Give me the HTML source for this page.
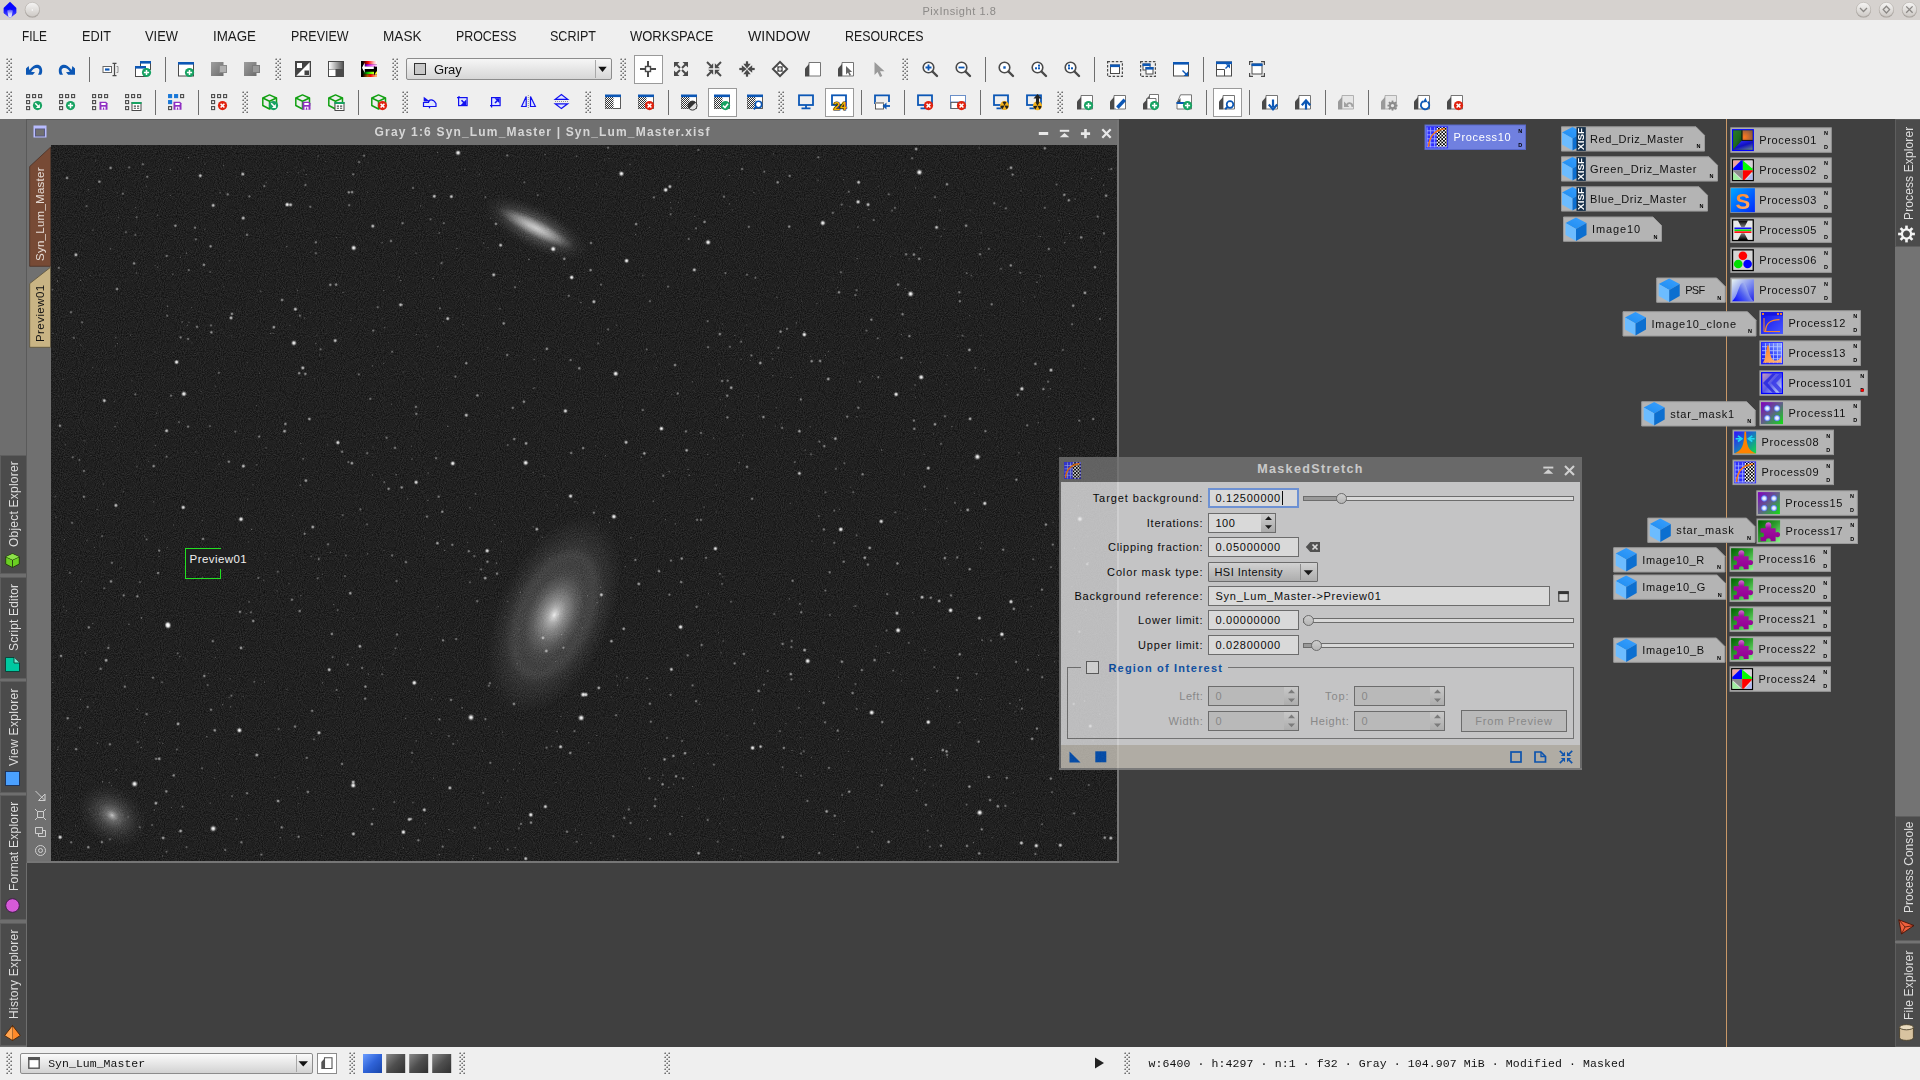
<!DOCTYPE html>
<html><head><meta charset="utf-8"><title>PixInsight 1.8</title>
<style>
html,body{margin:0;padding:0;background:#404040;}
body{width:1920px;height:1080px;position:relative;overflow:hidden;font-family:"Liberation Sans",sans-serif;}
div,span,svg{position:absolute;box-sizing:border-box;}
svg{overflow:visible;}
span{opacity:.999;}
</style></head><body>
<div style="left:0px;top:0px;width:1920px;height:20px;background:#d6d2cf;"></div>
<div style="left:0px;top:20px;width:1920px;height:99px;background:#efefef;"></div>
<div style="left:0px;top:119px;width:1920px;height:928px;background:#404040;"></div>
<div style="left:0px;top:1047px;width:1920px;height:33px;background:#efefef;"></div>
<span style="left:922.40px;top:4.85px;font:400 11px/normal 'Liberation Sans',sans-serif;color:#8c8a88;letter-spacing:0.569px;white-space:pre;">PixInsight 1.8</span>
<svg style="left:0;top:0" width="1920" height="20" viewBox="0 0 1920 20"><defs><linearGradient id="rbg" x1="0" y1="0" x2="0" y2="1"><stop offset="0" stop-color="#f6f5f4"/><stop offset="1" stop-color="#cdc9c5"/></linearGradient><linearGradient id="gem" x1="0" y1="0" x2="0" y2="1"><stop offset="0" stop-color="#4a4aff"/><stop offset="0.5" stop-color="#c8ccff"/><stop offset="1" stop-color="#eef0ff"/></linearGradient><linearGradient id="gem2" x1="0" y1="0" x2="0" y2="1"><stop offset="0" stop-color="#0000ff"/><stop offset="1" stop-color="#5a5aff"/></linearGradient></defs><path d="M10 1.700 L16.200 7.700 V13 L10 18 L3.800 13 V7.700 Z" fill="#0606ff"/><path d="M3.800 8 L10 10 L16.200 8 V13 L10 18 L3.800 13 Z" fill="url(#gem2)"/><path d="M10 9.500 L12.800 10.500 L11.600 16.700 L10 18 L8.400 16.700 L7.200 10.500 Z" fill="url(#gem)"/><circle cx="32.3" cy="10.100" r="7.500" fill="#96918c" opacity="0.8"/><circle cx="32.3" cy="9.500" r="7.200" fill="url(#rbg)" stroke="#b8b3ae" stroke-width="0.600"/><circle cx="1863.5" cy="10.100" r="7.500" fill="#96918c" opacity="0.8"/><circle cx="1863.5" cy="9.500" r="7.200" fill="url(#rbg)" stroke="#b8b3ae" stroke-width="0.600"/><circle cx="1886.4" cy="10.100" r="7.500" fill="#96918c" opacity="0.8"/><circle cx="1886.4" cy="9.500" r="7.200" fill="url(#rbg)" stroke="#b8b3ae" stroke-width="0.600"/><circle cx="1909.4" cy="10.100" r="7.500" fill="#96918c" opacity="0.8"/><circle cx="1909.4" cy="9.500" r="7.200" fill="url(#rbg)" stroke="#b8b3ae" stroke-width="0.600"/><circle cx="32.300" cy="10" r="0.700" fill="#fff"/><path d="M1860 8 L1863.500 11.500 L1867 8" fill="none" stroke="#8a8784" stroke-width="1.300"/><path d="M1886.400 6.200 L1889.600 9.600 L1886.400 13 L1883.200 9.600 Z" fill="none" stroke="#8a8784" stroke-width="1.300"/><path d="M1906.200 6.400 L1912.600 12.800 M1912.600 6.400 L1906.200 12.800" stroke="#8a8784" stroke-width="1.300"/></svg>
<span style="left:21.70px;top:28.13px;font:400 14px/normal 'Liberation Sans',sans-serif;color:#1a1a1a;white-space:pre;transform:scaleX(0.8456);transform-origin:0 0;">FILE</span>
<span style="left:81.70px;top:28.13px;font:400 14px/normal 'Liberation Sans',sans-serif;color:#1a1a1a;white-space:pre;transform:scaleX(0.9094);transform-origin:0 0;">EDIT</span>
<span style="left:145.20px;top:28.13px;font:400 14px/normal 'Liberation Sans',sans-serif;color:#1a1a1a;white-space:pre;transform:scaleX(0.9223);transform-origin:0 0;">VIEW</span>
<span style="left:212.70px;top:28.13px;font:400 14px/normal 'Liberation Sans',sans-serif;color:#1a1a1a;white-space:pre;transform:scaleX(0.9531);transform-origin:0 0;">IMAGE</span>
<span style="left:290.70px;top:28.13px;font:400 14px/normal 'Liberation Sans',sans-serif;color:#1a1a1a;white-space:pre;transform:scaleX(0.8906);transform-origin:0 0;">PREVIEW</span>
<span style="left:382.70px;top:28.13px;font:400 14px/normal 'Liberation Sans',sans-serif;color:#1a1a1a;white-space:pre;transform:scaleX(0.9704);transform-origin:0 0;">MASK</span>
<span style="left:455.70px;top:28.13px;font:400 14px/normal 'Liberation Sans',sans-serif;color:#1a1a1a;white-space:pre;transform:scaleX(0.8837);transform-origin:0 0;">PROCESS</span>
<span style="left:550.20px;top:28.13px;font:400 14px/normal 'Liberation Sans',sans-serif;color:#1a1a1a;white-space:pre;transform:scaleX(0.8960);transform-origin:0 0;">SCRIPT</span>
<span style="left:630.20px;top:28.13px;font:400 14px/normal 'Liberation Sans',sans-serif;color:#1a1a1a;white-space:pre;transform:scaleX(0.9280);transform-origin:0 0;">WORKSPACE</span>
<span style="left:748.20px;top:28.13px;font:400 14px/normal 'Liberation Sans',sans-serif;color:#1a1a1a;white-space:pre;transform:scaleX(1.0093);transform-origin:0 0;">WINDOW</span>
<span style="left:844.70px;top:28.13px;font:400 14px/normal 'Liberation Sans',sans-serif;color:#1a1a1a;white-space:pre;transform:scaleX(0.8852);transform-origin:0 0;">RESOURCES</span>
<svg style="left:0;top:0" width="1920" height="120" viewBox="0 0 1920 120"><defs><pattern id="chk" width="2" height="2" patternUnits="userSpaceOnUse"><rect width="2" height="2" fill="#fff"/><rect width="1" height="1" fill="#333"/><rect x="1" y="1" width="1" height="1" fill="#333"/></pattern>
<pattern id="grip" width="4" height="4" patternUnits="userSpaceOnUse"><rect width="4" height="4" fill="#efefef"/><rect width="2" height="2" fill="#8e8e8e"/><rect x="2" y="2" width="2" height="2" fill="#8e8e8e"/><rect x="2" y="0" width="1" height="1" fill="#fff"/><rect x="0" y="2" width="1" height="1" fill="#fff"/></pattern>
<linearGradient id="gg" x1="0" y1="0" x2="1" y2="1"><stop offset="0" stop-color="#9e9e9e"/><stop offset="1" stop-color="#6c6c6c"/></linearGradient>
<linearGradient id="g2" x1="0" y1="0" x2="1" y2="0"><stop offset="0" stop-color="#fff"/><stop offset="1" stop-color="#555"/></linearGradient>
<linearGradient id="cs1"><stop offset="0.1" stop-color="#000"/><stop offset="0.45" stop-color="#f00"/><stop offset="0.8" stop-color="#fbb"/><stop offset="1" stop-color="#fff"/></linearGradient>
<linearGradient id="cs2"><stop offset="0.1" stop-color="#000"/><stop offset="0.4" stop-color="#a0e"/><stop offset="0.7" stop-color="#f6f"/><stop offset="1" stop-color="#fdf"/></linearGradient>
<linearGradient id="cs3"><stop offset="0.1" stop-color="#000"/><stop offset="0.4" stop-color="#0b0"/><stop offset="0.65" stop-color="#7f0"/><stop offset="0.9" stop-color="#ff3"/></linearGradient>
<linearGradient id="cs4"><stop offset="0.1" stop-color="#000"/><stop offset="0.4" stop-color="#a50"/><stop offset="0.6" stop-color="#f00"/><stop offset="0.9" stop-color="#fa6"/></linearGradient>
<linearGradient id="rb" x1="0" y1="0" x2="1" y2="1"><stop offset="0" stop-color="#000" stop-opacity="0"/><stop offset="0.35" stop-color="#f03" stop-opacity="0.9"/><stop offset="0.5" stop-color="#f0f" stop-opacity="0.3"/><stop offset="0.7" stop-color="#3f3" stop-opacity="0.9"/><stop offset="0.85" stop-color="#ff0" stop-opacity="0.8"/><stop offset="1" stop-color="#fff"/></linearGradient>
</defs><rect x="634.5" y="55.5" width="28" height="28" fill="#fff" stroke="#9a9a9a" stroke-width="1"/><rect x="708.5" y="88.5" width="28" height="28" fill="#fff" stroke="#9a9a9a" stroke-width="1"/><rect x="825.5" y="88.5" width="28" height="28" fill="#fff" stroke="#9a9a9a" stroke-width="1"/><rect x="1213.5" y="88.5" width="28" height="28" fill="#fff" stroke="#9a9a9a" stroke-width="1"/><g transform="translate(26,61)"><path d="M0 7.400 L2.600 5 L3.400 9.100 C6 5.500 9 3.800 10.900 3.800 C14.500 3.800 16.200 6.500 16.200 9.700 C16.200 11.500 15.800 12.800 15.100 13.800 H12 C12.900 12.300 13.400 10.800 13.400 9.100 C13.400 7.500 12 6.900 10.100 6.900 C8.500 6.900 6.500 8.500 5.100 10.800 L9 11.300 L6.800 13.800 H0 Z" fill="#0c57b5"/></g><g transform="translate(59,61)"><g transform="translate(16,0) scale(-1,1)"><path d="M0 7.400 L2.600 5 L3.400 9.100 C6 5.500 9 3.800 10.900 3.800 C14.500 3.800 16.200 6.500 16.200 9.700 C16.200 11.500 15.800 12.800 15.100 13.800 H12 C12.900 12.300 13.400 10.800 13.400 9.100 C13.400 7.500 12 6.900 10.100 6.900 C8.500 6.900 6.500 8.500 5.100 10.800 L9 11.300 L6.800 13.800 H0 Z" fill="#0c57b5"/></g></g><g transform="translate(102,61)"><rect x="1" y="5.5" width="8.500" height="6" fill="#fff" stroke="#666" stroke-width="1"/><rect x="3" y="7.4" width="4.5" height="2.2" fill="#0c57b5"/><path d="M12.5 2.500 V14.5 M10.5 2.3 H14.5 M10.5 14.7 H14.5" stroke="#4a4a4a" stroke-width="1.2" fill="none"/><path d="M14.500 5.5 H16 V11.5 H14.5" stroke="#888" fill="none" stroke-width="0.9"/></g><g transform="translate(135,61)"><rect x="5.5" y="0.5" width="10" height="8" fill="#fff" stroke="#4a4a4a" stroke-width="1"/><rect x="5" y="0" width="11" height="2.6" fill="#0c57b5"/><rect x="0.5" y="5.5" width="10" height="10" fill="#fff" stroke="#4a4a4a" stroke-width="1"/><rect x="0" y="5" width="11" height="2.6" fill="#0c57b5"/><circle cx="11.5" cy="11.5" r="4.6" fill="#17a262"/><path d="M8.9 11.5 H14.1 M11.5 8.9 V14.1" stroke="#fff" stroke-width="1.5"/></g><g transform="translate(178,61)"><rect x="0.5" y="1.5" width="15" height="13.5" fill="#fff" stroke="#4a4a4a" stroke-width="1"/><rect x="0" y="1" width="16" height="2.6" fill="#0c57b5"/><circle cx="11.5" cy="11.5" r="4.6" fill="#17a262"/><path d="M8.9 11.5 H14.1 M11.5 8.9 V14.1" stroke="#fff" stroke-width="1.5"/></g><g transform="translate(211,61)"><rect x="0" y="1" width="12.5" height="14" fill="url(#gg)"/><rect x="8.5" y="4.5" width="7" height="7" fill="#b0b0b0" stroke="#8a8a8a" stroke-width="1"/></g><g transform="translate(244,61)"><rect x="0" y="1" width="12.5" height="14" fill="url(#gg)"/><rect x="8.5" y="4.5" width="7" height="7" fill="#9a9a9a" stroke="#7c7c7c" stroke-width="1"/></g><g transform="translate(295,61)"><rect x="0" y="0" width="16" height="16" fill="#444"/><path d="M1.3 14.7 L14.7 1.3 V14.7 Z" fill="#fff"/><rect x="2" y="2" width="5" height="5" fill="#fff"/><rect x="9.5" y="9.500" width="4.5" height="4.5" fill="#444"/></g><g transform="translate(328,61)"><rect x="0" y="0" width="16" height="16" fill="#4a4a4a"/><rect x="1" y="1" width="14" height="7" fill="url(#g2)"/><rect x="1" y="8.5" width="6.500" height="6.500" fill="#fff"/></g><g transform="translate(361,61)"><rect x="0" y="0" width="16" height="16" fill="#000"/><rect x="0" y="0" width="16" height="3.300" fill="url(#cs1)"/><rect x="0" y="3.300" width="16" height="2.400" fill="url(#cs2)"/><rect x="0" y="10.500" width="16" height="2.800" fill="url(#cs3)"/><rect x="0" y="13.300" width="16" height="2.700" fill="url(#cs4)"/><path d="M1 6.700 L3.700 1.700 V5.400 H12.800 V8 H3.700 V11.700 Z" fill="#fff"/><path d="M15.600 9.700 L13 4.700 V8 H4 V10.600 H13 V14.700 Z" fill="#000"/></g><g transform="translate(640,61)"><path d="M0 8 H16 M8 0 V16" stroke="#4a4a4a" stroke-width="2"/><rect x="5.500" y="5.500" width="5" height="5" fill="#fff" stroke="#4a4a4a" stroke-width="1.400"/></g><g transform="translate(673,61)"><g transform="rotate(0 8 8)"><path d="M3 3 L7 7" stroke="#4a4a4a" stroke-width="2"/><path d="M1 1 H6.5 L1 6.5 Z" fill="#4a4a4a"/></g><g transform="rotate(90 8 8)"><path d="M3 3 L7 7" stroke="#4a4a4a" stroke-width="2"/><path d="M1 1 H6.5 L1 6.5 Z" fill="#4a4a4a"/></g><g transform="rotate(180 8 8)"><path d="M3 3 L7 7" stroke="#4a4a4a" stroke-width="2"/><path d="M1 1 H6.5 L1 6.5 Z" fill="#4a4a4a"/></g><g transform="rotate(270 8 8)"><path d="M3 3 L7 7" stroke="#4a4a4a" stroke-width="2"/><path d="M1 1 H6.5 L1 6.5 Z" fill="#4a4a4a"/></g></g><g transform="translate(706,61)"><g transform="rotate(0 8 8)"><path d="M1 1 L5 5" stroke="#4a4a4a" stroke-width="2"/><path d="M7.2 7.2 H2.200 L7.2 2.2 Z" fill="#4a4a4a"/></g><g transform="rotate(90 8 8)"><path d="M1 1 L5 5" stroke="#4a4a4a" stroke-width="2"/><path d="M7.2 7.2 H2.200 L7.2 2.2 Z" fill="#4a4a4a"/></g><g transform="rotate(180 8 8)"><path d="M1 1 L5 5" stroke="#4a4a4a" stroke-width="2"/><path d="M7.2 7.2 H2.200 L7.2 2.2 Z" fill="#4a4a4a"/></g><g transform="rotate(270 8 8)"><path d="M1 1 L5 5" stroke="#4a4a4a" stroke-width="2"/><path d="M7.2 7.2 H2.200 L7.2 2.2 Z" fill="#4a4a4a"/></g></g><g transform="translate(739,61)"><g transform="rotate(0 8 8)"><path d="M8 0.300 V4" stroke="#4a4a4a" stroke-width="2.200"/><path d="M8 7.600 L4.300 2.800 H11.700 Z" fill="#4a4a4a"/></g><g transform="rotate(90 8 8)"><path d="M8 0.300 V4" stroke="#4a4a4a" stroke-width="2.200"/><path d="M8 7.600 L4.300 2.800 H11.700 Z" fill="#4a4a4a"/></g><g transform="rotate(180 8 8)"><path d="M8 0.300 V4" stroke="#4a4a4a" stroke-width="2.200"/><path d="M8 7.600 L4.300 2.800 H11.700 Z" fill="#4a4a4a"/></g><g transform="rotate(270 8 8)"><path d="M8 0.300 V4" stroke="#4a4a4a" stroke-width="2.200"/><path d="M8 7.600 L4.300 2.800 H11.700 Z" fill="#4a4a4a"/></g></g><g transform="translate(772,61)"><path d="M8 -0.500 L16.500 8 L8 16.500 L-0.500 8 Z" fill="#4a4a4a"/><g transform="rotate(0 8 8)"><path d="M8 2.200 L10.800 5.300 H5.200 Z" fill="#fff"/></g><g transform="rotate(90 8 8)"><path d="M8 2.200 L10.800 5.300 H5.200 Z" fill="#fff"/></g><g transform="rotate(180 8 8)"><path d="M8 2.200 L10.800 5.300 H5.200 Z" fill="#fff"/></g><g transform="rotate(270 8 8)"><path d="M8 2.200 L10.800 5.300 H5.200 Z" fill="#fff"/></g><path d="M8 6.300 V9.700 M6.300 8 H9.700" stroke="#fff" stroke-width="1.200"/></g><g transform="translate(805,61)"><path d="M4 1.5 H15.5 V15 H4 Z" fill="#fff" stroke="#666" stroke-width="0.9"/><path d="M0 15.4 V7.5 L4 3 V15.4 Z" fill="#4a4a4a"/></g><g transform="translate(838,61)"><path d="M4 1.5 H15.5 V15 H4 Z" fill="#fff" stroke="#666" stroke-width="0.9"/><path d="M0 15.4 V7.5 L4 3 V15.4 Z" fill="#4a4a4a"/><path d="M8 5 V13.5 L10 11.5 L11.500 14.8 L13 14 L11.5 11 H14.2 Z" fill="#666"/></g><g transform="translate(871,61)"><path d="M3.500 1 V14 L6.6 11 L9 16 L11.3 15 L9 10.300 H13.500 Z" fill="#9a9a9a"/></g><g transform="translate(922,61)"><circle cx="6.5" cy="6.5" r="5.3" fill="#fff" stroke="#4a4a4a" stroke-width="1.6"/><path d="M10.5 10.5 L15 15" stroke="#4a4a4a" stroke-width="2.4" stroke-linecap="round"/><path d="M3.500 6.5 H9.500 M6.5 3.500 V9.5" stroke="#0c57b5" stroke-width="1.8"/></g><g transform="translate(955,61)"><circle cx="6.5" cy="6.5" r="5.3" fill="#fff" stroke="#4a4a4a" stroke-width="1.6"/><path d="M10.5 10.5 L15 15" stroke="#4a4a4a" stroke-width="2.4" stroke-linecap="round"/><path d="M3.500 6.5 H9.500" stroke="#0c57b5" stroke-width="1.8"/></g><g transform="translate(998,61)"><circle cx="6.5" cy="6.5" r="5.3" fill="#fff" stroke="#4a4a4a" stroke-width="1.6"/><path d="M10.5 10.5 L15 15" stroke="#4a4a4a" stroke-width="2.4" stroke-linecap="round"/><rect x="5.3" y="5.3" width="2.4" height="2.4" fill="#0c57b5"/></g><g transform="translate(1031,61)"><circle cx="6.5" cy="6.5" r="5.3" fill="#fff" stroke="#4a4a4a" stroke-width="1.6"/><path d="M10.5 10.5 L15 15" stroke="#4a4a4a" stroke-width="2.4" stroke-linecap="round"/><rect x="4" y="6.3" width="2" height="2" fill="#0c57b5"/><rect x="7" y="6.3" width="2" height="2" fill="#0c57b5"/><rect x="7" y="3.600" width="2" height="2" fill="#0c57b5"/></g><g transform="translate(1064,61)"><circle cx="6.5" cy="6.5" r="5.3" fill="#fff" stroke="#4a4a4a" stroke-width="1.6"/><path d="M10.5 10.5 L15 15" stroke="#4a4a4a" stroke-width="2.4" stroke-linecap="round"/><rect x="4" y="6.3" width="2" height="2" fill="#0c57b5"/><rect x="7" y="6.3" width="2" height="2" fill="#0c57b5"/><rect x="4" y="3.600" width="2" height="2" fill="#0c57b5"/></g><g transform="translate(1107,61)"><rect x="0.6" y="0.6" width="14.8" height="14.8" fill="none" stroke="#4a4a4a" stroke-width="1.2" stroke-dasharray="2.500 1.6"/><rect x="3.5" y="4.0" width="9" height="8.5" fill="#fff" stroke="#4a4a4a" stroke-width="1"/><rect x="3" y="3.5" width="10" height="2.6" fill="#0c57b5"/></g><g transform="translate(1140,61)"><rect x="0.6" y="0.6" width="14.8" height="14.8" fill="none" stroke="#4a4a4a" stroke-width="1.2" stroke-dasharray="2.500 1.6"/><rect x="3.0" y="3.0" width="7" height="6" fill="#fff" stroke="#4a4a4a" stroke-width="1"/><rect x="2.5" y="2.5" width="8" height="2.6" fill="#0c57b5"/><rect x="6.0" y="6.5" width="7" height="6.5" fill="#fff" stroke="#4a4a4a" stroke-width="1"/><rect x="5.5" y="6" width="8" height="2.6" fill="#0c57b5"/></g><g transform="translate(1173,61)"><rect x="0.5" y="1.5" width="15" height="13.5" fill="#fff" stroke="#4a4a4a" stroke-width="1"/><rect x="0" y="1" width="16" height="2.6" fill="#0c57b5"/><path d="M9.500 9.500 L14 14" stroke="#0c57b5" stroke-width="1.4"/><path d="M15 10.500 V15 H10.500 Z" fill="#0c57b5"/></g><g transform="translate(1216,61)"><rect x="0.5" y="1.0" width="15" height="14" fill="#fff" stroke="#4a4a4a" stroke-width="1"/><rect x="0" y="0.5" width="16" height="2.6" fill="#0c57b5"/><path d="M0.500 8.500 H8.500 V15" fill="none" stroke="#4a4a4a" stroke-width="1"/><path d="M9.500 7.500 L13 4" stroke="#0c57b5" stroke-width="1.4"/><path d="M14 3.2 V7.6 L9.600 3.2 Z" fill="#0c57b5"/></g><g transform="translate(1249,61)"><rect x="3.0" y="3.0" width="10" height="10" fill="#fff" stroke="#4a4a4a" stroke-width="1"/><rect x="2.5" y="2.5" width="11" height="2.6" fill="#0c57b5"/><path d="M0.600 4 V0.600 H4 M12 0.600 H15.400 V4 M15.400 12 V15.400 H12 M4 15.400 H0.600 V12" fill="none" stroke="#4a4a4a" stroke-width="1.2"/></g><g transform="translate(26,94)"><rect x="0.6" y="0.6" width="3" height="3" fill="none" stroke="#4a4a4a" stroke-width="1.1"/><rect x="6.6" y="0.6" width="3" height="3" fill="none" stroke="#4a4a4a" stroke-width="1.1"/><rect x="12.6" y="0.6" width="3" height="3" fill="none" stroke="#4a4a4a" stroke-width="1.1"/><rect x="0.6" y="6.6" width="3" height="3" fill="none" stroke="#4a4a4a" stroke-width="1.1"/><rect x="0.6" y="12.6" width="3" height="3" fill="none" stroke="#4a4a4a" stroke-width="1.1"/><circle cx="11.5" cy="11.6" r="4.6" fill="#17a262"/><path d="M9.2 9.3 L12.7 12.799999999999999" stroke="#fff" stroke-width="1.5"/><path d="M13.9 10.0 V14.0 H9.9 Z" fill="#fff"/></g><g transform="translate(59,94)"><rect x="0.6" y="0.6" width="3" height="3" fill="none" stroke="#4a4a4a" stroke-width="1.1"/><rect x="6.6" y="0.6" width="3" height="3" fill="none" stroke="#4a4a4a" stroke-width="1.1"/><rect x="12.6" y="0.6" width="3" height="3" fill="none" stroke="#4a4a4a" stroke-width="1.1"/><rect x="0.6" y="6.6" width="3" height="3" fill="none" stroke="#4a4a4a" stroke-width="1.1"/><rect x="0.6" y="12.6" width="3" height="3" fill="none" stroke="#4a4a4a" stroke-width="1.1"/><circle cx="11.5" cy="11.6" r="4.6" fill="#17a262"/><path d="M8.9 11.6 H14.1 M11.5 9.0 V14.2" stroke="#fff" stroke-width="1.5"/></g><g transform="translate(92,94)"><rect x="0.6" y="0.6" width="3" height="3" fill="none" stroke="#4a4a4a" stroke-width="1.1"/><rect x="6.6" y="0.6" width="3" height="3" fill="none" stroke="#4a4a4a" stroke-width="1.1"/><rect x="12.6" y="0.6" width="3" height="3" fill="none" stroke="#4a4a4a" stroke-width="1.1"/><rect x="0.6" y="6.6" width="3" height="3" fill="none" stroke="#4a4a4a" stroke-width="1.1"/><rect x="0.6" y="12.6" width="3" height="3" fill="none" stroke="#4a4a4a" stroke-width="1.1"/><path d="M7.5 7.7 H14.0 L15.5 9.2 V15.7 H7.5 Z" fill="#8f2fc2"/><rect x="9.3" y="9.0" width="4.4" height="2" fill="#fff"/><rect x="9.5" y="12.7" width="4" height="3" fill="#fff"/><rect x="10.9" y="13.5" width="1.3" height="2.2" fill="#8f2fc2"/></g><g transform="translate(125,94)"><rect x="0.6" y="0.6" width="3" height="3" fill="none" stroke="#4a4a4a" stroke-width="1.1"/><rect x="6.6" y="0.6" width="3" height="3" fill="none" stroke="#4a4a4a" stroke-width="1.1"/><rect x="12.6" y="0.6" width="3" height="3" fill="none" stroke="#4a4a4a" stroke-width="1.1"/><rect x="0.6" y="6.6" width="3" height="3" fill="none" stroke="#4a4a4a" stroke-width="1.1"/><rect x="0.6" y="12.6" width="3" height="3" fill="none" stroke="#4a4a4a" stroke-width="1.1"/><rect x="7" y="8.5" width="9" height="8" fill="#fff" stroke="#4a4a4a" stroke-width="1"/><rect x="6.5" y="8.0" width="10" height="2" fill="#17a262"/><path d="M8.8 12.1 H11 M12 12.1 H14.2 M8.8 14.3 H11 M12 14.3 H14.2" stroke="#4a4a4a" stroke-width="1.1"/></g><g transform="translate(168,94)"><rect x="0.6" y="0.6" width="3" height="3" fill="#1a78d8" stroke="#1a78d8" stroke-width="1.1"/><rect x="6.6" y="0.6" width="3" height="3" fill="#1a78d8" stroke="#1a78d8" stroke-width="1.1"/><rect x="12.6" y="0.6" width="3" height="3" fill="none" stroke="#4a4a4a" stroke-width="1.1"/><rect x="0.6" y="6.6" width="3" height="3" fill="#1a78d8" stroke="#1a78d8" stroke-width="1.1"/><rect x="0.6" y="12.6" width="3" height="3" fill="none" stroke="#4a4a4a" stroke-width="1.1"/><path d="M5.5 7.7 H12.0 L13.5 9.2 V15.7 H5.5 Z" fill="#8f2fc2"/><rect x="7.3" y="9.0" width="4.4" height="2" fill="#fff"/><rect x="7.5" y="12.7" width="4" height="3" fill="#fff"/><rect x="8.9" y="13.5" width="1.3" height="2.2" fill="#8f2fc2"/></g><g transform="translate(211,94)"><rect x="0.6" y="0.6" width="3" height="3" fill="none" stroke="#4a4a4a" stroke-width="1.1"/><rect x="6.6" y="0.6" width="3" height="3" fill="none" stroke="#4a4a4a" stroke-width="1.1"/><rect x="12.6" y="0.6" width="3" height="3" fill="none" stroke="#4a4a4a" stroke-width="1.1"/><rect x="0.6" y="6.6" width="3" height="3" fill="none" stroke="#4a4a4a" stroke-width="1.1"/><rect x="0.6" y="12.6" width="3" height="3" fill="none" stroke="#4a4a4a" stroke-width="1.1"/><circle cx="11.5" cy="11.6" r="4.6" fill="#e0220f"/><path d="M9.6 9.7 L13.4 13.5 M13.4 9.7 L9.6 13.5" stroke="#fff" stroke-width="1.6"/></g><g transform="translate(262,94)"><g fill="none" stroke="#12a012" stroke-width="1.5" stroke-linejoin="round"><path d="M7.5 0.9 L14.5 4 V11.5 L7.5 15 L0.8 11.5 V4 Z"/><path d="M0.8 4 L7.5 7.2 L14.5 4 M7.500 7.200 V15"/></g><circle cx="11.5" cy="11.6" r="4.6" fill="#17a262"/><path d="M9.2 9.3 L12.7 12.799999999999999" stroke="#fff" stroke-width="1.5"/><path d="M13.9 10.0 V14.0 H9.9 Z" fill="#fff"/></g><g transform="translate(295,94)"><g fill="none" stroke="#12a012" stroke-width="1.5" stroke-linejoin="round"><path d="M7.5 0.9 L14.5 4 V11.5 L7.5 15 L0.8 11.5 V4 Z"/><path d="M0.8 4 L7.5 7.2 L14.5 4 M7.500 7.200 V15"/></g><path d="M7.5 7.7 H14.0 L15.5 9.2 V15.7 H7.5 Z" fill="#8f2fc2"/><rect x="9.3" y="9.0" width="4.4" height="2" fill="#fff"/><rect x="9.5" y="12.7" width="4" height="3" fill="#fff"/><rect x="10.9" y="13.5" width="1.3" height="2.2" fill="#8f2fc2"/></g><g transform="translate(328,94)"><g fill="none" stroke="#12a012" stroke-width="1.5" stroke-linejoin="round"><path d="M7.5 0.9 L14.5 4 V11.5 L7.5 15 L0.8 11.5 V4 Z"/><path d="M0.8 4 L7.5 7.2 L14.5 4 M7.500 7.200 V15"/></g><rect x="7" y="8.5" width="9" height="8" fill="#fff" stroke="#4a4a4a" stroke-width="1"/><rect x="6.5" y="8.0" width="10" height="2" fill="#17a262"/><path d="M8.8 12.1 H11 M12 12.1 H14.2 M8.8 14.3 H11 M12 14.3 H14.2" stroke="#4a4a4a" stroke-width="1.1"/></g><g transform="translate(371,94)"><g fill="none" stroke="#12a012" stroke-width="1.5" stroke-linejoin="round"><path d="M7.5 0.9 L14.5 4 V11.5 L7.5 15 L0.8 11.5 V4 Z"/><path d="M0.8 4 L7.5 7.2 L14.5 4 M7.500 7.200 V15"/></g><circle cx="11.5" cy="11.6" r="4.6" fill="#e0220f"/><path d="M9.6 9.7 L13.4 13.5 M13.4 9.7 L9.6 13.5" stroke="#fff" stroke-width="1.6"/></g><g transform="translate(421,94)"><path d="M2.500 12.500 V8.500 H7.500 C7.500 5.500 12 4.300 15 9.500 V12.500 Z" fill="#dfe5ff" stroke="#1010f0" stroke-width="1.200"/><path d="M2.700 2.700 V7.600 H9 Z" fill="#1010f0"/><path d="M8.500 12.500 V14.300" stroke="#1010f0" stroke-width="1.300"/></g><g transform="translate(454,94)"><rect x="4.600" y="3.600" width="8.500" height="8" fill="#dfe5ff" stroke="#1010f0" stroke-width="1.200"/><path d="M5 2 V4 M3 3.600 H5" stroke="#1010f0" stroke-width="1.200"/><path d="M12.300 5.500 V11 H6.800 Z" fill="#1010f0"/><path d="M7.500 6.200 L10.500 9.200" stroke="#1010f0" stroke-width="1.600"/></g><g transform="translate(487,94)"><rect x="4.600" y="3.600" width="8.500" height="8" fill="#dfe5ff" stroke="#1010f0" stroke-width="1.200"/><path d="M4.600 11.600 V13.500 M3 11.600 H5" stroke="#1010f0" stroke-width="1.200"/><path d="M7.500 4.200 H12.500 V9.200 Z" fill="#1010f0"/><path d="M8 9 L11 6" stroke="#1010f0" stroke-width="1.600"/></g><g transform="translate(520,94)"><path d="M1.600 12.500 L6.200 2.600 V12.500 Z M15.400 12.500 L10.500 2.600 V12.500 Z" fill="#dfe5ff" stroke="#1010f0" stroke-width="1.200"/><path d="M8.300 1 V14.500" stroke="#888" stroke-width="0.900" stroke-dasharray="1 1"/></g><g transform="translate(553,94)"><path d="M2.200 5.300 H14.700 L8.400 0.500 Z M2.200 9.800 H14.700 L8.400 14.600 Z" fill="#dfe5ff" stroke="#1010f0" stroke-width="1.200"/><path d="M2 7.500 H15" stroke="#888" stroke-width="0.900" stroke-dasharray="1 1"/></g><g transform="translate(605,94)"><rect x="0.5" y="1.5" width="15" height="13" fill="#fff" stroke="#4a4a4a" stroke-width="0.9"/><rect x="0.5" y="2" width="8" height="12.500" fill="url(#chk)"/><rect x="0" y="0.5" width="16" height="2.6" fill="#0c57b5"/></g><g transform="translate(638,94)"><rect x="0.5" y="1.5" width="15" height="13" fill="#fff" stroke="#4a4a4a" stroke-width="0.9"/><rect x="0.5" y="2" width="8" height="12.500" fill="url(#chk)"/><rect x="0" y="0.5" width="16" height="2.6" fill="#0c57b5"/><circle cx="11.5" cy="11.6" r="4.6" fill="#e0220f"/><path d="M9.6 9.7 L13.4 13.5 M13.4 9.7 L9.6 13.5" stroke="#fff" stroke-width="1.6"/></g><g transform="translate(681,94)"><rect x="0.5" y="1.5" width="15" height="13" fill="#fff" stroke="#4a4a4a" stroke-width="0.9"/><rect x="0.5" y="2" width="8" height="12.500" fill="url(#chk)"/><rect x="0" y="0.5" width="16" height="2.6" fill="#0c57b5"/><circle cx="11.5" cy="11.600" r="4.500" fill="#333"/><path d="M8.300 14.800 A4.500 4.500 0 0 0 14.700 8.400 Z" fill="#fff" opacity="0.85"/><circle cx="11.5" cy="11.600" r="4.500" fill="none" stroke="#333" stroke-width="1"/></g><g transform="translate(714,94)"><rect x="0.5" y="1.5" width="15" height="13" fill="#fff" stroke="#4a4a4a" stroke-width="0.9"/><rect x="0.5" y="2" width="8" height="12.500" fill="url(#chk)"/><rect x="0" y="0.5" width="16" height="2.6" fill="#0c57b5"/><circle cx="11.5" cy="11.600" r="4.600" fill="#17a262"/><path d="M9 11.600 L11 13.500 L14 9.700" fill="none" stroke="#fff" stroke-width="1.600"/></g><g transform="translate(747,94)"><rect x="0.5" y="1.5" width="15" height="13" fill="#fff" stroke="#4a4a4a" stroke-width="0.9"/><rect x="0.5" y="2" width="8" height="12.500" fill="url(#chk)"/><rect x="0" y="0.5" width="16" height="2.6" fill="#0c57b5"/><circle cx="11.500" cy="10.500" r="3.200" fill="#fff" stroke="#0c57b5" stroke-width="1.600"/><path d="M9.300 12.800 L6.800 15.300" stroke="#0c57b5" stroke-width="2"/></g><g transform="translate(798,94)"><rect x="1" y="1.3" width="14" height="9.7" fill="none" stroke="#0c57b5" stroke-width="1.8"/><path d="M8 11 V14 M3.500 14.3 H12.5" stroke="#0c57b5" stroke-width="1.8"/></g><g transform="translate(831,94)"><rect x="1" y="1.3" width="14" height="9.7" fill="none" stroke="#0c57b5" stroke-width="1.8"/><path d="M8 11 V14 M3.500 14.3 H12.5" stroke="#0c57b5" stroke-width="1.8"/><text x="9" y="15.800" font-family="Liberation Sans" font-weight="700" font-size="10.500" text-anchor="middle" fill="#f5b400" stroke="#1a1a1a" stroke-width="1.100" paint-order="stroke" textLength="13" lengthAdjust="spacingAndGlyphs">24</text></g><g transform="translate(874,94)"><path d="M1 10 V1.300 H15 V8" fill="none" stroke="#0c57b5" stroke-width="1.800"/><rect x="1.500" y="8.500" width="8" height="6.500" fill="#fff" stroke="#4a4a4a" stroke-width="0.900"/><rect x="1" y="8" width="9" height="1.800" fill="#9a9a9a"/><path d="M10 12 H16" stroke="#0c57b5" stroke-width="1.800"/><path d="M8.500 12 L12.500 8.500 V15.500 Z" fill="#0c57b5"/></g><g transform="translate(917,94)"><rect x="1" y="1.3" width="14" height="9.7" fill="none" stroke="#0c57b5" stroke-width="1.8"/><path d="M8 11 V14 M3.500 14.3 H12.5" stroke="#0c57b5" stroke-width="1.8"/><circle cx="11.5" cy="11.6" r="4.6" fill="#e0220f"/><path d="M9.6 9.7 L13.4 13.5 M13.4 9.7 L9.6 13.5" stroke="#fff" stroke-width="1.6"/></g><g transform="translate(950,94)"><rect x="0.500" y="1.500" width="15" height="13" fill="#fff" stroke="#6a8fc8" stroke-width="1"/><path d="M0.500 8 H15.500" stroke="#6a8fc8"/><rect x="1" y="8.500" width="7" height="6" fill="#fff" stroke="#4a4a4a" stroke-width="0.8"/><circle cx="11.5" cy="11.6" r="4.6" fill="#e0220f"/><path d="M9.6 9.7 L13.4 13.5 M13.4 9.7 L9.6 13.5" stroke="#fff" stroke-width="1.6"/></g><g transform="translate(993,94)"><rect x="1" y="1.3" width="14" height="9.7" fill="none" stroke="#0c57b5" stroke-width="1.8"/><path d="M8 11 V14 M3.500 14.3 H12.5" stroke="#0c57b5" stroke-width="1.8"/><circle cx="11.5" cy="11.6" r="4.5" fill="#f5b21a"/><g fill="#222"><path d="M11.5 11.6 L9.5 8.1 A4 4 0 0 1 13.5 8.1 Z"/><path d="M11.5 11.6 L15.5 11.799999999999999 A4 4 0 0 1 13.5 15.2 Z"/><path d="M11.5 11.6 L9.5 15.2 A4 4 0 0 1 7.5 11.799999999999999 Z"/></g></g><g transform="translate(1026,94)"><rect x="1" y="1.3" width="14" height="9.7" fill="none" stroke="#0c57b5" stroke-width="1.8"/><path d="M8 11 V14 M3.500 14.3 H12.5" stroke="#0c57b5" stroke-width="1.8"/><circle cx="11.5" cy="11.8" r="4.5" fill="#f5b21a"/><g fill="#222"><path d="M11.5 11.8 L9.5 8.3 A4 4 0 0 1 13.5 8.3 Z"/><path d="M11.5 11.8 L15.5 12.0 A4 4 0 0 1 13.5 15.4 Z"/><path d="M11.5 11.8 L9.5 15.4 A4 4 0 0 1 7.5 12.0 Z"/></g><path d="M11.500 0 L15.500 4.500 H13 V8 H10 V4.500 H7.500 Z" fill="#222"/></g><g transform="translate(1077,94)"><path d="M4 1.5 H15.5 V15 H4 Z" fill="#fff" stroke="#666" stroke-width="0.9"/><path d="M0 15.4 V7.5 L4 3 V15.4 Z" fill="#4a4a4a"/><circle cx="11.5" cy="11.6" r="4.6" fill="#17a262"/><path d="M8.9 11.6 H14.1 M11.5 9.0 V14.2" stroke="#fff" stroke-width="1.5"/></g><g transform="translate(1110,94)"><path d="M4 1.5 H15.5 V15 H4 Z" fill="#fff" stroke="#666" stroke-width="0.9"/><path d="M0 15.4 V7.5 L4 3 V15.4 Z" fill="#4a4a4a"/><path d="M5.500 15.500 L6.500 12 L13.500 4.500 L16 7 L9 14.500 Z" fill="#0c57b5"/><path d="M5.500 15.500 L6.300 12.600 L8.400 14.700 Z" fill="#fff"/></g><g transform="translate(1143,94)"><path d="M6.500 0.500 H15.500 V11 H6.500 Z" fill="#fff" stroke="#666" stroke-width="0.9"/><path d="M3 11 V5 L6.500 1.500 V11 Z" fill="#666"/><path d="M4 4.500 H13 V15 H4 Z" fill="#fff" stroke="#666" stroke-width="0.9"/><path d="M0 15.400 V9.500 L4 5.500 V15.400 Z" fill="#4a4a4a"/><circle cx="11.5" cy="11.6" r="4.6" fill="#17a262"/><path d="M8.9 11.6 H14.1 M11.5 9.0 V14.2" stroke="#fff" stroke-width="1.5"/></g><g transform="translate(1176,94)"><path d="M4.500 0.800 H15.500 V15 H1 V9 Z" fill="#fff" stroke="#666" stroke-width="0.9"/><path d="M0.500 9 L4.500 4 V9 Z" fill="#4a4a4a"/><path d="M0.500 9 H9" stroke="#0c57b5" stroke-width="2"/><circle cx="11.5" cy="11.6" r="4.6" fill="#17a262"/><path d="M8.9 11.6 H14.1 M11.5 9.0 V14.2" stroke="#fff" stroke-width="1.5"/></g><g transform="translate(1219,94)"><path d="M4 1.5 H15.5 V15 H4 Z" fill="#fff" stroke="#666" stroke-width="0.9"/><path d="M0 15.4 V7.5 L4 3 V15.4 Z" fill="#4a4a4a"/><circle cx="11" cy="10.500" r="3.300" fill="#fff" stroke="#0c57b5" stroke-width="1.700"/><path d="M8.700 12.800 L6.200 15.300" stroke="#0c57b5" stroke-width="2.100"/></g><g transform="translate(1262,94)"><path d="M4 1.5 H15.5 V15 H4 Z" fill="#fff" stroke="#666" stroke-width="0.9"/><path d="M0 15.4 V7.5 L4 3 V15.4 Z" fill="#4a4a4a"/><path d="M11 5.500 V13" stroke="#0c57b5" stroke-width="2.200"/><path d="M6.800 10.500 L11 15.300 L15.200 10.500" fill="none" stroke="#0c57b5" stroke-width="2.200"/></g><g transform="translate(1295,94)"><path d="M4 1.5 H15.5 V15 H4 Z" fill="#fff" stroke="#666" stroke-width="0.9"/><path d="M0 15.4 V7.5 L4 3 V15.4 Z" fill="#4a4a4a"/><path d="M11 15.500 V8" stroke="#0c57b5" stroke-width="2.200"/><path d="M6.800 11.300 L11 6.500 L15.200 11.300" fill="none" stroke="#0c57b5" stroke-width="2.200"/></g><g transform="translate(1338,94)"><path d="M4 1.5 H15.5 V15 H4 Z" fill="#e6e6e6" stroke="#aaa" stroke-width="0.9"/><path d="M0 15.4 V7.5 L4 3 V15.4 Z" fill="#9a9a9a"/><g transform="translate(6,4.500) scale(0.6)" opacity="0.9"><path d="M0 5 V14 H9 Z" fill="#9a9a9a"/><path d="M5 11.500 C5.5 6.500 13.8 5.5 14.2 13.900" fill="none" stroke="#9a9a9a" stroke-width="3.2"/></g></g><g transform="translate(1381,94)"><path d="M4 1.5 H15.5 V15 H4 Z" fill="#e6e6e6" stroke="#aaa" stroke-width="0.9"/><path d="M0 15.4 V7.5 L4 3 V15.4 Z" fill="#9a9a9a"/><g transform="translate(11.5,11.600)"><circle r="2.600" fill="none" stroke="#8a8a8a" stroke-width="1.800"/><rect x="-0.9" y="-5" width="1.8" height="2.200" fill="#8a8a8a" transform="rotate(0)"/><rect x="-0.9" y="-5" width="1.8" height="2.200" fill="#8a8a8a" transform="rotate(45)"/><rect x="-0.9" y="-5" width="1.8" height="2.200" fill="#8a8a8a" transform="rotate(90)"/><rect x="-0.9" y="-5" width="1.8" height="2.200" fill="#8a8a8a" transform="rotate(135)"/><rect x="-0.9" y="-5" width="1.8" height="2.200" fill="#8a8a8a" transform="rotate(180)"/><rect x="-0.9" y="-5" width="1.8" height="2.200" fill="#8a8a8a" transform="rotate(225)"/><rect x="-0.9" y="-5" width="1.8" height="2.200" fill="#8a8a8a" transform="rotate(270)"/><rect x="-0.9" y="-5" width="1.8" height="2.200" fill="#8a8a8a" transform="rotate(315)"/></g></g><g transform="translate(1414,94)"><path d="M4 1.5 H15.5 V15 H4 Z" fill="#fff" stroke="#666" stroke-width="0.9"/><path d="M0 15.4 V7.5 L4 3 V15.4 Z" fill="#4a4a4a"/><path d="M13.700 7.800 A4.200 4.200 0 1 1 9.500 7.200" fill="none" stroke="#0c57b5" stroke-width="1.800"/><path d="M9.500 4 L13.500 6.500 L10 9.500 Z" fill="#0c57b5" transform="rotate(35 11 7)"/></g><g transform="translate(1447,94)"><path d="M4 1.5 H15.5 V15 H4 Z" fill="#fff" stroke="#666" stroke-width="0.9"/><path d="M0 15.4 V7.5 L4 3 V15.4 Z" fill="#4a4a4a"/><circle cx="11.5" cy="11.6" r="4.6" fill="#e0220f"/><path d="M9.6 9.7 L13.4 13.5 M13.4 9.7 L9.6 13.5" stroke="#fff" stroke-width="1.6"/></g><rect x="5.8" y="57.9" width="1" height="1" fill="#fff"/><rect x="6.5" y="58.6" width="1.300" height="1.300" fill="#3c3c3c"/><rect x="9.8" y="57.9" width="1" height="1" fill="#fff"/><rect x="10.5" y="58.6" width="1.300" height="1.300" fill="#3c3c3c"/><rect x="7.8" y="59.9" width="1" height="1" fill="#fff"/><rect x="8.5" y="60.6" width="1.300" height="1.300" fill="#3c3c3c"/><rect x="5.8" y="61.9" width="1" height="1" fill="#fff"/><rect x="6.5" y="62.6" width="1.300" height="1.300" fill="#3c3c3c"/><rect x="9.8" y="61.9" width="1" height="1" fill="#fff"/><rect x="10.5" y="62.6" width="1.300" height="1.300" fill="#3c3c3c"/><rect x="7.8" y="63.9" width="1" height="1" fill="#fff"/><rect x="8.5" y="64.6" width="1.300" height="1.300" fill="#3c3c3c"/><rect x="5.8" y="65.89999999999999" width="1" height="1" fill="#fff"/><rect x="6.5" y="66.6" width="1.300" height="1.300" fill="#3c3c3c"/><rect x="9.8" y="65.89999999999999" width="1" height="1" fill="#fff"/><rect x="10.5" y="66.6" width="1.300" height="1.300" fill="#3c3c3c"/><rect x="7.8" y="67.89999999999999" width="1" height="1" fill="#fff"/><rect x="8.5" y="68.6" width="1.300" height="1.300" fill="#3c3c3c"/><rect x="5.8" y="69.89999999999999" width="1" height="1" fill="#fff"/><rect x="6.5" y="70.6" width="1.300" height="1.300" fill="#3c3c3c"/><rect x="9.8" y="69.89999999999999" width="1" height="1" fill="#fff"/><rect x="10.5" y="70.6" width="1.300" height="1.300" fill="#3c3c3c"/><rect x="7.8" y="71.89999999999999" width="1" height="1" fill="#fff"/><rect x="8.5" y="72.6" width="1.300" height="1.300" fill="#3c3c3c"/><rect x="5.8" y="73.89999999999999" width="1" height="1" fill="#fff"/><rect x="6.5" y="74.6" width="1.300" height="1.300" fill="#3c3c3c"/><rect x="9.8" y="73.89999999999999" width="1" height="1" fill="#fff"/><rect x="10.5" y="74.6" width="1.300" height="1.300" fill="#3c3c3c"/><rect x="7.8" y="75.89999999999999" width="1" height="1" fill="#fff"/><rect x="8.5" y="76.6" width="1.300" height="1.300" fill="#3c3c3c"/><rect x="5.8" y="77.89999999999999" width="1" height="1" fill="#fff"/><rect x="6.5" y="78.6" width="1.300" height="1.300" fill="#3c3c3c"/><rect x="9.8" y="77.89999999999999" width="1" height="1" fill="#fff"/><rect x="10.5" y="78.6" width="1.300" height="1.300" fill="#3c3c3c"/><rect x="274.8" y="57.9" width="1" height="1" fill="#fff"/><rect x="275.5" y="58.6" width="1.300" height="1.300" fill="#3c3c3c"/><rect x="278.8" y="57.9" width="1" height="1" fill="#fff"/><rect x="279.5" y="58.6" width="1.300" height="1.300" fill="#3c3c3c"/><rect x="276.8" y="59.9" width="1" height="1" fill="#fff"/><rect x="277.5" y="60.6" width="1.300" height="1.300" fill="#3c3c3c"/><rect x="274.8" y="61.9" width="1" height="1" fill="#fff"/><rect x="275.5" y="62.6" width="1.300" height="1.300" fill="#3c3c3c"/><rect x="278.8" y="61.9" width="1" height="1" fill="#fff"/><rect x="279.5" y="62.6" width="1.300" height="1.300" fill="#3c3c3c"/><rect x="276.8" y="63.9" width="1" height="1" fill="#fff"/><rect x="277.5" y="64.6" width="1.300" height="1.300" fill="#3c3c3c"/><rect x="274.8" y="65.89999999999999" width="1" height="1" fill="#fff"/><rect x="275.5" y="66.6" width="1.300" height="1.300" fill="#3c3c3c"/><rect x="278.8" y="65.89999999999999" width="1" height="1" fill="#fff"/><rect x="279.5" y="66.6" width="1.300" height="1.300" fill="#3c3c3c"/><rect x="276.8" y="67.89999999999999" width="1" height="1" fill="#fff"/><rect x="277.5" y="68.6" width="1.300" height="1.300" fill="#3c3c3c"/><rect x="274.8" y="69.89999999999999" width="1" height="1" fill="#fff"/><rect x="275.5" y="70.6" width="1.300" height="1.300" fill="#3c3c3c"/><rect x="278.8" y="69.89999999999999" width="1" height="1" fill="#fff"/><rect x="279.5" y="70.6" width="1.300" height="1.300" fill="#3c3c3c"/><rect x="276.8" y="71.89999999999999" width="1" height="1" fill="#fff"/><rect x="277.5" y="72.6" width="1.300" height="1.300" fill="#3c3c3c"/><rect x="274.8" y="73.89999999999999" width="1" height="1" fill="#fff"/><rect x="275.5" y="74.6" width="1.300" height="1.300" fill="#3c3c3c"/><rect x="278.8" y="73.89999999999999" width="1" height="1" fill="#fff"/><rect x="279.5" y="74.6" width="1.300" height="1.300" fill="#3c3c3c"/><rect x="276.8" y="75.89999999999999" width="1" height="1" fill="#fff"/><rect x="277.5" y="76.6" width="1.300" height="1.300" fill="#3c3c3c"/><rect x="274.8" y="77.89999999999999" width="1" height="1" fill="#fff"/><rect x="275.5" y="78.6" width="1.300" height="1.300" fill="#3c3c3c"/><rect x="278.8" y="77.89999999999999" width="1" height="1" fill="#fff"/><rect x="279.5" y="78.6" width="1.300" height="1.300" fill="#3c3c3c"/><rect x="391.8" y="57.9" width="1" height="1" fill="#fff"/><rect x="392.5" y="58.6" width="1.300" height="1.300" fill="#3c3c3c"/><rect x="395.8" y="57.9" width="1" height="1" fill="#fff"/><rect x="396.5" y="58.6" width="1.300" height="1.300" fill="#3c3c3c"/><rect x="393.8" y="59.9" width="1" height="1" fill="#fff"/><rect x="394.5" y="60.6" width="1.300" height="1.300" fill="#3c3c3c"/><rect x="391.8" y="61.9" width="1" height="1" fill="#fff"/><rect x="392.5" y="62.6" width="1.300" height="1.300" fill="#3c3c3c"/><rect x="395.8" y="61.9" width="1" height="1" fill="#fff"/><rect x="396.5" y="62.6" width="1.300" height="1.300" fill="#3c3c3c"/><rect x="393.8" y="63.9" width="1" height="1" fill="#fff"/><rect x="394.5" y="64.6" width="1.300" height="1.300" fill="#3c3c3c"/><rect x="391.8" y="65.89999999999999" width="1" height="1" fill="#fff"/><rect x="392.5" y="66.6" width="1.300" height="1.300" fill="#3c3c3c"/><rect x="395.8" y="65.89999999999999" width="1" height="1" fill="#fff"/><rect x="396.5" y="66.6" width="1.300" height="1.300" fill="#3c3c3c"/><rect x="393.8" y="67.89999999999999" width="1" height="1" fill="#fff"/><rect x="394.5" y="68.6" width="1.300" height="1.300" fill="#3c3c3c"/><rect x="391.8" y="69.89999999999999" width="1" height="1" fill="#fff"/><rect x="392.5" y="70.6" width="1.300" height="1.300" fill="#3c3c3c"/><rect x="395.8" y="69.89999999999999" width="1" height="1" fill="#fff"/><rect x="396.5" y="70.6" width="1.300" height="1.300" fill="#3c3c3c"/><rect x="393.8" y="71.89999999999999" width="1" height="1" fill="#fff"/><rect x="394.5" y="72.6" width="1.300" height="1.300" fill="#3c3c3c"/><rect x="391.8" y="73.89999999999999" width="1" height="1" fill="#fff"/><rect x="392.5" y="74.6" width="1.300" height="1.300" fill="#3c3c3c"/><rect x="395.8" y="73.89999999999999" width="1" height="1" fill="#fff"/><rect x="396.5" y="74.6" width="1.300" height="1.300" fill="#3c3c3c"/><rect x="393.8" y="75.89999999999999" width="1" height="1" fill="#fff"/><rect x="394.5" y="76.6" width="1.300" height="1.300" fill="#3c3c3c"/><rect x="391.8" y="77.89999999999999" width="1" height="1" fill="#fff"/><rect x="392.5" y="78.6" width="1.300" height="1.300" fill="#3c3c3c"/><rect x="395.8" y="77.89999999999999" width="1" height="1" fill="#fff"/><rect x="396.5" y="78.6" width="1.300" height="1.300" fill="#3c3c3c"/><rect x="619.8" y="57.9" width="1" height="1" fill="#fff"/><rect x="620.5" y="58.6" width="1.300" height="1.300" fill="#3c3c3c"/><rect x="623.8" y="57.9" width="1" height="1" fill="#fff"/><rect x="624.5" y="58.6" width="1.300" height="1.300" fill="#3c3c3c"/><rect x="621.8" y="59.9" width="1" height="1" fill="#fff"/><rect x="622.5" y="60.6" width="1.300" height="1.300" fill="#3c3c3c"/><rect x="619.8" y="61.9" width="1" height="1" fill="#fff"/><rect x="620.5" y="62.6" width="1.300" height="1.300" fill="#3c3c3c"/><rect x="623.8" y="61.9" width="1" height="1" fill="#fff"/><rect x="624.5" y="62.6" width="1.300" height="1.300" fill="#3c3c3c"/><rect x="621.8" y="63.9" width="1" height="1" fill="#fff"/><rect x="622.5" y="64.6" width="1.300" height="1.300" fill="#3c3c3c"/><rect x="619.8" y="65.89999999999999" width="1" height="1" fill="#fff"/><rect x="620.5" y="66.6" width="1.300" height="1.300" fill="#3c3c3c"/><rect x="623.8" y="65.89999999999999" width="1" height="1" fill="#fff"/><rect x="624.5" y="66.6" width="1.300" height="1.300" fill="#3c3c3c"/><rect x="621.8" y="67.89999999999999" width="1" height="1" fill="#fff"/><rect x="622.5" y="68.6" width="1.300" height="1.300" fill="#3c3c3c"/><rect x="619.8" y="69.89999999999999" width="1" height="1" fill="#fff"/><rect x="620.5" y="70.6" width="1.300" height="1.300" fill="#3c3c3c"/><rect x="623.8" y="69.89999999999999" width="1" height="1" fill="#fff"/><rect x="624.5" y="70.6" width="1.300" height="1.300" fill="#3c3c3c"/><rect x="621.8" y="71.89999999999999" width="1" height="1" fill="#fff"/><rect x="622.5" y="72.6" width="1.300" height="1.300" fill="#3c3c3c"/><rect x="619.8" y="73.89999999999999" width="1" height="1" fill="#fff"/><rect x="620.5" y="74.6" width="1.300" height="1.300" fill="#3c3c3c"/><rect x="623.8" y="73.89999999999999" width="1" height="1" fill="#fff"/><rect x="624.5" y="74.6" width="1.300" height="1.300" fill="#3c3c3c"/><rect x="621.8" y="75.89999999999999" width="1" height="1" fill="#fff"/><rect x="622.5" y="76.6" width="1.300" height="1.300" fill="#3c3c3c"/><rect x="619.8" y="77.89999999999999" width="1" height="1" fill="#fff"/><rect x="620.5" y="78.6" width="1.300" height="1.300" fill="#3c3c3c"/><rect x="623.8" y="77.89999999999999" width="1" height="1" fill="#fff"/><rect x="624.5" y="78.6" width="1.300" height="1.300" fill="#3c3c3c"/><rect x="901.8" y="57.9" width="1" height="1" fill="#fff"/><rect x="902.5" y="58.6" width="1.300" height="1.300" fill="#3c3c3c"/><rect x="905.8" y="57.9" width="1" height="1" fill="#fff"/><rect x="906.5" y="58.6" width="1.300" height="1.300" fill="#3c3c3c"/><rect x="903.8" y="59.9" width="1" height="1" fill="#fff"/><rect x="904.5" y="60.6" width="1.300" height="1.300" fill="#3c3c3c"/><rect x="901.8" y="61.9" width="1" height="1" fill="#fff"/><rect x="902.5" y="62.6" width="1.300" height="1.300" fill="#3c3c3c"/><rect x="905.8" y="61.9" width="1" height="1" fill="#fff"/><rect x="906.5" y="62.6" width="1.300" height="1.300" fill="#3c3c3c"/><rect x="903.8" y="63.9" width="1" height="1" fill="#fff"/><rect x="904.5" y="64.6" width="1.300" height="1.300" fill="#3c3c3c"/><rect x="901.8" y="65.89999999999999" width="1" height="1" fill="#fff"/><rect x="902.5" y="66.6" width="1.300" height="1.300" fill="#3c3c3c"/><rect x="905.8" y="65.89999999999999" width="1" height="1" fill="#fff"/><rect x="906.5" y="66.6" width="1.300" height="1.300" fill="#3c3c3c"/><rect x="903.8" y="67.89999999999999" width="1" height="1" fill="#fff"/><rect x="904.5" y="68.6" width="1.300" height="1.300" fill="#3c3c3c"/><rect x="901.8" y="69.89999999999999" width="1" height="1" fill="#fff"/><rect x="902.5" y="70.6" width="1.300" height="1.300" fill="#3c3c3c"/><rect x="905.8" y="69.89999999999999" width="1" height="1" fill="#fff"/><rect x="906.5" y="70.6" width="1.300" height="1.300" fill="#3c3c3c"/><rect x="903.8" y="71.89999999999999" width="1" height="1" fill="#fff"/><rect x="904.5" y="72.6" width="1.300" height="1.300" fill="#3c3c3c"/><rect x="901.8" y="73.89999999999999" width="1" height="1" fill="#fff"/><rect x="902.5" y="74.6" width="1.300" height="1.300" fill="#3c3c3c"/><rect x="905.8" y="73.89999999999999" width="1" height="1" fill="#fff"/><rect x="906.5" y="74.6" width="1.300" height="1.300" fill="#3c3c3c"/><rect x="903.8" y="75.89999999999999" width="1" height="1" fill="#fff"/><rect x="904.5" y="76.6" width="1.300" height="1.300" fill="#3c3c3c"/><rect x="901.8" y="77.89999999999999" width="1" height="1" fill="#fff"/><rect x="902.5" y="78.6" width="1.300" height="1.300" fill="#3c3c3c"/><rect x="905.8" y="77.89999999999999" width="1" height="1" fill="#fff"/><rect x="906.5" y="78.6" width="1.300" height="1.300" fill="#3c3c3c"/><rect x="5.8" y="90.89999999999999" width="1" height="1" fill="#fff"/><rect x="6.5" y="91.6" width="1.300" height="1.300" fill="#3c3c3c"/><rect x="9.8" y="90.89999999999999" width="1" height="1" fill="#fff"/><rect x="10.5" y="91.6" width="1.300" height="1.300" fill="#3c3c3c"/><rect x="7.8" y="92.89999999999999" width="1" height="1" fill="#fff"/><rect x="8.5" y="93.6" width="1.300" height="1.300" fill="#3c3c3c"/><rect x="5.8" y="94.89999999999999" width="1" height="1" fill="#fff"/><rect x="6.5" y="95.6" width="1.300" height="1.300" fill="#3c3c3c"/><rect x="9.8" y="94.89999999999999" width="1" height="1" fill="#fff"/><rect x="10.5" y="95.6" width="1.300" height="1.300" fill="#3c3c3c"/><rect x="7.8" y="96.89999999999999" width="1" height="1" fill="#fff"/><rect x="8.5" y="97.6" width="1.300" height="1.300" fill="#3c3c3c"/><rect x="5.8" y="98.89999999999999" width="1" height="1" fill="#fff"/><rect x="6.5" y="99.6" width="1.300" height="1.300" fill="#3c3c3c"/><rect x="9.8" y="98.89999999999999" width="1" height="1" fill="#fff"/><rect x="10.5" y="99.6" width="1.300" height="1.300" fill="#3c3c3c"/><rect x="7.8" y="100.89999999999999" width="1" height="1" fill="#fff"/><rect x="8.5" y="101.6" width="1.300" height="1.300" fill="#3c3c3c"/><rect x="5.8" y="102.89999999999999" width="1" height="1" fill="#fff"/><rect x="6.5" y="103.6" width="1.300" height="1.300" fill="#3c3c3c"/><rect x="9.8" y="102.89999999999999" width="1" height="1" fill="#fff"/><rect x="10.5" y="103.6" width="1.300" height="1.300" fill="#3c3c3c"/><rect x="7.8" y="104.89999999999999" width="1" height="1" fill="#fff"/><rect x="8.5" y="105.6" width="1.300" height="1.300" fill="#3c3c3c"/><rect x="5.8" y="106.89999999999999" width="1" height="1" fill="#fff"/><rect x="6.5" y="107.6" width="1.300" height="1.300" fill="#3c3c3c"/><rect x="9.8" y="106.89999999999999" width="1" height="1" fill="#fff"/><rect x="10.5" y="107.6" width="1.300" height="1.300" fill="#3c3c3c"/><rect x="7.8" y="108.89999999999999" width="1" height="1" fill="#fff"/><rect x="8.5" y="109.6" width="1.300" height="1.300" fill="#3c3c3c"/><rect x="5.8" y="110.89999999999999" width="1" height="1" fill="#fff"/><rect x="6.5" y="111.6" width="1.300" height="1.300" fill="#3c3c3c"/><rect x="9.8" y="110.89999999999999" width="1" height="1" fill="#fff"/><rect x="10.5" y="111.6" width="1.300" height="1.300" fill="#3c3c3c"/><rect x="241.8" y="90.89999999999999" width="1" height="1" fill="#fff"/><rect x="242.5" y="91.6" width="1.300" height="1.300" fill="#3c3c3c"/><rect x="245.8" y="90.89999999999999" width="1" height="1" fill="#fff"/><rect x="246.5" y="91.6" width="1.300" height="1.300" fill="#3c3c3c"/><rect x="243.8" y="92.89999999999999" width="1" height="1" fill="#fff"/><rect x="244.5" y="93.6" width="1.300" height="1.300" fill="#3c3c3c"/><rect x="241.8" y="94.89999999999999" width="1" height="1" fill="#fff"/><rect x="242.5" y="95.6" width="1.300" height="1.300" fill="#3c3c3c"/><rect x="245.8" y="94.89999999999999" width="1" height="1" fill="#fff"/><rect x="246.5" y="95.6" width="1.300" height="1.300" fill="#3c3c3c"/><rect x="243.8" y="96.89999999999999" width="1" height="1" fill="#fff"/><rect x="244.5" y="97.6" width="1.300" height="1.300" fill="#3c3c3c"/><rect x="241.8" y="98.89999999999999" width="1" height="1" fill="#fff"/><rect x="242.5" y="99.6" width="1.300" height="1.300" fill="#3c3c3c"/><rect x="245.8" y="98.89999999999999" width="1" height="1" fill="#fff"/><rect x="246.5" y="99.6" width="1.300" height="1.300" fill="#3c3c3c"/><rect x="243.8" y="100.89999999999999" width="1" height="1" fill="#fff"/><rect x="244.5" y="101.6" width="1.300" height="1.300" fill="#3c3c3c"/><rect x="241.8" y="102.89999999999999" width="1" height="1" fill="#fff"/><rect x="242.5" y="103.6" width="1.300" height="1.300" fill="#3c3c3c"/><rect x="245.8" y="102.89999999999999" width="1" height="1" fill="#fff"/><rect x="246.5" y="103.6" width="1.300" height="1.300" fill="#3c3c3c"/><rect x="243.8" y="104.89999999999999" width="1" height="1" fill="#fff"/><rect x="244.5" y="105.6" width="1.300" height="1.300" fill="#3c3c3c"/><rect x="241.8" y="106.89999999999999" width="1" height="1" fill="#fff"/><rect x="242.5" y="107.6" width="1.300" height="1.300" fill="#3c3c3c"/><rect x="245.8" y="106.89999999999999" width="1" height="1" fill="#fff"/><rect x="246.5" y="107.6" width="1.300" height="1.300" fill="#3c3c3c"/><rect x="243.8" y="108.89999999999999" width="1" height="1" fill="#fff"/><rect x="244.5" y="109.6" width="1.300" height="1.300" fill="#3c3c3c"/><rect x="241.8" y="110.89999999999999" width="1" height="1" fill="#fff"/><rect x="242.5" y="111.6" width="1.300" height="1.300" fill="#3c3c3c"/><rect x="245.8" y="110.89999999999999" width="1" height="1" fill="#fff"/><rect x="246.5" y="111.6" width="1.300" height="1.300" fill="#3c3c3c"/><rect x="401.8" y="90.89999999999999" width="1" height="1" fill="#fff"/><rect x="402.5" y="91.6" width="1.300" height="1.300" fill="#3c3c3c"/><rect x="405.8" y="90.89999999999999" width="1" height="1" fill="#fff"/><rect x="406.5" y="91.6" width="1.300" height="1.300" fill="#3c3c3c"/><rect x="403.8" y="92.89999999999999" width="1" height="1" fill="#fff"/><rect x="404.5" y="93.6" width="1.300" height="1.300" fill="#3c3c3c"/><rect x="401.8" y="94.89999999999999" width="1" height="1" fill="#fff"/><rect x="402.5" y="95.6" width="1.300" height="1.300" fill="#3c3c3c"/><rect x="405.8" y="94.89999999999999" width="1" height="1" fill="#fff"/><rect x="406.5" y="95.6" width="1.300" height="1.300" fill="#3c3c3c"/><rect x="403.8" y="96.89999999999999" width="1" height="1" fill="#fff"/><rect x="404.5" y="97.6" width="1.300" height="1.300" fill="#3c3c3c"/><rect x="401.8" y="98.89999999999999" width="1" height="1" fill="#fff"/><rect x="402.5" y="99.6" width="1.300" height="1.300" fill="#3c3c3c"/><rect x="405.8" y="98.89999999999999" width="1" height="1" fill="#fff"/><rect x="406.5" y="99.6" width="1.300" height="1.300" fill="#3c3c3c"/><rect x="403.8" y="100.89999999999999" width="1" height="1" fill="#fff"/><rect x="404.5" y="101.6" width="1.300" height="1.300" fill="#3c3c3c"/><rect x="401.8" y="102.89999999999999" width="1" height="1" fill="#fff"/><rect x="402.5" y="103.6" width="1.300" height="1.300" fill="#3c3c3c"/><rect x="405.8" y="102.89999999999999" width="1" height="1" fill="#fff"/><rect x="406.5" y="103.6" width="1.300" height="1.300" fill="#3c3c3c"/><rect x="403.8" y="104.89999999999999" width="1" height="1" fill="#fff"/><rect x="404.5" y="105.6" width="1.300" height="1.300" fill="#3c3c3c"/><rect x="401.8" y="106.89999999999999" width="1" height="1" fill="#fff"/><rect x="402.5" y="107.6" width="1.300" height="1.300" fill="#3c3c3c"/><rect x="405.8" y="106.89999999999999" width="1" height="1" fill="#fff"/><rect x="406.5" y="107.6" width="1.300" height="1.300" fill="#3c3c3c"/><rect x="403.8" y="108.89999999999999" width="1" height="1" fill="#fff"/><rect x="404.5" y="109.6" width="1.300" height="1.300" fill="#3c3c3c"/><rect x="401.8" y="110.89999999999999" width="1" height="1" fill="#fff"/><rect x="402.5" y="111.6" width="1.300" height="1.300" fill="#3c3c3c"/><rect x="405.8" y="110.89999999999999" width="1" height="1" fill="#fff"/><rect x="406.5" y="111.6" width="1.300" height="1.300" fill="#3c3c3c"/><rect x="584.8" y="90.89999999999999" width="1" height="1" fill="#fff"/><rect x="585.5" y="91.6" width="1.300" height="1.300" fill="#3c3c3c"/><rect x="588.8" y="90.89999999999999" width="1" height="1" fill="#fff"/><rect x="589.5" y="91.6" width="1.300" height="1.300" fill="#3c3c3c"/><rect x="586.8" y="92.89999999999999" width="1" height="1" fill="#fff"/><rect x="587.5" y="93.6" width="1.300" height="1.300" fill="#3c3c3c"/><rect x="584.8" y="94.89999999999999" width="1" height="1" fill="#fff"/><rect x="585.5" y="95.6" width="1.300" height="1.300" fill="#3c3c3c"/><rect x="588.8" y="94.89999999999999" width="1" height="1" fill="#fff"/><rect x="589.5" y="95.6" width="1.300" height="1.300" fill="#3c3c3c"/><rect x="586.8" y="96.89999999999999" width="1" height="1" fill="#fff"/><rect x="587.5" y="97.6" width="1.300" height="1.300" fill="#3c3c3c"/><rect x="584.8" y="98.89999999999999" width="1" height="1" fill="#fff"/><rect x="585.5" y="99.6" width="1.300" height="1.300" fill="#3c3c3c"/><rect x="588.8" y="98.89999999999999" width="1" height="1" fill="#fff"/><rect x="589.5" y="99.6" width="1.300" height="1.300" fill="#3c3c3c"/><rect x="586.8" y="100.89999999999999" width="1" height="1" fill="#fff"/><rect x="587.5" y="101.6" width="1.300" height="1.300" fill="#3c3c3c"/><rect x="584.8" y="102.89999999999999" width="1" height="1" fill="#fff"/><rect x="585.5" y="103.6" width="1.300" height="1.300" fill="#3c3c3c"/><rect x="588.8" y="102.89999999999999" width="1" height="1" fill="#fff"/><rect x="589.5" y="103.6" width="1.300" height="1.300" fill="#3c3c3c"/><rect x="586.8" y="104.89999999999999" width="1" height="1" fill="#fff"/><rect x="587.5" y="105.6" width="1.300" height="1.300" fill="#3c3c3c"/><rect x="584.8" y="106.89999999999999" width="1" height="1" fill="#fff"/><rect x="585.5" y="107.6" width="1.300" height="1.300" fill="#3c3c3c"/><rect x="588.8" y="106.89999999999999" width="1" height="1" fill="#fff"/><rect x="589.5" y="107.6" width="1.300" height="1.300" fill="#3c3c3c"/><rect x="586.8" y="108.89999999999999" width="1" height="1" fill="#fff"/><rect x="587.5" y="109.6" width="1.300" height="1.300" fill="#3c3c3c"/><rect x="584.8" y="110.89999999999999" width="1" height="1" fill="#fff"/><rect x="585.5" y="111.6" width="1.300" height="1.300" fill="#3c3c3c"/><rect x="588.8" y="110.89999999999999" width="1" height="1" fill="#fff"/><rect x="589.5" y="111.6" width="1.300" height="1.300" fill="#3c3c3c"/><rect x="777.8" y="90.89999999999999" width="1" height="1" fill="#fff"/><rect x="778.5" y="91.6" width="1.300" height="1.300" fill="#3c3c3c"/><rect x="781.8" y="90.89999999999999" width="1" height="1" fill="#fff"/><rect x="782.5" y="91.6" width="1.300" height="1.300" fill="#3c3c3c"/><rect x="779.8" y="92.89999999999999" width="1" height="1" fill="#fff"/><rect x="780.5" y="93.6" width="1.300" height="1.300" fill="#3c3c3c"/><rect x="777.8" y="94.89999999999999" width="1" height="1" fill="#fff"/><rect x="778.5" y="95.6" width="1.300" height="1.300" fill="#3c3c3c"/><rect x="781.8" y="94.89999999999999" width="1" height="1" fill="#fff"/><rect x="782.5" y="95.6" width="1.300" height="1.300" fill="#3c3c3c"/><rect x="779.8" y="96.89999999999999" width="1" height="1" fill="#fff"/><rect x="780.5" y="97.6" width="1.300" height="1.300" fill="#3c3c3c"/><rect x="777.8" y="98.89999999999999" width="1" height="1" fill="#fff"/><rect x="778.5" y="99.6" width="1.300" height="1.300" fill="#3c3c3c"/><rect x="781.8" y="98.89999999999999" width="1" height="1" fill="#fff"/><rect x="782.5" y="99.6" width="1.300" height="1.300" fill="#3c3c3c"/><rect x="779.8" y="100.89999999999999" width="1" height="1" fill="#fff"/><rect x="780.5" y="101.6" width="1.300" height="1.300" fill="#3c3c3c"/><rect x="777.8" y="102.89999999999999" width="1" height="1" fill="#fff"/><rect x="778.5" y="103.6" width="1.300" height="1.300" fill="#3c3c3c"/><rect x="781.8" y="102.89999999999999" width="1" height="1" fill="#fff"/><rect x="782.5" y="103.6" width="1.300" height="1.300" fill="#3c3c3c"/><rect x="779.8" y="104.89999999999999" width="1" height="1" fill="#fff"/><rect x="780.5" y="105.6" width="1.300" height="1.300" fill="#3c3c3c"/><rect x="777.8" y="106.89999999999999" width="1" height="1" fill="#fff"/><rect x="778.5" y="107.6" width="1.300" height="1.300" fill="#3c3c3c"/><rect x="781.8" y="106.89999999999999" width="1" height="1" fill="#fff"/><rect x="782.5" y="107.6" width="1.300" height="1.300" fill="#3c3c3c"/><rect x="779.8" y="108.89999999999999" width="1" height="1" fill="#fff"/><rect x="780.5" y="109.6" width="1.300" height="1.300" fill="#3c3c3c"/><rect x="777.8" y="110.89999999999999" width="1" height="1" fill="#fff"/><rect x="778.5" y="111.6" width="1.300" height="1.300" fill="#3c3c3c"/><rect x="781.8" y="110.89999999999999" width="1" height="1" fill="#fff"/><rect x="782.5" y="111.6" width="1.300" height="1.300" fill="#3c3c3c"/><rect x="1056.8" y="90.89999999999999" width="1" height="1" fill="#fff"/><rect x="1057.5" y="91.6" width="1.300" height="1.300" fill="#3c3c3c"/><rect x="1060.8" y="90.89999999999999" width="1" height="1" fill="#fff"/><rect x="1061.5" y="91.6" width="1.300" height="1.300" fill="#3c3c3c"/><rect x="1058.8" y="92.89999999999999" width="1" height="1" fill="#fff"/><rect x="1059.5" y="93.6" width="1.300" height="1.300" fill="#3c3c3c"/><rect x="1056.8" y="94.89999999999999" width="1" height="1" fill="#fff"/><rect x="1057.5" y="95.6" width="1.300" height="1.300" fill="#3c3c3c"/><rect x="1060.8" y="94.89999999999999" width="1" height="1" fill="#fff"/><rect x="1061.5" y="95.6" width="1.300" height="1.300" fill="#3c3c3c"/><rect x="1058.8" y="96.89999999999999" width="1" height="1" fill="#fff"/><rect x="1059.5" y="97.6" width="1.300" height="1.300" fill="#3c3c3c"/><rect x="1056.8" y="98.89999999999999" width="1" height="1" fill="#fff"/><rect x="1057.5" y="99.6" width="1.300" height="1.300" fill="#3c3c3c"/><rect x="1060.8" y="98.89999999999999" width="1" height="1" fill="#fff"/><rect x="1061.5" y="99.6" width="1.300" height="1.300" fill="#3c3c3c"/><rect x="1058.8" y="100.89999999999999" width="1" height="1" fill="#fff"/><rect x="1059.5" y="101.6" width="1.300" height="1.300" fill="#3c3c3c"/><rect x="1056.8" y="102.89999999999999" width="1" height="1" fill="#fff"/><rect x="1057.5" y="103.6" width="1.300" height="1.300" fill="#3c3c3c"/><rect x="1060.8" y="102.89999999999999" width="1" height="1" fill="#fff"/><rect x="1061.5" y="103.6" width="1.300" height="1.300" fill="#3c3c3c"/><rect x="1058.8" y="104.89999999999999" width="1" height="1" fill="#fff"/><rect x="1059.5" y="105.6" width="1.300" height="1.300" fill="#3c3c3c"/><rect x="1056.8" y="106.89999999999999" width="1" height="1" fill="#fff"/><rect x="1057.5" y="107.6" width="1.300" height="1.300" fill="#3c3c3c"/><rect x="1060.8" y="106.89999999999999" width="1" height="1" fill="#fff"/><rect x="1061.5" y="107.6" width="1.300" height="1.300" fill="#3c3c3c"/><rect x="1058.8" y="108.89999999999999" width="1" height="1" fill="#fff"/><rect x="1059.5" y="109.6" width="1.300" height="1.300" fill="#3c3c3c"/><rect x="1056.8" y="110.89999999999999" width="1" height="1" fill="#fff"/><rect x="1057.5" y="111.6" width="1.300" height="1.300" fill="#3c3c3c"/><rect x="1060.8" y="110.89999999999999" width="1" height="1" fill="#fff"/><rect x="1061.5" y="111.6" width="1.300" height="1.300" fill="#3c3c3c"/><rect x="89" y="57" width="1" height="25" fill="#6e6e6e"/><rect x="165" y="57" width="1" height="25" fill="#6e6e6e"/><rect x="985" y="57" width="1" height="25" fill="#6e6e6e"/><rect x="1094" y="57" width="1" height="25" fill="#6e6e6e"/><rect x="1203" y="57" width="1" height="25" fill="#6e6e6e"/><rect x="155" y="90" width="1" height="25" fill="#6e6e6e"/><rect x="198" y="90" width="1" height="25" fill="#6e6e6e"/><rect x="358" y="90" width="1" height="25" fill="#6e6e6e"/><rect x="668" y="90" width="1" height="25" fill="#6e6e6e"/><rect x="861" y="90" width="1" height="25" fill="#6e6e6e"/><rect x="904" y="90" width="1" height="25" fill="#6e6e6e"/><rect x="980" y="90" width="1" height="25" fill="#6e6e6e"/><rect x="1206" y="90" width="1" height="25" fill="#6e6e6e"/><rect x="1249" y="90" width="1" height="25" fill="#6e6e6e"/><rect x="1325" y="90" width="1" height="25" fill="#6e6e6e"/><rect x="1368" y="90" width="1" height="25" fill="#6e6e6e"/></svg>
<div style="left:406px;top:58px;width:206px;height:22px;background:linear-gradient(#f6f6f6,#d6d6d6);border:1px solid #8c8c8c;border-radius:2px;"></div>
<div style="left:414px;top:63px;width:12px;height:12px;background:#c8c8c8;border:1px solid #333;"></div>
<span style="left:434.00px;top:61.53px;font:400 13px/normal 'Liberation Sans',sans-serif;color:#111;letter-spacing:-0.168px;white-space:pre;">Gray</span>
<div style="left:595px;top:60px;width:1px;height:18px;background:#a8a8a8;"></div>
<svg style="left:598px;top:66px;" width="10" height="7" viewBox="0 0 10 7"><path d="M0.300 0.800 H8.700 L4.500 6 Z" fill="#111"/></svg>
<div style="left:0px;top:119px;width:27px;height:928px;background:#6e6e6e;"></div>
<div style="left:0px;top:455px;width:26px;height:119px;background:#4b4b4b;border:1px solid #5e5e5e;border-right:none;"></div>
<span style="left:6.74px;top:546.70px;font:400 12px/normal 'Liberation Sans',sans-serif;color:#dedede;letter-spacing:0.220px;white-space:pre;transform:rotate(-90deg);transform-origin:0 0;">Object Explorer</span>
<svg style="left:5px;top:553px;" width="15" height="15" viewBox="0 0 15 15"><path d="M7.5 0.5 L14.3 3.8 V11 L7.5 14.5 L0.7 11 V3.8 Z" fill="#6ad022" stroke="#243a10" stroke-width="0.9"/><path d="M0.7 3.8 L7.5 7 L14.3 3.8 M7.5 7 V14.5" fill="none" stroke="#243a10" stroke-width="0.9"/><path d="M7.5 0.9 L13.8 3.8 L7.5 6.7 L1.2 3.8Z" fill="#8de04a"/></svg>
<div style="left:0px;top:577px;width:26px;height:102px;background:#4b4b4b;border:1px solid #5e5e5e;border-right:none;"></div>
<span style="left:6.74px;top:651.00px;font:400 12px/normal 'Liberation Sans',sans-serif;color:#dedede;letter-spacing:0.142px;white-space:pre;transform:rotate(-90deg);transform-origin:0 0;">Script Editor</span>
<svg style="left:5px;top:657px;" width="15" height="15" viewBox="0 0 15 15"><path d="M0.5 0.5 H9 L14.5 6 V14.5 H0.5 Z" fill="#00c8a0" stroke="#0a3d33" stroke-width="0.9"/><path d="M9 0.5 V6 H14.5" fill="#7fe8d2" stroke="#0a3d33" stroke-width="0.9"/></svg>
<div style="left:0px;top:681px;width:26px;height:112px;background:#4b4b4b;border:1px solid #5e5e5e;border-right:none;"></div>
<span style="left:6.74px;top:765.50px;font:400 12px/normal 'Liberation Sans',sans-serif;color:#dedede;letter-spacing:0.299px;white-space:pre;transform:rotate(-90deg);transform-origin:0 0;">View Explorer</span>
<svg style="left:5px;top:771px;" width="15" height="15" viewBox="0 0 15 15"><rect x="0.5" y="0.5" width="14" height="14" fill="#4aa0ff" stroke="#1b2f55" stroke-width="0.9"/></svg>
<div style="left:0px;top:795px;width:26px;height:125px;background:#4b4b4b;border:1px solid #5e5e5e;border-right:none;"></div>
<span style="left:6.74px;top:891.00px;font:400 12px/normal 'Liberation Sans',sans-serif;color:#dedede;letter-spacing:0.239px;white-space:pre;transform:rotate(-90deg);transform-origin:0 0;">Format Explorer</span>
<svg style="left:5px;top:898px;" width="15" height="15" viewBox="0 0 15 15"><circle cx="7.5" cy="7.5" r="6.8" fill="#d55ad8" stroke="#40164a" stroke-width="0.9"/></svg>
<div style="left:0px;top:923px;width:26px;height:123px;background:#4b4b4b;border:1px solid #5e5e5e;border-right:none;"></div>
<span style="left:6.74px;top:1018.70px;font:400 12px/normal 'Liberation Sans',sans-serif;color:#dedede;letter-spacing:0.272px;white-space:pre;transform:rotate(-90deg);transform-origin:0 0;">History Explorer</span>
<svg style="left:4px;top:1025px;" width="17" height="16" viewBox="0 0 17 16"><path d="M8.5 0.5 L16.3 10.5 L8.5 15.5 L0.7 10.5 Z" fill="#ff8a2a" stroke="#4a2408" stroke-width="0.9"/><path d="M8.5 0.5 V15.5" stroke="#4a2408" stroke-width="0.9"/><path d="M8.5 1.5 L1.5 10.4 L8.5 14.7Z" fill="#ffa552"/></svg>
<div style="left:1895px;top:119px;width:25px;height:928px;background:#737373;"></div>
<div style="left:1895px;top:119px;width:25px;height:128px;background:#4b4b4b;border:1px solid #5e5e5e;border-right:none;"></div>
<span style="left:1901.74px;top:219.70px;font:400 12px/normal 'Liberation Sans',sans-serif;color:#dedede;letter-spacing:0.127px;white-space:pre;transform:rotate(-90deg);transform-origin:0 0;">Process Explorer</span>
<svg style="left:1898px;top:225px;" width="17" height="18" viewBox="0 0 17 18"><g transform="translate(8.5,9)"><circle r="4.6" fill="none" stroke="#f4f4f4" stroke-width="2.2"/><rect x="-1.3" y="-8.4" width="2.6" height="3.4" fill="#f4f4f4" transform="rotate(0)"/><rect x="-1.3" y="-8.4" width="2.6" height="3.4" fill="#f4f4f4" transform="rotate(45)"/><rect x="-1.3" y="-8.4" width="2.6" height="3.4" fill="#f4f4f4" transform="rotate(90)"/><rect x="-1.3" y="-8.4" width="2.6" height="3.4" fill="#f4f4f4" transform="rotate(135)"/><rect x="-1.3" y="-8.4" width="2.6" height="3.4" fill="#f4f4f4" transform="rotate(180)"/><rect x="-1.3" y="-8.4" width="2.6" height="3.4" fill="#f4f4f4" transform="rotate(225)"/><rect x="-1.3" y="-8.4" width="2.6" height="3.4" fill="#f4f4f4" transform="rotate(270)"/><rect x="-1.3" y="-8.4" width="2.6" height="3.4" fill="#f4f4f4" transform="rotate(315)"/></g></svg>
<div style="left:1895px;top:816px;width:25px;height:125px;background:#4b4b4b;border:1px solid #5e5e5e;border-right:none;"></div>
<span style="left:1901.74px;top:913.00px;font:400 12px/normal 'Liberation Sans',sans-serif;color:#dedede;letter-spacing:0.059px;white-space:pre;transform:rotate(-90deg);transform-origin:0 0;">Process Console</span>
<svg style="left:1898px;top:919px;" width="17" height="16" viewBox="0 0 17 16"><path d="M0.8 0.8 L16 6.5 L3.5 15 Z" fill="#f0603c" stroke="#4a1408" stroke-width="0.9"/><path d="M0.8 0.8 L7 8 L16 6.5 M7 8 L3.5 15" fill="none" stroke="#4a1408" stroke-width="0.8"/></svg>
<div style="left:1895px;top:943px;width:25px;height:104px;background:#4b4b4b;border:1px solid #5e5e5e;border-right:none;"></div>
<span style="left:1901.74px;top:1019.60px;font:400 12px/normal 'Liberation Sans',sans-serif;color:#dedede;letter-spacing:0.173px;white-space:pre;transform:rotate(-90deg);transform-origin:0 0;">File Explorer</span>
<svg style="left:1899px;top:1024px;" width="15" height="17" viewBox="0 0 15 17"><path d="M0.6 3.2 V13.8 A6.9 2.6 0 0 0 14.4 13.8 V3.2" fill="#d8c3a0" stroke="#4a3f2a" stroke-width="0.9"/><ellipse cx="7.5" cy="3.2" rx="6.9" ry="2.6" fill="#eadcc0" stroke="#4a3f2a" stroke-width="0.9"/></svg>
<div style="left:1726px;top:119px;width:1px;height:928px;background:#c89868;"></div>
<div style="left:27px;top:119px;width:1092px;height:744px;background:#707070;border-right:2px solid #767676;border-bottom:2px solid #767676;"></div>
<div style="left:26px;top:119px;width:1px;height:744px;background:#5a5a5a;"></div>
<div style="left:27px;top:119px;width:1092px;height:1px;background:#5c5c5c;"></div>
<span style="left:374.60px;top:124.94px;font:700 12px/normal 'Liberation Sans',sans-serif;color:#d6d6d6;letter-spacing:1.167px;white-space:pre;">Gray 1:6 Syn_Lum_Master | Syn_Lum_Master.xisf</span>
<svg style="left:33px;top:125px;" width="14" height="13" viewBox="0 0 14 13"><rect x="0.5" y="0.5" width="13" height="12" fill="#b8bcff"/><rect x="2.5" y="4" width="9" height="7" fill="#707070" stroke="#5a5a80" stroke-width="1"/></svg>
<svg style="left:1036px;top:127px;" width="78" height="14" viewBox="0 0 78 14"><rect x="2.8" y="5" width="9.4" height="3" fill="#e8e8e8"/><rect x="23.8" y="2.8" width="9.4" height="2" fill="#e8e8e8"/><path d="M28.5 6 L33.3 10.2 H23.7 Z" fill="#e8e8e8"/><path d="M49.5 2 V11.2 M44.9 6.6 H54.1" stroke="#e8e8e8" stroke-width="2.6"/><path d="M66.3 2.2 L74.7 10.8 M74.7 2.2 L66.3 10.8" stroke="#e8e8e8" stroke-width="2.2"/></svg>
<svg style="left:27px;top:145px;" width="24" height="210" viewBox="0 0 24 210"><path d="M23.5 2.2 L2.7 21.5 V121.3 H23.5 Z" fill="#774a35" stroke="#4a3024" stroke-width="0.8"/><path d="M23.5 122.3 L2.7 138.6 V202.3 H23.5 Z" fill="#c9b484" stroke="#5a5038" stroke-width="0.8"/></svg>
<span style="left:33.79px;top:261.30px;font:400 11.5px/normal 'Liberation Sans',sans-serif;color:#e6dcd6;letter-spacing:0.262px;white-space:pre;transform:rotate(-90deg);transform-origin:0 0;">Syn_Lum_Master</span>
<span style="left:33.79px;top:341.80px;font:400 11.5px/normal 'Liberation Sans',sans-serif;color:#111;letter-spacing:0.434px;white-space:pre;transform:rotate(-90deg);transform-origin:0 0;">Preview01</span>
<svg style="left:35px;top:790px;" width="11" height="66" viewBox="0 0 11 66"><g fill="none" stroke="#cfcfcf" stroke-width="1"><path d="M0.5 1 L10 10.5 M3.5 10.5 H10 V4 Z"/><path d="M2.5 21.5 H8.500 V27.5 H2.5 Z M0 19 L2.5 21.5 M11 19 L8.5 21.5 M0 30 L2.5 27.5 M11 30 L8.5 27.5"/><path d="M0.5 37.5 H7.5 V43.500 H0.5 Z M3.500 43.5 V46.5 H10.5 V40.5 H7.5"/><circle cx="5.5" cy="60.500" r="5"/><circle cx="5.5" cy="60.5" r="2"/></g></svg>
<svg style="left:51px;top:145px;overflow:hidden" width="1066" height="716" viewBox="0 0 1066 716"><defs>
<radialGradient id="sg"><stop offset="0" stop-color="#fff" stop-opacity="1"/><stop offset="0.35" stop-color="#fff" stop-opacity="0.75"/><stop offset="0.7" stop-color="#fff" stop-opacity="0.2"/><stop offset="1" stop-color="#fff" stop-opacity="0"/></radialGradient>
<radialGradient id="g81"><stop offset="0" stop-color="#fff" stop-opacity="0.42"/><stop offset="0.05" stop-color="#fff" stop-opacity="0.38"/><stop offset="0.11" stop-color="#fff" stop-opacity="0.32"/><stop offset="0.2" stop-color="#fff" stop-opacity="0.27"/><stop offset="0.32" stop-color="#fff" stop-opacity="0.21"/><stop offset="0.45" stop-color="#fff" stop-opacity="0.16"/><stop offset="0.58" stop-color="#fff" stop-opacity="0.12"/><stop offset="0.7" stop-color="#fff" stop-opacity="0.085"/><stop offset="0.82" stop-color="#fff" stop-opacity="0.05"/><stop offset="0.92" stop-color="#fff" stop-opacity="0.02"/><stop offset="1" stop-color="#fff" stop-opacity="0"/></radialGradient>
<radialGradient id="g81b"><stop offset="0" stop-color="#fff" stop-opacity="0.85"/><stop offset="0.08" stop-color="#fff" stop-opacity="0.62"/><stop offset="0.2" stop-color="#fff" stop-opacity="0.42"/><stop offset="0.4" stop-color="#fff" stop-opacity="0.24"/><stop offset="0.7" stop-color="#fff" stop-opacity="0.08"/><stop offset="1" stop-color="#fff" stop-opacity="0"/></radialGradient>
<radialGradient id="g82"><stop offset="0" stop-color="#fff" stop-opacity="0.38"/><stop offset="0.3" stop-color="#fff" stop-opacity="0.27"/><stop offset="0.55" stop-color="#fff" stop-opacity="0.14"/><stop offset="0.8" stop-color="#fff" stop-opacity="0.04"/><stop offset="1" stop-color="#fff" stop-opacity="0"/></radialGradient>
<radialGradient id="g82b"><stop offset="0" stop-color="#fff" stop-opacity="0.62"/><stop offset="0.25" stop-color="#fff" stop-opacity="0.5"/><stop offset="0.55" stop-color="#fff" stop-opacity="0.28"/><stop offset="0.8" stop-color="#fff" stop-opacity="0.1"/><stop offset="1" stop-color="#fff" stop-opacity="0"/></radialGradient>
<radialGradient id="g3"><stop offset="0" stop-color="#fff" stop-opacity="0.75"/><stop offset="0.06" stop-color="#fff" stop-opacity="0.55"/><stop offset="0.18" stop-color="#fff" stop-opacity="0.32"/><stop offset="0.4" stop-color="#fff" stop-opacity="0.16"/><stop offset="0.7" stop-color="#fff" stop-opacity="0.05"/><stop offset="1" stop-color="#fff" stop-opacity="0"/></radialGradient>
<filter id="nz" x="0" y="0" width="100%" height="100%" color-interpolation-filters="sRGB"><feTurbulence type="fractalNoise" baseFrequency="0.95" numOctaves="2" seed="3" result="t"/><feColorMatrix type="matrix" values="0.2 0 0 0 0.028  0.2 0 0 0 0.028  0.2 0 0 0 0.028  0 0 0 0 1"/></filter>
<filter id="b3" x="-30%" y="-30%" width="160%" height="160%"><feGaussianBlur stdDeviation="3"/></filter>
<filter id="b1" x="-5%" y="-5%" width="110%" height="110%"><feGaussianBlur stdDeviation="0.45"/></filter>
</defs>
<rect width="1066" height="716" fill="#232323"/>
<rect width="1066" height="716" filter="url(#nz)"/>
<g transform="translate(503.29999999999995,470) rotate(24)"><ellipse rx="57" ry="106" fill="url(#g81)"/><ellipse rx="34" ry="64" fill="none" stroke="#fff" stroke-opacity="0.05" stroke-width="9" filter="url(#b3)"/><ellipse rx="27" ry="42" fill="url(#g81b)"/></g>
<g transform="translate(484.79999999999995,83) rotate(27)"><ellipse rx="58" ry="21" fill="url(#g82)"/><ellipse rx="42" ry="9" fill="url(#g82b)"/></g>
<g transform="translate(61.099999999999994,670.4) rotate(35)"><ellipse rx="37" ry="28" fill="url(#g3)"/></g>
<g filter="url(#b1)"><circle cx="16.0" cy="32.9" r="2.17" fill="url(#sg)" opacity="0.54"/><circle cx="59.6" cy="22.9" r="2.17" fill="url(#sg)" opacity="0.54"/><circle cx="48.4" cy="36.7" r="2.17" fill="url(#sg)" opacity="0.54"/><circle cx="149.3" cy="30.7" r="2.53" fill="url(#sg)" opacity="0.77"/><circle cx="191.8" cy="29.1" r="2.53" fill="url(#sg)" opacity="0.77"/><circle cx="162.2" cy="60.4" r="2.53" fill="url(#sg)" opacity="0.77"/><circle cx="236.2" cy="59.6" r="2.89" fill="url(#sg)" opacity="1.00"/><circle cx="239.6" cy="59.8" r="2.53" fill="url(#sg)" opacity="0.77"/><circle cx="192.2" cy="73.1" r="2.53" fill="url(#sg)" opacity="0.77"/><circle cx="297.8" cy="47.3" r="2.17" fill="url(#sg)" opacity="0.54"/><circle cx="301.1" cy="47.1" r="2.17" fill="url(#sg)" opacity="0.54"/><circle cx="321.8" cy="81.1" r="2.53" fill="url(#sg)" opacity="0.77"/><circle cx="302.7" cy="102.9" r="3.25" fill="url(#sg)" opacity="1.00"/><circle cx="302.7" cy="102.9" r="0.39" fill="#fff" opacity="0.7"/><circle cx="24.9" cy="109.8" r="2.53" fill="url(#sg)" opacity="0.77"/><circle cx="83.1" cy="118.4" r="2.17" fill="url(#sg)" opacity="0.54"/><circle cx="159.6" cy="101.3" r="2.17" fill="url(#sg)" opacity="0.54"/><circle cx="152.9" cy="119.8" r="2.17" fill="url(#sg)" opacity="0.54"/><circle cx="124.4" cy="80.7" r="2.17" fill="url(#sg)" opacity="0.54"/><circle cx="66.0" cy="144.0" r="2.17" fill="url(#sg)" opacity="0.54"/><circle cx="279.3" cy="139.8" r="2.17" fill="url(#sg)" opacity="0.54"/><circle cx="285.1" cy="139.6" r="2.17" fill="url(#sg)" opacity="0.54"/><circle cx="231.1" cy="154.9" r="2.17" fill="url(#sg)" opacity="0.54"/><circle cx="244.4" cy="164.2" r="2.53" fill="url(#sg)" opacity="0.77"/><circle cx="349.6" cy="159.8" r="2.53" fill="url(#sg)" opacity="0.77"/><circle cx="180.0" cy="172.9" r="2.53" fill="url(#sg)" opacity="0.77"/><circle cx="180.9" cy="168.9" r="2.17" fill="url(#sg)" opacity="0.54"/><circle cx="222.9" cy="182.2" r="2.31" fill="url(#sg)" opacity="0.63"/><circle cx="242.9" cy="198.0" r="3.25" fill="url(#sg)" opacity="1.00"/><circle cx="242.9" cy="198.0" r="0.39" fill="#fff" opacity="0.7"/><circle cx="284.2" cy="195.6" r="2.53" fill="url(#sg)" opacity="0.77"/><circle cx="125.6" cy="217.1" r="2.89" fill="url(#sg)" opacity="1.00"/><circle cx="251.8" cy="222.9" r="2.53" fill="url(#sg)" opacity="0.77"/><circle cx="248.2" cy="228.2" r="2.17" fill="url(#sg)" opacity="0.54"/><circle cx="254.4" cy="228.9" r="2.17" fill="url(#sg)" opacity="0.54"/><circle cx="160.4" cy="187.3" r="2.17" fill="url(#sg)" opacity="0.54"/><circle cx="146.0" cy="181.8" r="2.03" fill="url(#sg)" opacity="0.45"/><circle cx="129.6" cy="192.4" r="2.03" fill="url(#sg)" opacity="0.45"/><circle cx="96.2" cy="31.8" r="1.95" fill="url(#sg)" opacity="0.40"/><circle cx="91.8" cy="19.3" r="1.95" fill="url(#sg)" opacity="0.40"/><circle cx="78.2" cy="22.4" r="1.88" fill="url(#sg)" opacity="0.36"/><circle cx="176.7" cy="49.3" r="2.03" fill="url(#sg)" opacity="0.45"/><circle cx="198.4" cy="51.3" r="1.95" fill="url(#sg)" opacity="0.40"/><circle cx="213.3" cy="41.1" r="1.95" fill="url(#sg)" opacity="0.40"/><circle cx="254.4" cy="40.0" r="1.95" fill="url(#sg)" opacity="0.40"/><circle cx="259.3" cy="61.8" r="1.95" fill="url(#sg)" opacity="0.40"/><circle cx="302.2" cy="29.3" r="1.95" fill="url(#sg)" opacity="0.40"/><circle cx="308.0" cy="17.1" r="1.95" fill="url(#sg)" opacity="0.40"/><circle cx="313.1" cy="10.7" r="1.95" fill="url(#sg)" opacity="0.40"/><circle cx="298.2" cy="60.2" r="1.95" fill="url(#sg)" opacity="0.40"/><circle cx="351.6" cy="78.2" r="2.03" fill="url(#sg)" opacity="0.45"/><circle cx="340.0" cy="96.0" r="2.03" fill="url(#sg)" opacity="0.45"/><circle cx="264.9" cy="97.3" r="2.03" fill="url(#sg)" opacity="0.45"/><circle cx="264.9" cy="108.2" r="1.88" fill="url(#sg)" opacity="0.36"/><circle cx="196.0" cy="89.8" r="2.03" fill="url(#sg)" opacity="0.45"/><circle cx="144.0" cy="82.7" r="2.03" fill="url(#sg)" opacity="0.45"/><circle cx="144.9" cy="94.4" r="1.88" fill="url(#sg)" opacity="0.36"/><circle cx="115.6" cy="111.1" r="1.88" fill="url(#sg)" opacity="0.36"/><circle cx="137.8" cy="125.1" r="1.88" fill="url(#sg)" opacity="0.36"/><circle cx="7.8" cy="122.9" r="1.95" fill="url(#sg)" opacity="0.40"/><circle cx="20.0" cy="167.3" r="1.95" fill="url(#sg)" opacity="0.40"/><circle cx="31.1" cy="177.3" r="1.88" fill="url(#sg)" opacity="0.36"/><circle cx="22.9" cy="192.9" r="1.88" fill="url(#sg)" opacity="0.36"/><circle cx="116.2" cy="170.7" r="1.88" fill="url(#sg)" opacity="0.36"/><circle cx="137.1" cy="194.0" r="1.95" fill="url(#sg)" opacity="0.40"/><circle cx="160.0" cy="180.4" r="1.88" fill="url(#sg)" opacity="0.36"/><circle cx="248.9" cy="170.7" r="1.95" fill="url(#sg)" opacity="0.40"/><circle cx="322.2" cy="185.6" r="1.95" fill="url(#sg)" opacity="0.40"/><circle cx="326.7" cy="162.2" r="1.88" fill="url(#sg)" opacity="0.36"/><circle cx="341.1" cy="206.7" r="1.88" fill="url(#sg)" opacity="0.36"/><circle cx="269.6" cy="204.4" r="1.88" fill="url(#sg)" opacity="0.36"/><circle cx="167.8" cy="227.8" r="1.88" fill="url(#sg)" opacity="0.36"/><circle cx="307.8" cy="229.3" r="1.88" fill="url(#sg)" opacity="0.36"/><circle cx="71.8" cy="48.7" r="1.88" fill="url(#sg)" opacity="0.36"/><circle cx="35.6" cy="61.1" r="1.81" fill="url(#sg)" opacity="0.31"/><circle cx="85.6" cy="72.2" r="1.81" fill="url(#sg)" opacity="0.31"/><circle cx="74.9" cy="87.3" r="1.81" fill="url(#sg)" opacity="0.31"/><circle cx="84.4" cy="90.0" r="1.81" fill="url(#sg)" opacity="0.31"/><circle cx="407.1" cy="7.8" r="3.25" fill="url(#sg)" opacity="1.00"/><circle cx="407.1" cy="7.8" r="0.39" fill="#fff" opacity="0.7"/><circle cx="570.4" cy="28.7" r="3.25" fill="url(#sg)" opacity="1.00"/><circle cx="570.4" cy="28.7" r="0.39" fill="#fff" opacity="0.7"/><circle cx="614.7" cy="44.9" r="2.89" fill="url(#sg)" opacity="1.00"/><circle cx="618.9" cy="41.6" r="2.53" fill="url(#sg)" opacity="0.77"/><circle cx="383.3" cy="51.3" r="2.53" fill="url(#sg)" opacity="0.77"/><circle cx="400.4" cy="51.6" r="2.53" fill="url(#sg)" opacity="0.77"/><circle cx="502.2" cy="104.0" r="3.25" fill="url(#sg)" opacity="1.00"/><circle cx="502.2" cy="104.0" r="0.39" fill="#fff" opacity="0.7"/><circle cx="449.6" cy="100.2" r="2.53" fill="url(#sg)" opacity="0.77"/><circle cx="657.1" cy="97.3" r="3.25" fill="url(#sg)" opacity="1.00"/><circle cx="657.1" cy="97.3" r="0.39" fill="#fff" opacity="0.7"/><circle cx="575.6" cy="115.8" r="2.89" fill="url(#sg)" opacity="1.00"/><circle cx="520.7" cy="132.4" r="2.89" fill="url(#sg)" opacity="1.00"/><circle cx="442.7" cy="129.8" r="2.53" fill="url(#sg)" opacity="0.77"/><circle cx="643.3" cy="124.9" r="2.53" fill="url(#sg)" opacity="0.77"/><circle cx="542.9" cy="156.7" r="2.53" fill="url(#sg)" opacity="0.77"/><circle cx="396.7" cy="173.6" r="2.53" fill="url(#sg)" opacity="0.77"/><circle cx="564.7" cy="228.7" r="3.25" fill="url(#sg)" opacity="1.00"/><circle cx="564.7" cy="228.7" r="0.39" fill="#fff" opacity="0.7"/><circle cx="585.1" cy="79.1" r="2.17" fill="url(#sg)" opacity="0.54"/><circle cx="653.6" cy="76.9" r="2.17" fill="url(#sg)" opacity="0.54"/><circle cx="539.6" cy="125.1" r="2.17" fill="url(#sg)" opacity="0.54"/><circle cx="444.9" cy="78.9" r="2.17" fill="url(#sg)" opacity="0.54"/><circle cx="452.7" cy="178.4" r="2.17" fill="url(#sg)" opacity="0.54"/><circle cx="495.8" cy="203.8" r="2.17" fill="url(#sg)" opacity="0.54"/><circle cx="415.3" cy="218.2" r="2.17" fill="url(#sg)" opacity="0.54"/><circle cx="709.3" cy="218.0" r="2.31" fill="url(#sg)" opacity="0.63"/><circle cx="624.0" cy="220.0" r="2.17" fill="url(#sg)" opacity="0.54"/><circle cx="528.2" cy="223.3" r="2.17" fill="url(#sg)" opacity="0.54"/><circle cx="668.9" cy="189.1" r="2.17" fill="url(#sg)" opacity="0.54"/><circle cx="513.3" cy="113.8" r="2.17" fill="url(#sg)" opacity="0.54"/><circle cx="540.0" cy="98.0" r="2.03" fill="url(#sg)" opacity="0.45"/><circle cx="456.2" cy="210.0" r="2.03" fill="url(#sg)" opacity="0.45"/><circle cx="456.2" cy="10.4" r="1.95" fill="url(#sg)" opacity="0.40"/><circle cx="557.1" cy="2.7" r="1.95" fill="url(#sg)" opacity="0.40"/><circle cx="647.3" cy="4.9" r="1.88" fill="url(#sg)" opacity="0.36"/><circle cx="691.1" cy="24.0" r="1.95" fill="url(#sg)" opacity="0.40"/><circle cx="713.3" cy="26.7" r="1.88" fill="url(#sg)" opacity="0.36"/><circle cx="602.9" cy="52.4" r="1.95" fill="url(#sg)" opacity="0.40"/><circle cx="672.9" cy="51.6" r="1.95" fill="url(#sg)" opacity="0.40"/><circle cx="619.6" cy="69.3" r="1.88" fill="url(#sg)" opacity="0.36"/><circle cx="637.8" cy="94.0" r="1.88" fill="url(#sg)" opacity="0.36"/><circle cx="644.9" cy="83.3" r="1.88" fill="url(#sg)" opacity="0.36"/><circle cx="697.8" cy="81.8" r="1.95" fill="url(#sg)" opacity="0.40"/><circle cx="674.4" cy="128.2" r="1.88" fill="url(#sg)" opacity="0.36"/><circle cx="696.0" cy="129.6" r="1.88" fill="url(#sg)" opacity="0.36"/><circle cx="704.4" cy="132.7" r="1.88" fill="url(#sg)" opacity="0.36"/><circle cx="617.1" cy="141.6" r="1.88" fill="url(#sg)" opacity="0.36"/><circle cx="598.9" cy="156.2" r="1.88" fill="url(#sg)" opacity="0.36"/><circle cx="550.0" cy="139.6" r="1.88" fill="url(#sg)" opacity="0.36"/><circle cx="517.8" cy="150.7" r="1.95" fill="url(#sg)" opacity="0.40"/><circle cx="464.0" cy="142.2" r="1.88" fill="url(#sg)" opacity="0.36"/><circle cx="390.4" cy="118.2" r="1.88" fill="url(#sg)" opacity="0.36"/><circle cx="392.7" cy="78.2" r="1.88" fill="url(#sg)" opacity="0.36"/><circle cx="379.6" cy="74.4" r="1.81" fill="url(#sg)" opacity="0.31"/><circle cx="388.9" cy="163.3" r="1.88" fill="url(#sg)" opacity="0.36"/><circle cx="557.1" cy="184.4" r="1.88" fill="url(#sg)" opacity="0.36"/><circle cx="656.7" cy="176.2" r="1.88" fill="url(#sg)" opacity="0.36"/><circle cx="690.0" cy="196.7" r="1.88" fill="url(#sg)" opacity="0.36"/><circle cx="657.1" cy="202.2" r="1.95" fill="url(#sg)" opacity="0.40"/><circle cx="678.9" cy="201.8" r="1.88" fill="url(#sg)" opacity="0.36"/><circle cx="700.4" cy="210.4" r="1.95" fill="url(#sg)" opacity="0.40"/><circle cx="519.6" cy="215.1" r="1.95" fill="url(#sg)" opacity="0.40"/><circle cx="404.4" cy="231.6" r="1.95" fill="url(#sg)" opacity="0.40"/><circle cx="671.1" cy="236.0" r="2.03" fill="url(#sg)" opacity="0.45"/><circle cx="676.7" cy="235.6" r="1.95" fill="url(#sg)" opacity="0.40"/><circle cx="595.6" cy="204.4" r="1.81" fill="url(#sg)" opacity="0.31"/><circle cx="547.3" cy="198.4" r="1.81" fill="url(#sg)" opacity="0.31"/><circle cx="434.4" cy="52.2" r="1.81" fill="url(#sg)" opacity="0.31"/><circle cx="486.7" cy="50.0" r="1.81" fill="url(#sg)" opacity="0.31"/><circle cx="473.3" cy="37.3" r="1.81" fill="url(#sg)" opacity="0.31"/><circle cx="362.0" cy="42.9" r="1.88" fill="url(#sg)" opacity="0.36"/><circle cx="868.4" cy="27.3" r="3.61" fill="url(#sg)" opacity="1.00"/><circle cx="868.4" cy="27.3" r="0.56" fill="#fff" opacity="0.7"/><circle cx="865.1" cy="4.0" r="2.31" fill="url(#sg)" opacity="0.63"/><circle cx="807.6" cy="37.3" r="2.53" fill="url(#sg)" opacity="0.77"/><circle cx="807.1" cy="56.9" r="2.75" fill="url(#sg)" opacity="0.91"/><circle cx="817.1" cy="59.6" r="2.53" fill="url(#sg)" opacity="0.77"/><circle cx="771.8" cy="78.0" r="3.25" fill="url(#sg)" opacity="1.00"/><circle cx="771.8" cy="78.0" r="0.39" fill="#fff" opacity="0.7"/><circle cx="885.6" cy="82.4" r="2.53" fill="url(#sg)" opacity="0.77"/><circle cx="859.6" cy="148.9" r="3.61" fill="url(#sg)" opacity="1.00"/><circle cx="859.6" cy="148.9" r="0.56" fill="#fff" opacity="0.7"/><circle cx="753.3" cy="189.6" r="2.89" fill="url(#sg)" opacity="1.00"/><circle cx="870.2" cy="232.2" r="3.25" fill="url(#sg)" opacity="1.00"/><circle cx="870.2" cy="232.2" r="0.39" fill="#fff" opacity="0.7"/><circle cx="918.4" cy="204.9" r="2.31" fill="url(#sg)" opacity="0.63"/><circle cx="1000.0" cy="225.1" r="2.53" fill="url(#sg)" opacity="0.77"/><circle cx="984.4" cy="218.9" r="2.17" fill="url(#sg)" opacity="0.54"/><circle cx="1034.0" cy="147.8" r="2.31" fill="url(#sg)" opacity="0.63"/><circle cx="1022.2" cy="160.7" r="2.17" fill="url(#sg)" opacity="0.54"/><circle cx="960.0" cy="22.7" r="2.31" fill="url(#sg)" opacity="0.63"/><circle cx="961.6" cy="29.6" r="2.03" fill="url(#sg)" opacity="0.45"/><circle cx="993.8" cy="3.3" r="2.17" fill="url(#sg)" opacity="0.54"/><circle cx="1013.3" cy="49.8" r="2.17" fill="url(#sg)" opacity="0.54"/><circle cx="1017.8" cy="55.3" r="2.17" fill="url(#sg)" opacity="0.54"/><circle cx="1055.1" cy="50.7" r="2.17" fill="url(#sg)" opacity="0.54"/><circle cx="1030.2" cy="92.4" r="2.17" fill="url(#sg)" opacity="0.54"/><circle cx="1044.0" cy="122.2" r="2.17" fill="url(#sg)" opacity="0.54"/><circle cx="959.8" cy="120.4" r="2.17" fill="url(#sg)" opacity="0.54"/><circle cx="915.1" cy="80.7" r="2.17" fill="url(#sg)" opacity="0.54"/><circle cx="896.0" cy="39.3" r="2.17" fill="url(#sg)" opacity="0.54"/><circle cx="738.2" cy="81.6" r="2.17" fill="url(#sg)" opacity="0.54"/><circle cx="726.7" cy="37.3" r="2.17" fill="url(#sg)" opacity="0.54"/><circle cx="738.7" cy="30.9" r="2.03" fill="url(#sg)" opacity="0.45"/><circle cx="862.9" cy="109.6" r="2.17" fill="url(#sg)" opacity="0.54"/><circle cx="868.2" cy="113.8" r="2.17" fill="url(#sg)" opacity="0.54"/><circle cx="855.1" cy="109.3" r="2.03" fill="url(#sg)" opacity="0.45"/><circle cx="847.1" cy="139.6" r="2.17" fill="url(#sg)" opacity="0.54"/><circle cx="788.0" cy="147.3" r="2.17" fill="url(#sg)" opacity="0.54"/><circle cx="851.6" cy="169.3" r="2.10" fill="url(#sg)" opacity="0.49"/><circle cx="820.4" cy="174.7" r="2.10" fill="url(#sg)" opacity="0.49"/><circle cx="908.4" cy="147.3" r="2.03" fill="url(#sg)" opacity="0.45"/><circle cx="908.9" cy="156.2" r="2.03" fill="url(#sg)" opacity="0.45"/><circle cx="760.7" cy="216.2" r="2.17" fill="url(#sg)" opacity="0.54"/><circle cx="769.1" cy="216.0" r="2.17" fill="url(#sg)" opacity="0.54"/><circle cx="777.3" cy="234.0" r="2.31" fill="url(#sg)" opacity="0.63"/><circle cx="729.6" cy="186.7" r="2.17" fill="url(#sg)" opacity="0.54"/><circle cx="858.4" cy="191.1" r="2.10" fill="url(#sg)" opacity="0.49"/><circle cx="850.4" cy="212.9" r="2.10" fill="url(#sg)" opacity="0.49"/><circle cx="928.9" cy="109.3" r="2.03" fill="url(#sg)" opacity="0.45"/><circle cx="940.7" cy="159.3" r="2.03" fill="url(#sg)" opacity="0.45"/><circle cx="997.8" cy="104.0" r="2.03" fill="url(#sg)" opacity="0.45"/><circle cx="767.3" cy="12.2" r="1.95" fill="url(#sg)" opacity="0.40"/><circle cx="861.1" cy="13.3" r="1.88" fill="url(#sg)" opacity="0.36"/><circle cx="797.8" cy="46.7" r="1.88" fill="url(#sg)" opacity="0.36"/><circle cx="837.8" cy="49.3" r="1.88" fill="url(#sg)" opacity="0.36"/><circle cx="844.0" cy="62.9" r="1.88" fill="url(#sg)" opacity="0.36"/><circle cx="841.1" cy="65.6" r="1.81" fill="url(#sg)" opacity="0.31"/><circle cx="790.7" cy="59.6" r="1.88" fill="url(#sg)" opacity="0.36"/><circle cx="781.8" cy="67.8" r="1.95" fill="url(#sg)" opacity="0.40"/><circle cx="822.7" cy="75.1" r="1.88" fill="url(#sg)" opacity="0.36"/><circle cx="884.0" cy="52.2" r="1.88" fill="url(#sg)" opacity="0.36"/><circle cx="943.3" cy="58.2" r="1.95" fill="url(#sg)" opacity="0.40"/><circle cx="954.9" cy="63.3" r="1.88" fill="url(#sg)" opacity="0.36"/><circle cx="993.8" cy="62.9" r="1.88" fill="url(#sg)" opacity="0.36"/><circle cx="1046.7" cy="71.6" r="1.95" fill="url(#sg)" opacity="0.40"/><circle cx="1052.9" cy="88.4" r="1.95" fill="url(#sg)" opacity="0.40"/><circle cx="937.8" cy="103.8" r="1.88" fill="url(#sg)" opacity="0.36"/><circle cx="950.0" cy="123.8" r="1.81" fill="url(#sg)" opacity="0.31"/><circle cx="969.3" cy="127.8" r="1.88" fill="url(#sg)" opacity="0.36"/><circle cx="915.6" cy="128.2" r="1.81" fill="url(#sg)" opacity="0.31"/><circle cx="790.0" cy="127.3" r="1.88" fill="url(#sg)" opacity="0.36"/><circle cx="805.6" cy="145.1" r="1.88" fill="url(#sg)" opacity="0.36"/><circle cx="804.4" cy="150.0" r="1.88" fill="url(#sg)" opacity="0.36"/><circle cx="736.0" cy="183.8" r="1.95" fill="url(#sg)" opacity="0.40"/><circle cx="727.3" cy="202.7" r="1.88" fill="url(#sg)" opacity="0.36"/><circle cx="815.6" cy="185.6" r="1.81" fill="url(#sg)" opacity="0.31"/><circle cx="826.7" cy="193.3" r="1.81" fill="url(#sg)" opacity="0.31"/><circle cx="911.6" cy="190.7" r="1.81" fill="url(#sg)" opacity="0.31"/><circle cx="1011.8" cy="205.1" r="1.81" fill="url(#sg)" opacity="0.31"/><circle cx="1048.9" cy="174.0" r="1.88" fill="url(#sg)" opacity="0.36"/><circle cx="1021.1" cy="179.3" r="1.88" fill="url(#sg)" opacity="0.36"/><circle cx="827.3" cy="232.2" r="1.95" fill="url(#sg)" opacity="0.40"/><circle cx="808.9" cy="236.7" r="1.88" fill="url(#sg)" opacity="0.36"/><circle cx="924.4" cy="222.9" r="1.88" fill="url(#sg)" opacity="0.36"/><circle cx="997.1" cy="236.7" r="1.88" fill="url(#sg)" opacity="0.36"/><circle cx="1060.4" cy="24.0" r="1.88" fill="url(#sg)" opacity="0.36"/><circle cx="1005.6" cy="39.6" r="1.81" fill="url(#sg)" opacity="0.31"/><circle cx="132.9" cy="248.9" r="3.25" fill="url(#sg)" opacity="1.00"/><circle cx="132.9" cy="248.9" r="0.39" fill="#fff" opacity="0.7"/><circle cx="53.3" cy="255.6" r="2.53" fill="url(#sg)" opacity="0.77"/><circle cx="8.9" cy="280.7" r="2.17" fill="url(#sg)" opacity="0.54"/><circle cx="115.6" cy="285.8" r="2.53" fill="url(#sg)" opacity="0.77"/><circle cx="137.1" cy="281.6" r="2.03" fill="url(#sg)" opacity="0.45"/><circle cx="258.4" cy="274.0" r="2.31" fill="url(#sg)" opacity="0.63"/><circle cx="234.4" cy="278.9" r="2.17" fill="url(#sg)" opacity="0.54"/><circle cx="233.6" cy="286.2" r="2.31" fill="url(#sg)" opacity="0.63"/><circle cx="286.9" cy="297.6" r="2.75" fill="url(#sg)" opacity="0.91"/><circle cx="291.1" cy="306.7" r="2.03" fill="url(#sg)" opacity="0.45"/><circle cx="208.2" cy="291.6" r="2.03" fill="url(#sg)" opacity="0.45"/><circle cx="300.9" cy="318.2" r="2.31" fill="url(#sg)" opacity="0.63"/><circle cx="192.4" cy="321.1" r="2.53" fill="url(#sg)" opacity="0.77"/><circle cx="177.8" cy="316.7" r="2.10" fill="url(#sg)" opacity="0.49"/><circle cx="102.7" cy="321.1" r="2.17" fill="url(#sg)" opacity="0.54"/><circle cx="254.9" cy="335.6" r="2.31" fill="url(#sg)" opacity="0.63"/><circle cx="337.6" cy="343.8" r="2.17" fill="url(#sg)" opacity="0.54"/><circle cx="350.7" cy="342.4" r="2.17" fill="url(#sg)" opacity="0.54"/><circle cx="64.9" cy="360.4" r="2.53" fill="url(#sg)" opacity="0.77"/><circle cx="132.2" cy="362.4" r="2.75" fill="url(#sg)" opacity="0.91"/><circle cx="190.0" cy="374.2" r="3.03" fill="url(#sg)" opacity="1.00"/><circle cx="261.8" cy="382.0" r="2.39" fill="url(#sg)" opacity="0.68"/><circle cx="253.6" cy="388.7" r="2.03" fill="url(#sg)" opacity="0.45"/><circle cx="152.0" cy="394.0" r="2.10" fill="url(#sg)" opacity="0.49"/><circle cx="108.2" cy="405.6" r="2.03" fill="url(#sg)" opacity="0.45"/><circle cx="107.1" cy="428.0" r="2.10" fill="url(#sg)" opacity="0.49"/><circle cx="60.0" cy="436.4" r="2.17" fill="url(#sg)" opacity="0.54"/><circle cx="60.9" cy="417.8" r="1.95" fill="url(#sg)" opacity="0.40"/><circle cx="72.7" cy="450.4" r="2.03" fill="url(#sg)" opacity="0.45"/><circle cx="86.4" cy="451.3" r="2.10" fill="url(#sg)" opacity="0.49"/><circle cx="299.3" cy="448.2" r="2.31" fill="url(#sg)" opacity="0.63"/><circle cx="240.9" cy="454.7" r="2.03" fill="url(#sg)" opacity="0.45"/><circle cx="188.9" cy="466.9" r="2.10" fill="url(#sg)" opacity="0.49"/><circle cx="202.2" cy="476.0" r="2.17" fill="url(#sg)" opacity="0.54"/><circle cx="248.7" cy="466.0" r="2.10" fill="url(#sg)" opacity="0.49"/><circle cx="32.9" cy="351.8" r="2.03" fill="url(#sg)" opacity="0.45"/><circle cx="32.9" cy="326.0" r="1.95" fill="url(#sg)" opacity="0.40"/><circle cx="277.1" cy="399.3" r="1.95" fill="url(#sg)" opacity="0.40"/><circle cx="267.8" cy="414.0" r="1.95" fill="url(#sg)" opacity="0.40"/><circle cx="354.9" cy="417.1" r="2.03" fill="url(#sg)" opacity="0.45"/><circle cx="341.1" cy="410.4" r="1.95" fill="url(#sg)" opacity="0.40"/><circle cx="319.3" cy="253.8" r="1.95" fill="url(#sg)" opacity="0.40"/><circle cx="344.0" cy="302.9" r="2.03" fill="url(#sg)" opacity="0.45"/><circle cx="335.6" cy="292.7" r="1.95" fill="url(#sg)" opacity="0.40"/><circle cx="316.2" cy="308.2" r="1.95" fill="url(#sg)" opacity="0.40"/><circle cx="116.7" cy="479.6" r="3.61" fill="url(#sg)" opacity="1.00"/><circle cx="116.7" cy="479.6" r="0.56" fill="#fff" opacity="0.7"/><circle cx="120.0" cy="250.7" r="1.95" fill="url(#sg)" opacity="0.40"/><circle cx="84.4" cy="249.3" r="1.88" fill="url(#sg)" opacity="0.36"/><circle cx="21.8" cy="312.2" r="1.88" fill="url(#sg)" opacity="0.36"/><circle cx="28.4" cy="314.9" r="1.81" fill="url(#sg)" opacity="0.31"/><circle cx="115.6" cy="311.6" r="1.88" fill="url(#sg)" opacity="0.36"/><circle cx="127.8" cy="277.1" r="1.81" fill="url(#sg)" opacity="0.31"/><circle cx="158.9" cy="281.1" r="1.81" fill="url(#sg)" opacity="0.31"/><circle cx="184.4" cy="286.7" r="1.81" fill="url(#sg)" opacity="0.31"/><circle cx="252.2" cy="313.8" r="1.81" fill="url(#sg)" opacity="0.31"/><circle cx="297.3" cy="317.1" r="1.88" fill="url(#sg)" opacity="0.36"/><circle cx="333.3" cy="337.1" r="1.81" fill="url(#sg)" opacity="0.31"/><circle cx="309.3" cy="364.4" r="1.88" fill="url(#sg)" opacity="0.36"/><circle cx="291.6" cy="370.0" r="1.81" fill="url(#sg)" opacity="0.31"/><circle cx="316.0" cy="379.3" r="1.81" fill="url(#sg)" opacity="0.31"/><circle cx="21.1" cy="377.8" r="1.88" fill="url(#sg)" opacity="0.36"/><circle cx="51.1" cy="391.1" r="1.81" fill="url(#sg)" opacity="0.31"/><circle cx="95.6" cy="394.4" r="1.81" fill="url(#sg)" opacity="0.31"/><circle cx="18.9" cy="427.8" r="1.81" fill="url(#sg)" opacity="0.31"/><circle cx="53.3" cy="443.3" r="1.81" fill="url(#sg)" opacity="0.31"/><circle cx="88.9" cy="437.1" r="1.81" fill="url(#sg)" opacity="0.31"/><circle cx="207.3" cy="432.9" r="1.88" fill="url(#sg)" opacity="0.36"/><circle cx="226.7" cy="426.7" r="1.81" fill="url(#sg)" opacity="0.31"/><circle cx="294.9" cy="410.4" r="1.81" fill="url(#sg)" opacity="0.31"/><circle cx="294.0" cy="431.1" r="1.81" fill="url(#sg)" opacity="0.31"/><circle cx="345.6" cy="436.0" r="1.88" fill="url(#sg)" opacity="0.36"/><circle cx="286.7" cy="465.1" r="1.81" fill="url(#sg)" opacity="0.31"/><circle cx="200.0" cy="467.3" r="1.88" fill="url(#sg)" opacity="0.36"/><circle cx="266.7" cy="433.3" r="1.81" fill="url(#sg)" opacity="0.31"/><circle cx="514.4" cy="266.0" r="2.75" fill="url(#sg)" opacity="0.91"/><circle cx="415.3" cy="270.2" r="2.53" fill="url(#sg)" opacity="0.77"/><circle cx="426.4" cy="250.4" r="2.17" fill="url(#sg)" opacity="0.54"/><circle cx="472.9" cy="256.7" r="2.17" fill="url(#sg)" opacity="0.54"/><circle cx="461.8" cy="262.9" r="2.03" fill="url(#sg)" opacity="0.45"/><circle cx="610.4" cy="283.6" r="2.89" fill="url(#sg)" opacity="1.00"/><circle cx="575.1" cy="297.3" r="2.53" fill="url(#sg)" opacity="0.77"/><circle cx="635.6" cy="305.3" r="2.31" fill="url(#sg)" opacity="0.63"/><circle cx="593.3" cy="308.4" r="2.31" fill="url(#sg)" opacity="0.63"/><circle cx="401.8" cy="318.4" r="3.03" fill="url(#sg)" opacity="1.00"/><circle cx="474.7" cy="317.8" r="3.25" fill="url(#sg)" opacity="1.00"/><circle cx="474.7" cy="317.8" r="0.39" fill="#fff" opacity="0.7"/><circle cx="365.1" cy="337.3" r="2.75" fill="url(#sg)" opacity="0.91"/><circle cx="475.1" cy="298.4" r="2.31" fill="url(#sg)" opacity="0.63"/><circle cx="463.3" cy="294.0" r="2.10" fill="url(#sg)" opacity="0.49"/><circle cx="532.2" cy="303.1" r="2.10" fill="url(#sg)" opacity="0.49"/><circle cx="520.2" cy="308.0" r="2.03" fill="url(#sg)" opacity="0.45"/><circle cx="519.6" cy="351.1" r="2.75" fill="url(#sg)" opacity="0.91"/><circle cx="562.9" cy="371.6" r="3.11" fill="url(#sg)" opacity="1.00"/><circle cx="391.3" cy="366.7" r="2.17" fill="url(#sg)" opacity="0.54"/><circle cx="485.8" cy="384.2" r="2.39" fill="url(#sg)" opacity="0.68"/><circle cx="386.4" cy="398.2" r="2.31" fill="url(#sg)" opacity="0.63"/><circle cx="436.2" cy="405.8" r="2.75" fill="url(#sg)" opacity="0.91"/><circle cx="401.3" cy="399.8" r="2.03" fill="url(#sg)" opacity="0.45"/><circle cx="417.8" cy="406.2" r="2.03" fill="url(#sg)" opacity="0.45"/><circle cx="436.4" cy="416.7" r="2.10" fill="url(#sg)" opacity="0.49"/><circle cx="434.2" cy="433.1" r="2.31" fill="url(#sg)" opacity="0.63"/><circle cx="446.0" cy="428.7" r="2.10" fill="url(#sg)" opacity="0.49"/><circle cx="664.4" cy="403.6" r="2.75" fill="url(#sg)" opacity="0.91"/><circle cx="630.7" cy="413.6" r="2.17" fill="url(#sg)" opacity="0.54"/><circle cx="608.0" cy="426.2" r="2.17" fill="url(#sg)" opacity="0.54"/><circle cx="587.8" cy="438.9" r="2.31" fill="url(#sg)" opacity="0.63"/><circle cx="630.2" cy="437.1" r="2.10" fill="url(#sg)" opacity="0.49"/><circle cx="550.4" cy="449.8" r="2.53" fill="url(#sg)" opacity="0.77"/><circle cx="680.2" cy="242.7" r="2.31" fill="url(#sg)" opacity="0.63"/><circle cx="676.2" cy="250.7" r="2.10" fill="url(#sg)" opacity="0.49"/><circle cx="712.4" cy="272.0" r="2.17" fill="url(#sg)" opacity="0.54"/><circle cx="626.7" cy="248.4" r="2.03" fill="url(#sg)" opacity="0.45"/><circle cx="676.4" cy="272.4" r="2.03" fill="url(#sg)" opacity="0.45"/><circle cx="696.0" cy="321.8" r="2.10" fill="url(#sg)" opacity="0.49"/><circle cx="701.1" cy="353.8" r="2.03" fill="url(#sg)" opacity="0.45"/><circle cx="646.2" cy="374.9" r="1.95" fill="url(#sg)" opacity="0.40"/><circle cx="650.0" cy="374.9" r="1.95" fill="url(#sg)" opacity="0.40"/><circle cx="645.6" cy="461.8" r="2.03" fill="url(#sg)" opacity="0.45"/><circle cx="618.4" cy="449.6" r="1.95" fill="url(#sg)" opacity="0.40"/><circle cx="542.9" cy="367.6" r="2.03" fill="url(#sg)" opacity="0.45"/><circle cx="387.6" cy="351.6" r="2.03" fill="url(#sg)" opacity="0.45"/><circle cx="376.0" cy="371.6" r="2.03" fill="url(#sg)" opacity="0.45"/><circle cx="364.9" cy="261.8" r="2.03" fill="url(#sg)" opacity="0.45"/><circle cx="365.3" cy="268.9" r="2.03" fill="url(#sg)" opacity="0.45"/><circle cx="634.9" cy="286.4" r="2.03" fill="url(#sg)" opacity="0.45"/><circle cx="650.0" cy="288.0" r="1.95" fill="url(#sg)" opacity="0.40"/><circle cx="584.4" cy="414.9" r="2.03" fill="url(#sg)" opacity="0.45"/><circle cx="620.0" cy="415.6" r="1.95" fill="url(#sg)" opacity="0.40"/><circle cx="655.1" cy="412.9" r="1.95" fill="url(#sg)" opacity="0.40"/><circle cx="426.2" cy="456.2" r="1.95" fill="url(#sg)" opacity="0.40"/><circle cx="385.1" cy="313.1" r="1.95" fill="url(#sg)" opacity="0.40"/><circle cx="591.8" cy="265.1" r="1.95" fill="url(#sg)" opacity="0.40"/><circle cx="423.3" cy="411.1" r="1.88" fill="url(#sg)" opacity="0.36"/><circle cx="430.0" cy="424.4" r="1.88" fill="url(#sg)" opacity="0.36"/><circle cx="418.9" cy="437.3" r="1.81" fill="url(#sg)" opacity="0.31"/><circle cx="456.7" cy="300.0" r="1.81" fill="url(#sg)" opacity="0.31"/><circle cx="612.2" cy="330.7" r="1.95" fill="url(#sg)" opacity="0.40"/><circle cx="668.9" cy="428.9" r="1.81" fill="url(#sg)" opacity="0.31"/><circle cx="671.1" cy="438.9" r="1.81" fill="url(#sg)" opacity="0.31"/><circle cx="680.0" cy="456.7" r="1.81" fill="url(#sg)" opacity="0.31"/><circle cx="845.1" cy="249.3" r="2.89" fill="url(#sg)" opacity="1.00"/><circle cx="970.9" cy="243.8" r="2.75" fill="url(#sg)" opacity="0.91"/><circle cx="992.4" cy="244.2" r="2.10" fill="url(#sg)" opacity="0.49"/><circle cx="966.7" cy="249.8" r="2.10" fill="url(#sg)" opacity="0.49"/><circle cx="919.1" cy="273.8" r="2.39" fill="url(#sg)" opacity="0.68"/><circle cx="884.0" cy="279.3" r="2.24" fill="url(#sg)" opacity="0.59"/><circle cx="748.4" cy="286.2" r="2.31" fill="url(#sg)" opacity="0.63"/><circle cx="784.4" cy="293.6" r="2.31" fill="url(#sg)" opacity="0.63"/><circle cx="773.3" cy="301.1" r="2.10" fill="url(#sg)" opacity="0.49"/><circle cx="926.4" cy="311.8" r="3.61" fill="url(#sg)" opacity="1.00"/><circle cx="926.4" cy="311.8" r="0.56" fill="#fff" opacity="0.7"/><circle cx="877.3" cy="323.1" r="2.53" fill="url(#sg)" opacity="0.77"/><circle cx="748.4" cy="328.4" r="2.53" fill="url(#sg)" opacity="0.77"/><circle cx="811.6" cy="329.3" r="2.10" fill="url(#sg)" opacity="0.49"/><circle cx="965.3" cy="334.7" r="2.10" fill="url(#sg)" opacity="0.49"/><circle cx="873.6" cy="341.6" r="2.03" fill="url(#sg)" opacity="0.45"/><circle cx="933.8" cy="358.4" r="2.75" fill="url(#sg)" opacity="0.91"/><circle cx="916.7" cy="364.9" r="2.31" fill="url(#sg)" opacity="0.63"/><circle cx="830.2" cy="376.4" r="2.75" fill="url(#sg)" opacity="0.91"/><circle cx="789.8" cy="384.4" r="3.03" fill="url(#sg)" opacity="1.00"/><circle cx="772.9" cy="384.4" r="2.03" fill="url(#sg)" opacity="0.45"/><circle cx="994.9" cy="379.6" r="2.17" fill="url(#sg)" opacity="0.54"/><circle cx="818.7" cy="402.9" r="2.31" fill="url(#sg)" opacity="0.63"/><circle cx="813.8" cy="412.7" r="2.31" fill="url(#sg)" opacity="0.63"/><circle cx="846.4" cy="418.4" r="2.17" fill="url(#sg)" opacity="0.54"/><circle cx="893.8" cy="413.1" r="2.17" fill="url(#sg)" opacity="0.54"/><circle cx="906.2" cy="412.4" r="2.03" fill="url(#sg)" opacity="0.45"/><circle cx="918.7" cy="424.2" r="2.17" fill="url(#sg)" opacity="0.54"/><circle cx="792.7" cy="416.7" r="2.03" fill="url(#sg)" opacity="0.45"/><circle cx="816.9" cy="419.6" r="2.03" fill="url(#sg)" opacity="0.45"/><circle cx="778.7" cy="427.3" r="2.03" fill="url(#sg)" opacity="0.45"/><circle cx="741.6" cy="435.8" r="2.03" fill="url(#sg)" opacity="0.45"/><circle cx="871.1" cy="452.2" r="2.53" fill="url(#sg)" opacity="0.77"/><circle cx="888.2" cy="456.0" r="2.39" fill="url(#sg)" opacity="0.68"/><circle cx="879.8" cy="452.7" r="2.10" fill="url(#sg)" opacity="0.49"/><circle cx="960.0" cy="456.7" r="2.75" fill="url(#sg)" opacity="0.91"/><circle cx="962.9" cy="463.8" r="2.17" fill="url(#sg)" opacity="0.54"/><circle cx="899.6" cy="465.3" r="3.03" fill="url(#sg)" opacity="1.00"/><circle cx="846.0" cy="468.2" r="2.53" fill="url(#sg)" opacity="0.77"/><circle cx="928.4" cy="473.1" r="2.53" fill="url(#sg)" opacity="0.77"/><circle cx="749.8" cy="254.4" r="2.03" fill="url(#sg)" opacity="0.45"/><circle cx="807.3" cy="262.7" r="2.03" fill="url(#sg)" opacity="0.45"/><circle cx="796.2" cy="271.6" r="2.03" fill="url(#sg)" opacity="0.45"/><circle cx="862.9" cy="275.6" r="2.03" fill="url(#sg)" opacity="0.45"/><circle cx="863.3" cy="283.8" r="2.10" fill="url(#sg)" opacity="0.49"/><circle cx="934.4" cy="286.2" r="2.03" fill="url(#sg)" opacity="0.45"/><circle cx="894.0" cy="271.3" r="1.95" fill="url(#sg)" opacity="0.40"/><circle cx="1042.2" cy="274.0" r="2.03" fill="url(#sg)" opacity="0.45"/><circle cx="1028.2" cy="275.6" r="1.95" fill="url(#sg)" opacity="0.40"/><circle cx="976.2" cy="280.4" r="1.95" fill="url(#sg)" opacity="0.40"/><circle cx="952.2" cy="404.7" r="2.03" fill="url(#sg)" opacity="0.45"/><circle cx="990.9" cy="444.7" r="2.03" fill="url(#sg)" opacity="0.45"/><circle cx="900.0" cy="450.4" r="2.03" fill="url(#sg)" opacity="0.45"/><circle cx="836.2" cy="449.1" r="1.95" fill="url(#sg)" opacity="0.40"/><circle cx="750.2" cy="467.3" r="2.03" fill="url(#sg)" opacity="0.45"/><circle cx="1001.8" cy="399.6" r="1.95" fill="url(#sg)" opacity="0.40"/><circle cx="783.3" cy="397.8" r="1.95" fill="url(#sg)" opacity="0.40"/><circle cx="731.1" cy="282.9" r="1.95" fill="url(#sg)" opacity="0.40"/><circle cx="1028.9" cy="374.0" r="3.25" fill="url(#sg)" opacity="1.00"/><circle cx="1028.9" cy="374.0" r="0.39" fill="#fff" opacity="0.7"/><circle cx="1036.2" cy="419.1" r="2.17" fill="url(#sg)" opacity="0.54"/><circle cx="768.4" cy="296.7" r="1.88" fill="url(#sg)" opacity="0.36"/><circle cx="760.0" cy="309.3" r="1.81" fill="url(#sg)" opacity="0.31"/><circle cx="793.3" cy="318.2" r="1.81" fill="url(#sg)" opacity="0.31"/><circle cx="784.9" cy="323.8" r="1.81" fill="url(#sg)" opacity="0.31"/><circle cx="743.8" cy="317.1" r="1.81" fill="url(#sg)" opacity="0.31"/><circle cx="890.0" cy="298.9" r="1.81" fill="url(#sg)" opacity="0.31"/><circle cx="844.4" cy="367.3" r="1.81" fill="url(#sg)" opacity="0.31"/><circle cx="904.0" cy="357.8" r="1.81" fill="url(#sg)" opacity="0.31"/><circle cx="774.4" cy="347.3" r="1.81" fill="url(#sg)" opacity="0.31"/><circle cx="802.2" cy="347.3" r="1.81" fill="url(#sg)" opacity="0.31"/><circle cx="767.8" cy="371.1" r="1.81" fill="url(#sg)" opacity="0.31"/><circle cx="783.3" cy="365.6" r="1.81" fill="url(#sg)" opacity="0.31"/><circle cx="805.6" cy="390.4" r="1.81" fill="url(#sg)" opacity="0.31"/><circle cx="774.4" cy="445.6" r="1.88" fill="url(#sg)" opacity="0.36"/><circle cx="804.4" cy="461.1" r="1.81" fill="url(#sg)" opacity="0.31"/><circle cx="778.9" cy="470.0" r="1.81" fill="url(#sg)" opacity="0.31"/><circle cx="748.9" cy="458.9" r="1.81" fill="url(#sg)" opacity="0.31"/><circle cx="723.3" cy="468.9" r="1.81" fill="url(#sg)" opacity="0.31"/><circle cx="982.2" cy="414.4" r="1.81" fill="url(#sg)" opacity="0.31"/><circle cx="1000.0" cy="422.2" r="1.81" fill="url(#sg)" opacity="0.31"/><circle cx="117.1" cy="480.7" r="3.61" fill="url(#sg)" opacity="1.00"/><circle cx="117.1" cy="480.7" r="0.56" fill="#fff" opacity="0.7"/><circle cx="37.8" cy="482.4" r="2.10" fill="url(#sg)" opacity="0.49"/><circle cx="55.1" cy="515.3" r="2.39" fill="url(#sg)" opacity="0.68"/><circle cx="10.0" cy="510.9" r="2.17" fill="url(#sg)" opacity="0.54"/><circle cx="57.3" cy="502.9" r="2.03" fill="url(#sg)" opacity="0.45"/><circle cx="190.0" cy="502.9" r="2.31" fill="url(#sg)" opacity="0.63"/><circle cx="161.8" cy="496.2" r="2.03" fill="url(#sg)" opacity="0.45"/><circle cx="280.9" cy="488.9" r="2.17" fill="url(#sg)" opacity="0.54"/><circle cx="308.9" cy="501.3" r="2.39" fill="url(#sg)" opacity="0.68"/><circle cx="346.0" cy="489.6" r="2.03" fill="url(#sg)" opacity="0.45"/><circle cx="278.2" cy="524.7" r="2.53" fill="url(#sg)" opacity="0.77"/><circle cx="314.4" cy="541.6" r="2.17" fill="url(#sg)" opacity="0.54"/><circle cx="314.2" cy="553.6" r="2.03" fill="url(#sg)" opacity="0.45"/><circle cx="296.7" cy="519.6" r="1.95" fill="url(#sg)" opacity="0.40"/><circle cx="311.1" cy="522.9" r="1.95" fill="url(#sg)" opacity="0.40"/><circle cx="153.3" cy="530.9" r="2.17" fill="url(#sg)" opacity="0.54"/><circle cx="73.8" cy="541.6" r="2.03" fill="url(#sg)" opacity="0.45"/><circle cx="49.6" cy="523.8" r="2.03" fill="url(#sg)" opacity="0.45"/><circle cx="102.0" cy="532.7" r="1.95" fill="url(#sg)" opacity="0.40"/><circle cx="16.7" cy="573.3" r="2.10" fill="url(#sg)" opacity="0.49"/><circle cx="95.6" cy="569.1" r="2.03" fill="url(#sg)" opacity="0.45"/><circle cx="36.7" cy="562.0" r="1.95" fill="url(#sg)" opacity="0.40"/><circle cx="127.1" cy="578.9" r="2.39" fill="url(#sg)" opacity="0.68"/><circle cx="163.8" cy="585.3" r="2.24" fill="url(#sg)" opacity="0.59"/><circle cx="188.4" cy="585.3" r="3.25" fill="url(#sg)" opacity="1.00"/><circle cx="188.4" cy="585.3" r="0.39" fill="#fff" opacity="0.7"/><circle cx="268.0" cy="587.8" r="2.53" fill="url(#sg)" opacity="0.77"/><circle cx="244.0" cy="581.6" r="2.10" fill="url(#sg)" opacity="0.49"/><circle cx="261.1" cy="565.8" r="2.03" fill="url(#sg)" opacity="0.45"/><circle cx="160.0" cy="564.7" r="2.03" fill="url(#sg)" opacity="0.45"/><circle cx="205.8" cy="610.0" r="2.39" fill="url(#sg)" opacity="0.68"/><circle cx="108.2" cy="613.8" r="2.31" fill="url(#sg)" opacity="0.63"/><circle cx="105.1" cy="613.8" r="2.03" fill="url(#sg)" opacity="0.45"/><circle cx="25.1" cy="604.2" r="2.10" fill="url(#sg)" opacity="0.49"/><circle cx="58.9" cy="599.3" r="2.03" fill="url(#sg)" opacity="0.45"/><circle cx="122.7" cy="630.4" r="2.17" fill="url(#sg)" opacity="0.54"/><circle cx="83.6" cy="638.9" r="3.75" fill="url(#sg)" opacity="1.00"/><circle cx="83.6" cy="638.9" r="0.63" fill="#fff" opacity="0.7"/><circle cx="115.3" cy="646.4" r="2.17" fill="url(#sg)" opacity="0.54"/><circle cx="104.9" cy="658.2" r="2.39" fill="url(#sg)" opacity="0.68"/><circle cx="302.2" cy="640.4" r="3.25" fill="url(#sg)" opacity="1.00"/><circle cx="302.2" cy="640.4" r="0.39" fill="#fff" opacity="0.7"/><circle cx="302.2" cy="637.1" r="2.53" fill="url(#sg)" opacity="0.77"/><circle cx="256.9" cy="646.9" r="2.10" fill="url(#sg)" opacity="0.49"/><circle cx="227.1" cy="656.0" r="2.31" fill="url(#sg)" opacity="0.63"/><circle cx="196.0" cy="648.2" r="2.03" fill="url(#sg)" opacity="0.45"/><circle cx="291.1" cy="618.9" r="2.03" fill="url(#sg)" opacity="0.45"/><circle cx="255.8" cy="612.9" r="1.95" fill="url(#sg)" opacity="0.40"/><circle cx="162.2" cy="683.6" r="3.75" fill="url(#sg)" opacity="1.00"/><circle cx="162.2" cy="683.6" r="0.63" fill="#fff" opacity="0.7"/><circle cx="129.6" cy="686.0" r="2.39" fill="url(#sg)" opacity="0.68"/><circle cx="112.2" cy="692.9" r="2.31" fill="url(#sg)" opacity="0.63"/><circle cx="9.1" cy="692.2" r="2.75" fill="url(#sg)" opacity="0.91"/><circle cx="37.3" cy="702.2" r="2.17" fill="url(#sg)" opacity="0.54"/><circle cx="50.9" cy="697.1" r="2.10" fill="url(#sg)" opacity="0.49"/><circle cx="20.2" cy="697.3" r="1.95" fill="url(#sg)" opacity="0.40"/><circle cx="302.4" cy="688.9" r="2.53" fill="url(#sg)" opacity="0.77"/><circle cx="352.4" cy="687.1" r="2.89" fill="url(#sg)" opacity="1.00"/><circle cx="320.9" cy="679.1" r="2.17" fill="url(#sg)" opacity="0.54"/><circle cx="230.7" cy="682.4" r="2.10" fill="url(#sg)" opacity="0.49"/><circle cx="247.6" cy="691.8" r="2.03" fill="url(#sg)" opacity="0.45"/><circle cx="190.4" cy="697.3" r="2.03" fill="url(#sg)" opacity="0.45"/><circle cx="210.4" cy="709.6" r="1.95" fill="url(#sg)" opacity="0.40"/><circle cx="174.2" cy="704.9" r="1.95" fill="url(#sg)" opacity="0.40"/><circle cx="358.2" cy="674.4" r="2.53" fill="url(#sg)" opacity="0.77"/><circle cx="126.7" cy="508.4" r="1.81" fill="url(#sg)" opacity="0.31"/><circle cx="111.1" cy="537.3" r="1.81" fill="url(#sg)" opacity="0.31"/><circle cx="156.7" cy="540.0" r="1.81" fill="url(#sg)" opacity="0.31"/><circle cx="180.4" cy="550.7" r="1.88" fill="url(#sg)" opacity="0.36"/><circle cx="203.3" cy="536.7" r="1.81" fill="url(#sg)" opacity="0.31"/><circle cx="285.6" cy="544.9" r="1.88" fill="url(#sg)" opacity="0.36"/><circle cx="331.1" cy="529.3" r="1.81" fill="url(#sg)" opacity="0.31"/><circle cx="281.6" cy="512.2" r="1.81" fill="url(#sg)" opacity="0.31"/><circle cx="344.4" cy="503.3" r="1.81" fill="url(#sg)" opacity="0.31"/><circle cx="28.9" cy="582.7" r="1.81" fill="url(#sg)" opacity="0.31"/><circle cx="86.7" cy="597.1" r="1.81" fill="url(#sg)" opacity="0.31"/><circle cx="126.0" cy="604.4" r="1.81" fill="url(#sg)" opacity="0.31"/><circle cx="151.1" cy="623.3" r="1.81" fill="url(#sg)" opacity="0.31"/><circle cx="262.9" cy="594.4" r="1.81" fill="url(#sg)" opacity="0.31"/><circle cx="227.8" cy="584.0" r="1.81" fill="url(#sg)" opacity="0.31"/><circle cx="131.6" cy="661.6" r="1.88" fill="url(#sg)" opacity="0.36"/><circle cx="101.1" cy="680.0" r="1.81" fill="url(#sg)" opacity="0.31"/><circle cx="88.9" cy="682.2" r="1.81" fill="url(#sg)" opacity="0.31"/><circle cx="58.9" cy="694.4" r="1.81" fill="url(#sg)" opacity="0.31"/><circle cx="185.6" cy="674.0" r="1.81" fill="url(#sg)" opacity="0.31"/><circle cx="181.1" cy="651.1" r="1.81" fill="url(#sg)" opacity="0.31"/><circle cx="343.3" cy="657.1" r="1.81" fill="url(#sg)" opacity="0.31"/><circle cx="322.2" cy="664.0" r="1.81" fill="url(#sg)" opacity="0.31"/><circle cx="135.6" cy="702.2" r="1.81" fill="url(#sg)" opacity="0.31"/><circle cx="115.6" cy="706.7" r="1.81" fill="url(#sg)" opacity="0.31"/><circle cx="629.6" cy="482.0" r="2.89" fill="url(#sg)" opacity="1.00"/><circle cx="572.7" cy="483.8" r="2.31" fill="url(#sg)" opacity="0.63"/><circle cx="560.4" cy="496.2" r="2.31" fill="url(#sg)" opacity="0.63"/><circle cx="492.0" cy="492.9" r="2.31" fill="url(#sg)" opacity="0.63"/><circle cx="495.3" cy="506.0" r="2.31" fill="url(#sg)" opacity="0.63"/><circle cx="512.4" cy="502.7" r="2.03" fill="url(#sg)" opacity="0.45"/><circle cx="392.0" cy="495.3" r="2.10" fill="url(#sg)" opacity="0.49"/><circle cx="405.1" cy="494.0" r="1.95" fill="url(#sg)" opacity="0.40"/><circle cx="620.4" cy="524.4" r="2.53" fill="url(#sg)" opacity="0.77"/><circle cx="650.7" cy="500.0" r="2.03" fill="url(#sg)" opacity="0.45"/><circle cx="692.9" cy="508.9" r="2.03" fill="url(#sg)" opacity="0.45"/><circle cx="683.6" cy="518.4" r="2.03" fill="url(#sg)" opacity="0.45"/><circle cx="363.3" cy="537.8" r="3.03" fill="url(#sg)" opacity="1.00"/><circle cx="547.8" cy="542.9" r="2.39" fill="url(#sg)" opacity="0.68"/><circle cx="532.2" cy="549.6" r="3.18" fill="url(#sg)" opacity="1.00"/><circle cx="532.2" cy="549.6" r="0.35" fill="#fff" opacity="0.7"/><circle cx="534.9" cy="549.6" r="2.75" fill="url(#sg)" opacity="0.91"/><circle cx="462.9" cy="558.9" r="2.17" fill="url(#sg)" opacity="0.54"/><circle cx="400.0" cy="554.9" r="2.03" fill="url(#sg)" opacity="0.45"/><circle cx="420.0" cy="572.4" r="3.75" fill="url(#sg)" opacity="1.00"/><circle cx="420.0" cy="572.4" r="0.63" fill="#fff" opacity="0.7"/><circle cx="530.2" cy="572.9" r="3.75" fill="url(#sg)" opacity="1.00"/><circle cx="530.2" cy="572.9" r="0.63" fill="#fff" opacity="0.7"/><circle cx="707.6" cy="546.0" r="2.17" fill="url(#sg)" opacity="0.54"/><circle cx="645.1" cy="556.2" r="2.03" fill="url(#sg)" opacity="0.45"/><circle cx="598.9" cy="558.7" r="2.03" fill="url(#sg)" opacity="0.45"/><circle cx="619.6" cy="549.8" r="1.95" fill="url(#sg)" opacity="0.40"/><circle cx="641.6" cy="540.4" r="1.95" fill="url(#sg)" opacity="0.40"/><circle cx="565.1" cy="570.2" r="1.95" fill="url(#sg)" opacity="0.40"/><circle cx="599.8" cy="576.7" r="1.95" fill="url(#sg)" opacity="0.40"/><circle cx="509.6" cy="601.8" r="2.60" fill="url(#sg)" opacity="0.82"/><circle cx="519.3" cy="608.0" r="2.17" fill="url(#sg)" opacity="0.54"/><circle cx="701.6" cy="602.9" r="2.89" fill="url(#sg)" opacity="1.00"/><circle cx="709.6" cy="601.6" r="2.39" fill="url(#sg)" opacity="0.68"/><circle cx="634.0" cy="608.2" r="2.24" fill="url(#sg)" opacity="0.59"/><circle cx="622.4" cy="610.9" r="2.17" fill="url(#sg)" opacity="0.54"/><circle cx="613.6" cy="614.4" r="2.24" fill="url(#sg)" opacity="0.59"/><circle cx="625.1" cy="631.3" r="2.17" fill="url(#sg)" opacity="0.54"/><circle cx="611.6" cy="639.3" r="2.17" fill="url(#sg)" opacity="0.54"/><circle cx="632.0" cy="633.3" r="1.95" fill="url(#sg)" opacity="0.40"/><circle cx="598.4" cy="633.3" r="1.95" fill="url(#sg)" opacity="0.40"/><circle cx="398.9" cy="642.9" r="2.53" fill="url(#sg)" opacity="0.77"/><circle cx="373.3" cy="664.9" r="2.53" fill="url(#sg)" opacity="0.77"/><circle cx="494.4" cy="661.6" r="2.60" fill="url(#sg)" opacity="0.82"/><circle cx="479.8" cy="669.8" r="2.89" fill="url(#sg)" opacity="1.00"/><circle cx="480.0" cy="677.6" r="2.17" fill="url(#sg)" opacity="0.54"/><circle cx="470.0" cy="678.9" r="1.95" fill="url(#sg)" opacity="0.40"/><circle cx="423.8" cy="682.7" r="2.10" fill="url(#sg)" opacity="0.49"/><circle cx="603.8" cy="661.1" r="2.10" fill="url(#sg)" opacity="0.49"/><circle cx="604.4" cy="654.2" r="1.95" fill="url(#sg)" opacity="0.40"/><circle cx="577.8" cy="664.4" r="1.95" fill="url(#sg)" opacity="0.40"/><circle cx="573.3" cy="672.9" r="1.95" fill="url(#sg)" opacity="0.40"/><circle cx="579.6" cy="678.0" r="1.95" fill="url(#sg)" opacity="0.40"/><circle cx="516.0" cy="686.7" r="2.03" fill="url(#sg)" opacity="0.45"/><circle cx="619.1" cy="688.9" r="1.95" fill="url(#sg)" opacity="0.40"/><circle cx="562.4" cy="691.3" r="1.95" fill="url(#sg)" opacity="0.40"/><circle cx="647.6" cy="708.2" r="2.31" fill="url(#sg)" opacity="0.63"/><circle cx="474.7" cy="713.6" r="2.53" fill="url(#sg)" opacity="0.77"/><circle cx="367.3" cy="695.3" r="2.03" fill="url(#sg)" opacity="0.45"/><circle cx="391.6" cy="701.6" r="1.95" fill="url(#sg)" opacity="0.40"/><circle cx="360.0" cy="674.0" r="2.17" fill="url(#sg)" opacity="0.54"/><circle cx="439.3" cy="617.8" r="1.95" fill="url(#sg)" opacity="0.40"/><circle cx="388.4" cy="574.4" r="1.95" fill="url(#sg)" opacity="0.40"/><circle cx="434.4" cy="574.0" r="1.95" fill="url(#sg)" opacity="0.40"/><circle cx="438.9" cy="538.2" r="1.95" fill="url(#sg)" opacity="0.40"/><circle cx="437.8" cy="540.7" r="1.88" fill="url(#sg)" opacity="0.36"/><circle cx="656.7" cy="674.9" r="1.95" fill="url(#sg)" opacity="0.40"/><circle cx="662.9" cy="619.6" r="1.88" fill="url(#sg)" opacity="0.36"/><circle cx="495.6" cy="602.7" r="1.88" fill="url(#sg)" opacity="0.36"/><circle cx="523.6" cy="586.2" r="1.88" fill="url(#sg)" opacity="0.36"/><circle cx="636.7" cy="510.4" r="1.95" fill="url(#sg)" opacity="0.40"/><circle cx="576.2" cy="532.7" r="1.81" fill="url(#sg)" opacity="0.31"/><circle cx="596.0" cy="533.3" r="1.81" fill="url(#sg)" opacity="0.31"/><circle cx="712.9" cy="539.6" r="1.81" fill="url(#sg)" opacity="0.31"/><circle cx="703.3" cy="578.4" r="1.81" fill="url(#sg)" opacity="0.31"/><circle cx="616.0" cy="592.9" r="1.81" fill="url(#sg)" opacity="0.31"/><circle cx="631.1" cy="596.0" r="1.81" fill="url(#sg)" opacity="0.31"/><circle cx="397.8" cy="591.1" r="1.81" fill="url(#sg)" opacity="0.31"/><circle cx="402.2" cy="598.9" r="1.81" fill="url(#sg)" opacity="0.31"/><circle cx="361.1" cy="607.8" r="1.88" fill="url(#sg)" opacity="0.36"/><circle cx="432.2" cy="647.8" r="1.81" fill="url(#sg)" opacity="0.31"/><circle cx="467.8" cy="683.3" r="1.81" fill="url(#sg)" opacity="0.31"/><circle cx="525.6" cy="696.7" r="1.81" fill="url(#sg)" opacity="0.31"/><circle cx="598.9" cy="693.8" r="1.81" fill="url(#sg)" opacity="0.31"/><circle cx="666.7" cy="696.7" r="1.81" fill="url(#sg)" opacity="0.31"/><circle cx="438.9" cy="703.3" r="1.81" fill="url(#sg)" opacity="0.31"/><circle cx="456.7" cy="704.4" r="1.81" fill="url(#sg)" opacity="0.31"/><circle cx="716.7" cy="526.0" r="1.81" fill="url(#sg)" opacity="0.31"/><circle cx="847.1" cy="485.3" r="3.25" fill="url(#sg)" opacity="1.00"/><circle cx="847.1" cy="485.3" r="0.39" fill="#fff" opacity="0.7"/><circle cx="950.9" cy="489.3" r="2.89" fill="url(#sg)" opacity="1.00"/><circle cx="753.6" cy="505.1" r="2.39" fill="url(#sg)" opacity="0.68"/><circle cx="756.7" cy="516.0" r="3.25" fill="url(#sg)" opacity="1.00"/><circle cx="756.7" cy="516.0" r="0.39" fill="#fff" opacity="0.7"/><circle cx="790.9" cy="516.7" r="2.17" fill="url(#sg)" opacity="0.54"/><circle cx="823.6" cy="515.1" r="2.17" fill="url(#sg)" opacity="0.54"/><circle cx="908.7" cy="509.3" r="2.17" fill="url(#sg)" opacity="0.54"/><circle cx="739.8" cy="529.1" r="2.24" fill="url(#sg)" opacity="0.59"/><circle cx="740.4" cy="534.4" r="1.95" fill="url(#sg)" opacity="0.40"/><circle cx="810.9" cy="525.1" r="2.03" fill="url(#sg)" opacity="0.45"/><circle cx="906.9" cy="532.9" r="2.03" fill="url(#sg)" opacity="0.45"/><circle cx="905.8" cy="545.1" r="2.03" fill="url(#sg)" opacity="0.45"/><circle cx="886.2" cy="546.0" r="1.95" fill="url(#sg)" opacity="0.40"/><circle cx="801.6" cy="548.0" r="2.10" fill="url(#sg)" opacity="0.49"/><circle cx="772.7" cy="557.8" r="2.10" fill="url(#sg)" opacity="0.49"/><circle cx="820.7" cy="567.6" r="3.25" fill="url(#sg)" opacity="1.00"/><circle cx="820.7" cy="567.6" r="0.39" fill="#fff" opacity="0.7"/><circle cx="831.3" cy="577.1" r="2.10" fill="url(#sg)" opacity="0.49"/><circle cx="877.3" cy="577.1" r="2.89" fill="url(#sg)" opacity="1.00"/><circle cx="786.7" cy="585.6" r="2.03" fill="url(#sg)" opacity="0.45"/><circle cx="774.0" cy="577.3" r="1.95" fill="url(#sg)" opacity="0.40"/><circle cx="927.6" cy="596.7" r="2.10" fill="url(#sg)" opacity="0.49"/><circle cx="981.1" cy="593.8" r="2.17" fill="url(#sg)" opacity="0.54"/><circle cx="986.0" cy="583.6" r="2.10" fill="url(#sg)" opacity="0.49"/><circle cx="970.9" cy="563.6" r="1.95" fill="url(#sg)" opacity="0.40"/><circle cx="976.9" cy="524.7" r="1.95" fill="url(#sg)" opacity="0.40"/><circle cx="991.3" cy="532.2" r="1.95" fill="url(#sg)" opacity="0.40"/><circle cx="965.1" cy="516.9" r="1.95" fill="url(#sg)" opacity="0.40"/><circle cx="891.8" cy="605.1" r="2.24" fill="url(#sg)" opacity="0.59"/><circle cx="895.6" cy="606.4" r="2.24" fill="url(#sg)" opacity="0.59"/><circle cx="896.0" cy="610.0" r="1.95" fill="url(#sg)" opacity="0.40"/><circle cx="861.1" cy="614.0" r="2.24" fill="url(#sg)" opacity="0.59"/><circle cx="732.9" cy="602.9" r="2.10" fill="url(#sg)" opacity="0.49"/><circle cx="731.6" cy="498.9" r="2.10" fill="url(#sg)" opacity="0.49"/><circle cx="740.7" cy="496.0" r="1.95" fill="url(#sg)" opacity="0.40"/><circle cx="740.4" cy="502.0" r="1.95" fill="url(#sg)" opacity="0.40"/><circle cx="937.8" cy="632.0" r="2.17" fill="url(#sg)" opacity="0.54"/><circle cx="955.8" cy="632.9" r="2.03" fill="url(#sg)" opacity="0.45"/><circle cx="999.8" cy="633.6" r="2.10" fill="url(#sg)" opacity="0.49"/><circle cx="918.4" cy="641.6" r="2.24" fill="url(#sg)" opacity="0.59"/><circle cx="830.7" cy="640.2" r="2.10" fill="url(#sg)" opacity="0.49"/><circle cx="798.2" cy="646.7" r="2.17" fill="url(#sg)" opacity="0.54"/><circle cx="939.1" cy="655.1" r="2.10" fill="url(#sg)" opacity="0.49"/><circle cx="946.9" cy="661.3" r="2.24" fill="url(#sg)" opacity="0.59"/><circle cx="954.4" cy="660.9" r="1.95" fill="url(#sg)" opacity="0.40"/><circle cx="874.9" cy="659.8" r="2.10" fill="url(#sg)" opacity="0.49"/><circle cx="928.7" cy="667.6" r="3.61" fill="url(#sg)" opacity="1.00"/><circle cx="928.7" cy="667.6" r="0.56" fill="#fff" opacity="0.7"/><circle cx="775.6" cy="666.4" r="2.31" fill="url(#sg)" opacity="0.63"/><circle cx="783.8" cy="670.7" r="2.03" fill="url(#sg)" opacity="0.45"/><circle cx="930.7" cy="684.4" r="2.10" fill="url(#sg)" opacity="0.49"/><circle cx="731.8" cy="692.0" r="2.17" fill="url(#sg)" opacity="0.54"/><circle cx="837.6" cy="696.9" r="2.24" fill="url(#sg)" opacity="0.59"/><circle cx="890.0" cy="700.7" r="2.10" fill="url(#sg)" opacity="0.49"/><circle cx="916.0" cy="700.9" r="2.10" fill="url(#sg)" opacity="0.49"/><circle cx="928.2" cy="708.4" r="2.17" fill="url(#sg)" opacity="0.54"/><circle cx="970.4" cy="698.0" r="2.60" fill="url(#sg)" opacity="0.82"/><circle cx="985.3" cy="700.7" r="2.75" fill="url(#sg)" opacity="0.91"/><circle cx="1009.3" cy="700.2" r="2.60" fill="url(#sg)" opacity="0.82"/><circle cx="1053.8" cy="692.7" r="2.24" fill="url(#sg)" opacity="0.59"/><circle cx="1059.8" cy="693.1" r="2.53" fill="url(#sg)" opacity="0.77"/><circle cx="768.2" cy="708.0" r="2.03" fill="url(#sg)" opacity="0.45"/><circle cx="1023.1" cy="668.4" r="1.95" fill="url(#sg)" opacity="0.40"/><circle cx="756.4" cy="656.0" r="1.95" fill="url(#sg)" opacity="0.40"/><circle cx="778.0" cy="622.9" r="1.95" fill="url(#sg)" opacity="0.40"/><circle cx="984.4" cy="708.9" r="1.95" fill="url(#sg)" opacity="0.40"/><circle cx="1039.3" cy="581.1" r="2.53" fill="url(#sg)" opacity="0.77"/><circle cx="1022.7" cy="558.9" r="2.03" fill="url(#sg)" opacity="0.45"/><circle cx="1028.4" cy="486.7" r="2.03" fill="url(#sg)" opacity="0.45"/><circle cx="835.6" cy="485.6" r="1.81" fill="url(#sg)" opacity="0.31"/><circle cx="931.1" cy="495.1" r="1.81" fill="url(#sg)" opacity="0.31"/><circle cx="940.0" cy="495.6" r="1.81" fill="url(#sg)" opacity="0.31"/><circle cx="857.8" cy="497.8" r="1.81" fill="url(#sg)" opacity="0.31"/><circle cx="842.2" cy="525.6" r="1.81" fill="url(#sg)" opacity="0.31"/><circle cx="883.3" cy="522.2" r="1.81" fill="url(#sg)" opacity="0.31"/><circle cx="925.6" cy="528.9" r="1.81" fill="url(#sg)" opacity="0.31"/><circle cx="804.4" cy="538.9" r="1.81" fill="url(#sg)" opacity="0.31"/><circle cx="747.8" cy="562.7" r="1.81" fill="url(#sg)" opacity="0.31"/><circle cx="805.6" cy="563.8" r="1.81" fill="url(#sg)" opacity="0.31"/><circle cx="728.9" cy="586.2" r="1.81" fill="url(#sg)" opacity="0.31"/><circle cx="752.9" cy="606.2" r="1.81" fill="url(#sg)" opacity="0.31"/><circle cx="750.0" cy="608.4" r="1.81" fill="url(#sg)" opacity="0.31"/><circle cx="731.6" cy="622.2" r="1.81" fill="url(#sg)" opacity="0.31"/><circle cx="750.0" cy="630.7" r="1.81" fill="url(#sg)" opacity="0.31"/><circle cx="873.8" cy="624.9" r="1.81" fill="url(#sg)" opacity="0.31"/><circle cx="865.6" cy="645.6" r="1.81" fill="url(#sg)" opacity="0.31"/><circle cx="791.1" cy="650.0" r="1.81" fill="url(#sg)" opacity="0.31"/><circle cx="915.6" cy="659.6" r="1.81" fill="url(#sg)" opacity="0.31"/><circle cx="876.7" cy="685.6" r="1.81" fill="url(#sg)" opacity="0.31"/><circle cx="821.1" cy="686.7" r="1.81" fill="url(#sg)" opacity="0.31"/><circle cx="806.7" cy="702.2" r="1.81" fill="url(#sg)" opacity="0.31"/><circle cx="878.9" cy="701.8" r="1.81" fill="url(#sg)" opacity="0.31"/><circle cx="991.1" cy="679.3" r="1.81" fill="url(#sg)" opacity="0.31"/><circle cx="1001.1" cy="647.1" r="1.81" fill="url(#sg)" opacity="0.31"/><circle cx="1037.8" cy="640.0" r="1.81" fill="url(#sg)" opacity="0.31"/><circle cx="345.2" cy="108.0" r="1.04" fill="url(#sg)" opacity="0.25"/><circle cx="571.3" cy="261.8" r="1.25" fill="url(#sg)" opacity="0.11"/><circle cx="40.0" cy="310.5" r="1.05" fill="url(#sg)" opacity="0.11"/><circle cx="452.5" cy="592.0" r="1.11" fill="url(#sg)" opacity="0.13"/><circle cx="668.8" cy="678.6" r="1.20" fill="url(#sg)" opacity="0.23"/><circle cx="1040.7" cy="33.4" r="1.14" fill="url(#sg)" opacity="0.29"/><circle cx="153.8" cy="84.3" r="1.41" fill="url(#sg)" opacity="0.17"/><circle cx="192.7" cy="416.4" r="1.19" fill="url(#sg)" opacity="0.24"/><circle cx="583.9" cy="45.0" r="1.10" fill="url(#sg)" opacity="0.11"/><circle cx="725.3" cy="306.2" r="1.29" fill="url(#sg)" opacity="0.17"/><circle cx="483.1" cy="214.6" r="1.35" fill="url(#sg)" opacity="0.28"/><circle cx="260.2" cy="411.3" r="1.44" fill="url(#sg)" opacity="0.22"/><circle cx="777.6" cy="206.2" r="1.06" fill="url(#sg)" opacity="0.32"/><circle cx="445.7" cy="542.1" r="1.24" fill="url(#sg)" opacity="0.13"/><circle cx="41.8" cy="478.4" r="1.29" fill="url(#sg)" opacity="0.27"/><circle cx="933.3" cy="224.6" r="1.30" fill="url(#sg)" opacity="0.26"/><circle cx="618.2" cy="326.6" r="1.47" fill="url(#sg)" opacity="0.29"/><circle cx="505.4" cy="475.5" r="1.35" fill="url(#sg)" opacity="0.11"/><circle cx="689.8" cy="711.1" r="1.14" fill="url(#sg)" opacity="0.28"/><circle cx="411.3" cy="478.8" r="1.23" fill="url(#sg)" opacity="0.10"/><circle cx="179.1" cy="83.8" r="1.38" fill="url(#sg)" opacity="0.11"/><circle cx="137.9" cy="177.3" r="1.44" fill="url(#sg)" opacity="0.19"/><circle cx="85.9" cy="321.6" r="1.44" fill="url(#sg)" opacity="0.22"/><circle cx="873.4" cy="618.6" r="1.21" fill="url(#sg)" opacity="0.16"/><circle cx="382.5" cy="633.1" r="1.08" fill="url(#sg)" opacity="0.32"/><circle cx="187.8" cy="166.1" r="1.24" fill="url(#sg)" opacity="0.15"/><circle cx="628.0" cy="188.1" r="1.21" fill="url(#sg)" opacity="0.10"/><circle cx="393.6" cy="405.5" r="1.35" fill="url(#sg)" opacity="0.31"/><circle cx="549.5" cy="442.2" r="1.03" fill="url(#sg)" opacity="0.25"/><circle cx="958.9" cy="558.5" r="1.40" fill="url(#sg)" opacity="0.30"/><circle cx="418.3" cy="285.7" r="1.32" fill="url(#sg)" opacity="0.12"/><circle cx="66.4" cy="48.2" r="1.08" fill="url(#sg)" opacity="0.14"/><circle cx="362.5" cy="37.6" r="1.08" fill="url(#sg)" opacity="0.10"/><circle cx="108.2" cy="260.3" r="1.44" fill="url(#sg)" opacity="0.10"/><circle cx="654.6" cy="106.4" r="1.17" fill="url(#sg)" opacity="0.15"/><circle cx="388.2" cy="88.0" r="1.50" fill="url(#sg)" opacity="0.29"/><circle cx="496.7" cy="346.4" r="1.05" fill="url(#sg)" opacity="0.12"/><circle cx="365.2" cy="189.6" r="1.08" fill="url(#sg)" opacity="0.29"/><circle cx="24.6" cy="680.9" r="1.07" fill="url(#sg)" opacity="0.22"/><circle cx="579.0" cy="19.4" r="1.49" fill="url(#sg)" opacity="0.22"/><circle cx="920.3" cy="498.5" r="1.18" fill="url(#sg)" opacity="0.16"/><circle cx="178.1" cy="552.7" r="1.39" fill="url(#sg)" opacity="0.22"/><circle cx="351.4" cy="159.7" r="1.49" fill="url(#sg)" opacity="0.28"/><circle cx="908.9" cy="577.2" r="1.37" fill="url(#sg)" opacity="0.28"/><circle cx="241.7" cy="370.6" r="1.01" fill="url(#sg)" opacity="0.18"/><circle cx="29.8" cy="200.1" r="1.35" fill="url(#sg)" opacity="0.16"/><circle cx="1019.6" cy="320.2" r="1.49" fill="url(#sg)" opacity="0.31"/><circle cx="1018.0" cy="261.1" r="1.11" fill="url(#sg)" opacity="0.15"/><circle cx="209.7" cy="146.3" r="1.45" fill="url(#sg)" opacity="0.24"/><circle cx="895.9" cy="343.3" r="1.40" fill="url(#sg)" opacity="0.25"/><circle cx="90.4" cy="473.0" r="1.39" fill="url(#sg)" opacity="0.30"/><circle cx="799.6" cy="342.3" r="1.39" fill="url(#sg)" opacity="0.14"/><circle cx="354.5" cy="573.4" r="1.20" fill="url(#sg)" opacity="0.32"/><circle cx="427.9" cy="677.9" r="1.09" fill="url(#sg)" opacity="0.26"/><circle cx="135.4" cy="108.2" r="1.40" fill="url(#sg)" opacity="0.30"/><circle cx="155.8" cy="591.8" r="1.33" fill="url(#sg)" opacity="0.32"/><circle cx="373.5" cy="392.8" r="1.01" fill="url(#sg)" opacity="0.13"/><circle cx="1035.0" cy="465.2" r="1.47" fill="url(#sg)" opacity="0.22"/><circle cx="462.4" cy="624.2" r="1.11" fill="url(#sg)" opacity="0.29"/><circle cx="268.5" cy="209.8" r="1.29" fill="url(#sg)" opacity="0.15"/><circle cx="276.5" cy="300.0" r="1.46" fill="url(#sg)" opacity="0.13"/><circle cx="377.1" cy="328.0" r="1.45" fill="url(#sg)" opacity="0.23"/><circle cx="448.4" cy="657.1" r="1.27" fill="url(#sg)" opacity="0.21"/><circle cx="558.1" cy="13.4" r="1.09" fill="url(#sg)" opacity="0.20"/><circle cx="4.2" cy="572.2" r="1.24" fill="url(#sg)" opacity="0.14"/><circle cx="773.1" cy="398.4" r="1.26" fill="url(#sg)" opacity="0.17"/><circle cx="592.1" cy="561.5" r="1.28" fill="url(#sg)" opacity="0.12"/><circle cx="264.9" cy="198.3" r="1.25" fill="url(#sg)" opacity="0.27"/><circle cx="598.8" cy="544.2" r="1.22" fill="url(#sg)" opacity="0.31"/><circle cx="653.0" cy="362.0" r="1.35" fill="url(#sg)" opacity="0.21"/><circle cx="482.2" cy="381.8" r="1.47" fill="url(#sg)" opacity="0.21"/><circle cx="745.4" cy="627.6" r="1.13" fill="url(#sg)" opacity="0.31"/><circle cx="596.4" cy="675.4" r="1.07" fill="url(#sg)" opacity="0.29"/><circle cx="129.6" cy="316.6" r="1.12" fill="url(#sg)" opacity="0.11"/><circle cx="77.9" cy="479.3" r="1.45" fill="url(#sg)" opacity="0.28"/><circle cx="164.6" cy="512.7" r="1.07" fill="url(#sg)" opacity="0.25"/><circle cx="941.1" cy="692.8" r="1.48" fill="url(#sg)" opacity="0.15"/><circle cx="424.5" cy="348.9" r="1.42" fill="url(#sg)" opacity="0.32"/><circle cx="172.1" cy="309.0" r="1.17" fill="url(#sg)" opacity="0.21"/><circle cx="208.7" cy="228.1" r="1.01" fill="url(#sg)" opacity="0.26"/><circle cx="590.6" cy="315.4" r="1.17" fill="url(#sg)" opacity="0.10"/><circle cx="665.1" cy="366.8" r="1.49" fill="url(#sg)" opacity="0.11"/><circle cx="840.4" cy="695.7" r="1.13" fill="url(#sg)" opacity="0.12"/><circle cx="42.2" cy="557.8" r="1.06" fill="url(#sg)" opacity="0.16"/><circle cx="450.1" cy="652.6" r="1.13" fill="url(#sg)" opacity="0.28"/><circle cx="159.2" cy="658.1" r="1.35" fill="url(#sg)" opacity="0.23"/><circle cx="95.4" cy="41.2" r="1.21" fill="url(#sg)" opacity="0.25"/><circle cx="77.2" cy="671.9" r="1.40" fill="url(#sg)" opacity="0.24"/><circle cx="89.3" cy="613.1" r="1.43" fill="url(#sg)" opacity="0.11"/><circle cx="483.7" cy="242.8" r="1.46" fill="url(#sg)" opacity="0.22"/><circle cx="285.5" cy="92.5" r="1.12" fill="url(#sg)" opacity="0.22"/><circle cx="116.7" cy="115.6" r="1.10" fill="url(#sg)" opacity="0.11"/><circle cx="332.6" cy="218.4" r="1.14" fill="url(#sg)" opacity="0.27"/><circle cx="533.1" cy="127.4" r="1.01" fill="url(#sg)" opacity="0.18"/><circle cx="267.0" cy="11.0" r="1.28" fill="url(#sg)" opacity="0.26"/><circle cx="202.0" cy="339.9" r="1.05" fill="url(#sg)" opacity="0.31"/><circle cx="873.0" cy="309.4" r="1.42" fill="url(#sg)" opacity="0.21"/><circle cx="419.0" cy="362.8" r="1.49" fill="url(#sg)" opacity="0.25"/><circle cx="365.3" cy="595.9" r="1.32" fill="url(#sg)" opacity="0.26"/><circle cx="431.4" cy="248.8" r="1.06" fill="url(#sg)" opacity="0.11"/><circle cx="75.4" cy="530.5" r="1.08" fill="url(#sg)" opacity="0.16"/><circle cx="90.1" cy="602.3" r="1.34" fill="url(#sg)" opacity="0.30"/><circle cx="300.5" cy="173.4" r="1.23" fill="url(#sg)" opacity="0.16"/><circle cx="167.9" cy="319.2" r="1.48" fill="url(#sg)" opacity="0.16"/><circle cx="1036.8" cy="391.7" r="1.48" fill="url(#sg)" opacity="0.15"/><circle cx="330.0" cy="255.3" r="1.19" fill="url(#sg)" opacity="0.10"/><circle cx="506.0" cy="360.0" r="1.25" fill="url(#sg)" opacity="0.14"/><circle cx="5.3" cy="189.1" r="1.20" fill="url(#sg)" opacity="0.12"/><circle cx="44.4" cy="16.1" r="1.12" fill="url(#sg)" opacity="0.17"/><circle cx="624.2" cy="378.9" r="1.33" fill="url(#sg)" opacity="0.27"/><circle cx="763.2" cy="629.4" r="1.16" fill="url(#sg)" opacity="0.19"/><circle cx="1049.7" cy="107.0" r="1.32" fill="url(#sg)" opacity="0.26"/><circle cx="46.7" cy="598.1" r="1.31" fill="url(#sg)" opacity="0.30"/><circle cx="782.3" cy="581.5" r="1.26" fill="url(#sg)" opacity="0.13"/><circle cx="537.7" cy="597.8" r="1.41" fill="url(#sg)" opacity="0.28"/><circle cx="622.6" cy="639.3" r="1.35" fill="url(#sg)" opacity="0.25"/><circle cx="245.1" cy="22.3" r="1.18" fill="url(#sg)" opacity="0.13"/><circle cx="111.8" cy="598.4" r="1.31" fill="url(#sg)" opacity="0.22"/><circle cx="667.6" cy="487.4" r="1.00" fill="url(#sg)" opacity="0.21"/><circle cx="850.3" cy="535.8" r="1.27" fill="url(#sg)" opacity="0.21"/><circle cx="702.8" cy="47.3" r="1.13" fill="url(#sg)" opacity="0.27"/><circle cx="79.4" cy="190.1" r="1.10" fill="url(#sg)" opacity="0.26"/><circle cx="788.7" cy="698.6" r="1.19" fill="url(#sg)" opacity="0.21"/><circle cx="510.6" cy="489.5" r="1.31" fill="url(#sg)" opacity="0.27"/><circle cx="685.2" cy="55.5" r="1.13" fill="url(#sg)" opacity="0.13"/><circle cx="792.3" cy="218.0" r="1.01" fill="url(#sg)" opacity="0.23"/><circle cx="64.7" cy="192.4" r="1.35" fill="url(#sg)" opacity="0.25"/><circle cx="720.3" cy="208.3" r="1.23" fill="url(#sg)" opacity="0.22"/><circle cx="497.1" cy="84.8" r="1.10" fill="url(#sg)" opacity="0.30"/><circle cx="1042.7" cy="670.4" r="1.23" fill="url(#sg)" opacity="0.10"/><circle cx="874.0" cy="693.2" r="1.13" fill="url(#sg)" opacity="0.20"/><circle cx="223.7" cy="677.0" r="1.29" fill="url(#sg)" opacity="0.15"/><circle cx="151.1" cy="375.2" r="1.07" fill="url(#sg)" opacity="0.31"/><circle cx="874.4" cy="364.3" r="1.35" fill="url(#sg)" opacity="0.30"/><circle cx="246.7" cy="642.8" r="1.01" fill="url(#sg)" opacity="0.21"/><circle cx="3.8" cy="352.1" r="1.15" fill="url(#sg)" opacity="0.20"/><circle cx="150.0" cy="246.3" r="1.42" fill="url(#sg)" opacity="0.17"/><circle cx="1.9" cy="537.5" r="1.06" fill="url(#sg)" opacity="0.29"/><circle cx="987.5" cy="510.5" r="1.14" fill="url(#sg)" opacity="0.30"/><circle cx="396.8" cy="281.3" r="1.29" fill="url(#sg)" opacity="0.32"/><circle cx="384.5" cy="306.5" r="1.02" fill="url(#sg)" opacity="0.16"/><circle cx="108.4" cy="597.6" r="1.47" fill="url(#sg)" opacity="0.16"/><circle cx="265.8" cy="190.3" r="1.09" fill="url(#sg)" opacity="0.21"/><circle cx="398.0" cy="684.6" r="1.41" fill="url(#sg)" opacity="0.30"/><circle cx="672.5" cy="654.0" r="1.27" fill="url(#sg)" opacity="0.31"/><circle cx="767.1" cy="35.4" r="1.23" fill="url(#sg)" opacity="0.26"/><circle cx="802.3" cy="461.5" r="1.02" fill="url(#sg)" opacity="0.16"/><circle cx="987.9" cy="91.2" r="1.17" fill="url(#sg)" opacity="0.20"/><circle cx="317.4" cy="529.1" r="1.13" fill="url(#sg)" opacity="0.32"/><circle cx="699.3" cy="215.4" r="1.20" fill="url(#sg)" opacity="0.22"/><circle cx="178.4" cy="115.7" r="1.45" fill="url(#sg)" opacity="0.14"/><circle cx="529.9" cy="157.5" r="1.50" fill="url(#sg)" opacity="0.30"/><circle cx="479.7" cy="100.0" r="1.05" fill="url(#sg)" opacity="0.14"/><circle cx="364.5" cy="65.2" r="1.13" fill="url(#sg)" opacity="0.15"/><circle cx="607.2" cy="635.3" r="1.21" fill="url(#sg)" opacity="0.27"/><circle cx="441.2" cy="375.3" r="1.17" fill="url(#sg)" opacity="0.18"/><circle cx="66.2" cy="198.7" r="1.06" fill="url(#sg)" opacity="0.32"/><circle cx="536.6" cy="450.8" r="1.11" fill="url(#sg)" opacity="0.29"/><circle cx="288.9" cy="177.9" r="1.22" fill="url(#sg)" opacity="0.19"/><circle cx="1016.9" cy="607.7" r="1.01" fill="url(#sg)" opacity="0.30"/><circle cx="34.4" cy="508.0" r="1.24" fill="url(#sg)" opacity="0.30"/><circle cx="625.9" cy="0.1" r="1.46" fill="url(#sg)" opacity="0.19"/><circle cx="880.1" cy="612.5" r="1.12" fill="url(#sg)" opacity="0.32"/><circle cx="116.2" cy="110.5" r="1.34" fill="url(#sg)" opacity="0.22"/><circle cx="1003.6" cy="516.8" r="1.38" fill="url(#sg)" opacity="0.24"/><circle cx="487.5" cy="394.9" r="1.39" fill="url(#sg)" opacity="0.11"/><circle cx="247.9" cy="658.7" r="1.15" fill="url(#sg)" opacity="0.24"/><circle cx="136.4" cy="180.3" r="1.35" fill="url(#sg)" opacity="0.24"/><circle cx="119.5" cy="50.4" r="1.29" fill="url(#sg)" opacity="0.22"/><circle cx="413.7" cy="160.1" r="1.01" fill="url(#sg)" opacity="0.23"/><circle cx="321.4" cy="329.9" r="1.32" fill="url(#sg)" opacity="0.32"/><circle cx="942.1" cy="340.3" r="1.12" fill="url(#sg)" opacity="0.15"/><circle cx="1024.0" cy="504.5" r="1.01" fill="url(#sg)" opacity="0.17"/><circle cx="531.2" cy="482.9" r="1.13" fill="url(#sg)" opacity="0.19"/><circle cx="711.4" cy="662.4" r="1.02" fill="url(#sg)" opacity="0.15"/><circle cx="360.4" cy="301.1" r="1.10" fill="url(#sg)" opacity="0.25"/><circle cx="849.7" cy="529.2" r="1.10" fill="url(#sg)" opacity="0.21"/><circle cx="1033.9" cy="223.2" r="1.12" fill="url(#sg)" opacity="0.28"/><circle cx="236.1" cy="544.5" r="1.48" fill="url(#sg)" opacity="0.16"/><circle cx="528.5" cy="134.1" r="1.21" fill="url(#sg)" opacity="0.15"/><circle cx="709.2" cy="679.3" r="1.20" fill="url(#sg)" opacity="0.13"/><circle cx="227.0" cy="697.5" r="1.03" fill="url(#sg)" opacity="0.13"/><circle cx="64.1" cy="281.6" r="1.44" fill="url(#sg)" opacity="0.30"/><circle cx="781.1" cy="714.2" r="1.16" fill="url(#sg)" opacity="0.31"/><circle cx="197.8" cy="670.1" r="1.02" fill="url(#sg)" opacity="0.27"/><circle cx="708.3" cy="271.1" r="1.17" fill="url(#sg)" opacity="0.18"/><circle cx="180.4" cy="2.1" r="1.18" fill="url(#sg)" opacity="0.16"/><circle cx="1018.6" cy="88.6" r="1.10" fill="url(#sg)" opacity="0.32"/><circle cx="380.2" cy="588.2" r="1.22" fill="url(#sg)" opacity="0.28"/><circle cx="52.5" cy="339.0" r="1.46" fill="url(#sg)" opacity="0.18"/><circle cx="205.8" cy="260.8" r="1.02" fill="url(#sg)" opacity="0.30"/><circle cx="437.9" cy="581.3" r="1.02" fill="url(#sg)" opacity="0.27"/><circle cx="37.2" cy="44.8" r="1.13" fill="url(#sg)" opacity="0.31"/><circle cx="796.6" cy="643.4" r="1.14" fill="url(#sg)" opacity="0.17"/><circle cx="1020.9" cy="441.8" r="1.36" fill="url(#sg)" opacity="0.16"/><circle cx="337.4" cy="197.4" r="1.38" fill="url(#sg)" opacity="0.10"/><circle cx="976.9" cy="453.9" r="1.01" fill="url(#sg)" opacity="0.31"/><circle cx="249.3" cy="340.2" r="1.48" fill="url(#sg)" opacity="0.32"/><circle cx="412.0" cy="179.7" r="1.25" fill="url(#sg)" opacity="0.20"/><circle cx="989.4" cy="131.0" r="1.37" fill="url(#sg)" opacity="0.28"/><circle cx="877.1" cy="553.3" r="1.16" fill="url(#sg)" opacity="0.24"/><circle cx="340.6" cy="259.1" r="1.04" fill="url(#sg)" opacity="0.28"/><circle cx="210.3" cy="539.1" r="1.03" fill="url(#sg)" opacity="0.15"/><circle cx="36.1" cy="395.7" r="1.49" fill="url(#sg)" opacity="0.17"/><circle cx="941.8" cy="707.3" r="1.04" fill="url(#sg)" opacity="0.16"/><circle cx="102.8" cy="356.9" r="1.22" fill="url(#sg)" opacity="0.26"/><circle cx="249.7" cy="298.5" r="1.34" fill="url(#sg)" opacity="0.24"/><circle cx="797.3" cy="606.4" r="1.06" fill="url(#sg)" opacity="0.25"/><circle cx="896.4" cy="210.3" r="1.19" fill="url(#sg)" opacity="0.23"/><circle cx="786.8" cy="142.6" r="1.12" fill="url(#sg)" opacity="0.15"/><circle cx="163.4" cy="633.1" r="1.16" fill="url(#sg)" opacity="0.23"/><circle cx="422.2" cy="710.6" r="1.12" fill="url(#sg)" opacity="0.21"/><circle cx="861.8" cy="467.8" r="1.05" fill="url(#sg)" opacity="0.32"/><circle cx="506.1" cy="586.5" r="1.46" fill="url(#sg)" opacity="0.29"/><circle cx="43.0" cy="210.3" r="1.09" fill="url(#sg)" opacity="0.12"/><circle cx="1037.2" cy="417.6" r="1.19" fill="url(#sg)" opacity="0.31"/><circle cx="923.3" cy="321.6" r="1.39" fill="url(#sg)" opacity="0.16"/><circle cx="1008.1" cy="75.7" r="1.31" fill="url(#sg)" opacity="0.23"/><circle cx="232.0" cy="264.0" r="1.10" fill="url(#sg)" opacity="0.13"/><circle cx="271.7" cy="429.2" r="1.10" fill="url(#sg)" opacity="0.25"/><circle cx="12.1" cy="234.3" r="1.09" fill="url(#sg)" opacity="0.25"/><circle cx="332.8" cy="145.6" r="1.27" fill="url(#sg)" opacity="0.28"/><circle cx="67.4" cy="72.6" r="1.28" fill="url(#sg)" opacity="0.19"/><circle cx="681.4" cy="65.3" r="1.35" fill="url(#sg)" opacity="0.13"/><circle cx="436.8" cy="202.8" r="1.48" fill="url(#sg)" opacity="0.17"/><circle cx="333.0" cy="405.6" r="1.21" fill="url(#sg)" opacity="0.18"/><circle cx="921.3" cy="713.6" r="1.10" fill="url(#sg)" opacity="0.18"/><circle cx="776.1" cy="145.8" r="1.45" fill="url(#sg)" opacity="0.10"/><circle cx="451.7" cy="587.4" r="1.44" fill="url(#sg)" opacity="0.19"/><circle cx="491.3" cy="116.4" r="1.28" fill="url(#sg)" opacity="0.10"/><circle cx="683.0" cy="651.4" r="1.31" fill="url(#sg)" opacity="0.12"/><circle cx="395.3" cy="361.2" r="1.14" fill="url(#sg)" opacity="0.13"/><circle cx="555.6" cy="662.7" r="1.25" fill="url(#sg)" opacity="0.12"/><circle cx="857.9" cy="692.3" r="1.06" fill="url(#sg)" opacity="0.14"/><circle cx="1005.3" cy="698.5" r="1.03" fill="url(#sg)" opacity="0.21"/><circle cx="987.3" cy="277.7" r="1.31" fill="url(#sg)" opacity="0.30"/><circle cx="879.0" cy="114.8" r="1.11" fill="url(#sg)" opacity="0.28"/><circle cx="431.2" cy="606.0" r="1.09" fill="url(#sg)" opacity="0.29"/><circle cx="232.5" cy="286.2" r="1.19" fill="url(#sg)" opacity="0.22"/><circle cx="131.2" cy="176.9" r="1.45" fill="url(#sg)" opacity="0.26"/><circle cx="43.8" cy="402.6" r="1.02" fill="url(#sg)" opacity="0.27"/><circle cx="893.5" cy="84.3" r="1.28" fill="url(#sg)" opacity="0.23"/><circle cx="668.4" cy="219.2" r="1.29" fill="url(#sg)" opacity="0.19"/><circle cx="453.8" cy="471.7" r="1.22" fill="url(#sg)" opacity="0.20"/><circle cx="24.9" cy="443.1" r="1.12" fill="url(#sg)" opacity="0.21"/><circle cx="814.0" cy="558.5" r="1.09" fill="url(#sg)" opacity="0.20"/><circle cx="504.5" cy="76.7" r="1.22" fill="url(#sg)" opacity="0.13"/><circle cx="97.8" cy="316.4" r="1.02" fill="url(#sg)" opacity="0.21"/><circle cx="678.4" cy="58.9" r="1.39" fill="url(#sg)" opacity="0.26"/><circle cx="545.2" cy="38.9" r="1.19" fill="url(#sg)" opacity="0.21"/><circle cx="1013.6" cy="97.5" r="1.50" fill="url(#sg)" opacity="0.29"/><circle cx="780.4" cy="583.5" r="1.49" fill="url(#sg)" opacity="0.14"/><circle cx="524.3" cy="685.0" r="1.08" fill="url(#sg)" opacity="0.31"/><circle cx="840.4" cy="666.3" r="1.18" fill="url(#sg)" opacity="0.11"/><circle cx="806.1" cy="113.7" r="1.14" fill="url(#sg)" opacity="0.30"/><circle cx="869.5" cy="102.8" r="1.46" fill="url(#sg)" opacity="0.21"/><circle cx="222.1" cy="188.2" r="1.16" fill="url(#sg)" opacity="0.21"/><circle cx="39.3" cy="130.4" r="1.47" fill="url(#sg)" opacity="0.13"/><circle cx="724.5" cy="641.1" r="1.39" fill="url(#sg)" opacity="0.14"/><circle cx="122.7" cy="380.0" r="1.18" fill="url(#sg)" opacity="0.24"/><circle cx="930.6" cy="397.5" r="1.44" fill="url(#sg)" opacity="0.23"/><circle cx="111.5" cy="711.0" r="1.20" fill="url(#sg)" opacity="0.24"/><circle cx="850.3" cy="189.6" r="1.29" fill="url(#sg)" opacity="0.32"/><circle cx="384.0" cy="547.5" r="1.09" fill="url(#sg)" opacity="0.20"/><circle cx="792.7" cy="34.6" r="1.13" fill="url(#sg)" opacity="0.28"/><circle cx="681.4" cy="704.6" r="1.33" fill="url(#sg)" opacity="0.23"/><circle cx="333.3" cy="1.3" r="1.07" fill="url(#sg)" opacity="0.11"/><circle cx="656.7" cy="309.5" r="1.45" fill="url(#sg)" opacity="0.21"/><circle cx="140.7" cy="162.7" r="1.01" fill="url(#sg)" opacity="0.25"/><circle cx="2.8" cy="254.2" r="1.18" fill="url(#sg)" opacity="0.12"/><circle cx="239.1" cy="417.9" r="1.10" fill="url(#sg)" opacity="0.23"/><circle cx="665.1" cy="340.0" r="1.47" fill="url(#sg)" opacity="0.13"/><circle cx="259.7" cy="106.9" r="1.32" fill="url(#sg)" opacity="0.12"/><circle cx="928.8" cy="560.0" r="1.13" fill="url(#sg)" opacity="0.19"/><circle cx="12.3" cy="461.8" r="1.18" fill="url(#sg)" opacity="0.23"/><circle cx="688.2" cy="317.7" r="1.37" fill="url(#sg)" opacity="0.31"/><circle cx="264.9" cy="646.9" r="1.27" fill="url(#sg)" opacity="0.11"/><circle cx="432.8" cy="170.2" r="1.39" fill="url(#sg)" opacity="0.11"/><circle cx="13.2" cy="394.5" r="1.07" fill="url(#sg)" opacity="0.31"/><circle cx="212.7" cy="435.4" r="1.32" fill="url(#sg)" opacity="0.21"/><circle cx="867.1" cy="125.0" r="1.15" fill="url(#sg)" opacity="0.17"/><circle cx="51.7" cy="636.8" r="1.36" fill="url(#sg)" opacity="0.28"/><circle cx="6.8" cy="604.6" r="1.23" fill="url(#sg)" opacity="0.27"/><circle cx="790.7" cy="324.0" r="1.05" fill="url(#sg)" opacity="0.15"/><circle cx="247.6" cy="27.8" r="1.37" fill="url(#sg)" opacity="0.17"/><circle cx="741.0" cy="605.3" r="1.13" fill="url(#sg)" opacity="0.26"/><circle cx="590.3" cy="312.2" r="1.26" fill="url(#sg)" opacity="0.28"/><circle cx="282.8" cy="459.7" r="1.11" fill="url(#sg)" opacity="0.32"/><circle cx="938.1" cy="10.9" r="1.12" fill="url(#sg)" opacity="0.16"/><circle cx="793.0" cy="676.4" r="1.16" fill="url(#sg)" opacity="0.27"/><circle cx="938.3" cy="235.2" r="1.45" fill="url(#sg)" opacity="0.15"/><circle cx="672.3" cy="496.1" r="1.49" fill="url(#sg)" opacity="0.25"/><circle cx="500.5" cy="601.2" r="1.43" fill="url(#sg)" opacity="0.26"/><circle cx="466.1" cy="518.8" r="1.15" fill="url(#sg)" opacity="0.23"/><circle cx="226.0" cy="445.8" r="1.46" fill="url(#sg)" opacity="0.12"/><circle cx="154.1" cy="19.3" r="1.46" fill="url(#sg)" opacity="0.12"/><circle cx="367.6" cy="101.6" r="1.02" fill="url(#sg)" opacity="0.10"/><circle cx="738.3" cy="453.9" r="1.37" fill="url(#sg)" opacity="0.26"/><circle cx="70.1" cy="422.8" r="1.41" fill="url(#sg)" opacity="0.18"/><circle cx="873.7" cy="638.2" r="1.43" fill="url(#sg)" opacity="0.11"/><circle cx="974.8" cy="676.1" r="1.10" fill="url(#sg)" opacity="0.12"/><circle cx="119.4" cy="24.6" r="1.41" fill="url(#sg)" opacity="0.29"/><circle cx="676.0" cy="590.7" r="1.14" fill="url(#sg)" opacity="0.24"/><circle cx="106.5" cy="70.1" r="1.10" fill="url(#sg)" opacity="0.27"/><circle cx="340.2" cy="303.4" r="1.13" fill="url(#sg)" opacity="0.10"/><circle cx="301.2" cy="512.5" r="1.16" fill="url(#sg)" opacity="0.18"/><circle cx="1027.6" cy="360.7" r="1.31" fill="url(#sg)" opacity="0.29"/><circle cx="33.0" cy="295.7" r="1.39" fill="url(#sg)" opacity="0.20"/><circle cx="369.7" cy="504.5" r="1.11" fill="url(#sg)" opacity="0.22"/><circle cx="919.1" cy="65.1" r="1.09" fill="url(#sg)" opacity="0.28"/><circle cx="1.4" cy="144.7" r="1.49" fill="url(#sg)" opacity="0.27"/><circle cx="4.6" cy="351.4" r="1.40" fill="url(#sg)" opacity="0.21"/><circle cx="196.7" cy="354.1" r="1.42" fill="url(#sg)" opacity="0.18"/><circle cx="277.8" cy="675.8" r="1.11" fill="url(#sg)" opacity="0.16"/><circle cx="745.6" cy="356.8" r="1.32" fill="url(#sg)" opacity="0.12"/><circle cx="86.2" cy="564.1" r="1.39" fill="url(#sg)" opacity="0.26"/><circle cx="669.4" cy="254.6" r="1.20" fill="url(#sg)" opacity="0.19"/><circle cx="949.2" cy="61.7" r="1.01" fill="url(#sg)" opacity="0.30"/><circle cx="219.7" cy="188.4" r="1.25" fill="url(#sg)" opacity="0.30"/><circle cx="404.3" cy="632.9" r="1.23" fill="url(#sg)" opacity="0.15"/><circle cx="566.6" cy="540.2" r="1.32" fill="url(#sg)" opacity="0.27"/><circle cx="371.5" cy="233.9" r="1.42" fill="url(#sg)" opacity="0.13"/><circle cx="705.8" cy="531.3" r="1.22" fill="url(#sg)" opacity="0.14"/><circle cx="824.5" cy="414.7" r="1.23" fill="url(#sg)" opacity="0.13"/><circle cx="943.5" cy="170.4" r="1.15" fill="url(#sg)" opacity="0.14"/><circle cx="749.6" cy="604.1" r="1.08" fill="url(#sg)" opacity="0.13"/><circle cx="263.9" cy="233.8" r="1.08" fill="url(#sg)" opacity="0.22"/><circle cx="349.7" cy="135.5" r="1.36" fill="url(#sg)" opacity="0.32"/><circle cx="108.5" cy="689.1" r="1.19" fill="url(#sg)" opacity="0.12"/><circle cx="1048.8" cy="569.1" r="1.22" fill="url(#sg)" opacity="0.26"/><circle cx="209.1" cy="456.8" r="1.10" fill="url(#sg)" opacity="0.12"/><circle cx="414.0" cy="24.3" r="1.40" fill="url(#sg)" opacity="0.19"/><circle cx="739.2" cy="358.3" r="1.23" fill="url(#sg)" opacity="0.24"/><circle cx="151.2" cy="432.3" r="1.37" fill="url(#sg)" opacity="0.19"/><circle cx="967.9" cy="307.9" r="1.37" fill="url(#sg)" opacity="0.23"/><circle cx="449.0" cy="163.7" r="1.44" fill="url(#sg)" opacity="0.26"/><circle cx="825.1" cy="501.3" r="1.34" fill="url(#sg)" opacity="0.29"/><circle cx="683.9" cy="325.0" r="1.31" fill="url(#sg)" opacity="0.17"/><circle cx="104.3" cy="300.4" r="1.36" fill="url(#sg)" opacity="0.28"/><circle cx="671.2" cy="179.0" r="1.23" fill="url(#sg)" opacity="0.19"/><circle cx="662.6" cy="293.1" r="1.47" fill="url(#sg)" opacity="0.25"/><circle cx="195.1" cy="468.6" r="1.19" fill="url(#sg)" opacity="0.27"/><circle cx="522.2" cy="697.8" r="1.27" fill="url(#sg)" opacity="0.11"/><circle cx="171.5" cy="559.8" r="1.26" fill="url(#sg)" opacity="0.31"/><circle cx="107.8" cy="411.4" r="1.36" fill="url(#sg)" opacity="0.22"/><circle cx="546.0" cy="457.7" r="1.26" fill="url(#sg)" opacity="0.29"/><circle cx="437.4" cy="678.7" r="1.34" fill="url(#sg)" opacity="0.15"/><circle cx="418.4" cy="546.1" r="1.49" fill="url(#sg)" opacity="0.13"/><circle cx="378.9" cy="40.5" r="1.20" fill="url(#sg)" opacity="0.16"/><circle cx="14.2" cy="299.7" r="1.35" fill="url(#sg)" opacity="0.19"/><circle cx="375.4" cy="189.9" r="1.37" fill="url(#sg)" opacity="0.15"/><circle cx="1002.0" cy="377.4" r="1.40" fill="url(#sg)" opacity="0.15"/><circle cx="417.8" cy="151.8" r="1.39" fill="url(#sg)" opacity="0.13"/><circle cx="863.0" cy="454.2" r="1.28" fill="url(#sg)" opacity="0.20"/><circle cx="240.9" cy="690.1" r="1.32" fill="url(#sg)" opacity="0.18"/><circle cx="872.8" cy="584.4" r="1.15" fill="url(#sg)" opacity="0.20"/><circle cx="584.5" cy="89.6" r="1.18" fill="url(#sg)" opacity="0.29"/><circle cx="906.8" cy="191.5" r="1.13" fill="url(#sg)" opacity="0.18"/><circle cx="454.2" cy="133.1" r="1.36" fill="url(#sg)" opacity="0.10"/><circle cx="299.8" cy="175.4" r="1.24" fill="url(#sg)" opacity="0.17"/><circle cx="456.8" cy="456.3" r="1.18" fill="url(#sg)" opacity="0.25"/><circle cx="990.0" cy="611.8" r="1.41" fill="url(#sg)" opacity="0.11"/><circle cx="965.6" cy="561.4" r="1.42" fill="url(#sg)" opacity="0.13"/><circle cx="675.0" cy="10.7" r="1.48" fill="url(#sg)" opacity="0.10"/><circle cx="699.2" cy="179.0" r="1.07" fill="url(#sg)" opacity="0.12"/><circle cx="249.1" cy="555.8" r="1.08" fill="url(#sg)" opacity="0.18"/><circle cx="963.8" cy="566.8" r="1.45" fill="url(#sg)" opacity="0.14"/><circle cx="648.5" cy="559.4" r="1.45" fill="url(#sg)" opacity="0.25"/><circle cx="840.1" cy="600.6" r="1.35" fill="url(#sg)" opacity="0.14"/><circle cx="565.8" cy="531.2" r="1.44" fill="url(#sg)" opacity="0.20"/><circle cx="591.7" cy="189.4" r="1.07" fill="url(#sg)" opacity="0.15"/><circle cx="525.6" cy="41.9" r="1.07" fill="url(#sg)" opacity="0.20"/><circle cx="523.8" cy="356.7" r="1.43" fill="url(#sg)" opacity="0.22"/><circle cx="7.0" cy="602.0" r="1.28" fill="url(#sg)" opacity="0.20"/><circle cx="709.2" cy="601.8" r="1.21" fill="url(#sg)" opacity="0.18"/><circle cx="1024.0" cy="54.0" r="1.32" fill="url(#sg)" opacity="0.24"/><circle cx="30.4" cy="436.5" r="1.47" fill="url(#sg)" opacity="0.25"/><circle cx="352.3" cy="702.9" r="1.24" fill="url(#sg)" opacity="0.21"/><circle cx="956.8" cy="24.3" r="1.31" fill="url(#sg)" opacity="0.26"/><circle cx="361.0" cy="617.0" r="1.24" fill="url(#sg)" opacity="0.18"/><circle cx="560.2" cy="551.7" r="1.22" fill="url(#sg)" opacity="0.15"/><circle cx="450.3" cy="396.7" r="1.15" fill="url(#sg)" opacity="0.29"/><circle cx="882.4" cy="289.1" r="1.14" fill="url(#sg)" opacity="0.21"/><circle cx="539.8" cy="698.1" r="1.40" fill="url(#sg)" opacity="0.25"/><circle cx="352.7" cy="227.0" r="1.29" fill="url(#sg)" opacity="0.17"/><circle cx="676.7" cy="561.5" r="1.36" fill="url(#sg)" opacity="0.11"/><circle cx="944.1" cy="390.5" r="1.15" fill="url(#sg)" opacity="0.11"/><circle cx="6.6" cy="136.0" r="1.30" fill="url(#sg)" opacity="0.31"/><circle cx="701.4" cy="564.9" r="1.31" fill="url(#sg)" opacity="0.30"/><circle cx="657.4" cy="448.8" r="1.30" fill="url(#sg)" opacity="0.26"/><circle cx="725.9" cy="152.2" r="1.23" fill="url(#sg)" opacity="0.25"/><circle cx="813.0" cy="72.6" r="1.02" fill="url(#sg)" opacity="0.14"/><circle cx="825.7" cy="654.5" r="1.18" fill="url(#sg)" opacity="0.25"/><circle cx="876.9" cy="563.2" r="1.13" fill="url(#sg)" opacity="0.23"/><circle cx="322.0" cy="302.0" r="1.22" fill="url(#sg)" opacity="0.17"/><circle cx="684.1" cy="668.6" r="1.28" fill="url(#sg)" opacity="0.11"/><circle cx="42.0" cy="85.1" r="1.29" fill="url(#sg)" opacity="0.28"/><circle cx="979.3" cy="319.7" r="1.19" fill="url(#sg)" opacity="0.10"/><circle cx="631.0" cy="671.4" r="1.24" fill="url(#sg)" opacity="0.32"/><circle cx="439.6" cy="73.1" r="1.11" fill="url(#sg)" opacity="0.24"/><circle cx="161.8" cy="11.1" r="1.34" fill="url(#sg)" opacity="0.10"/><circle cx="129.7" cy="691.9" r="1.43" fill="url(#sg)" opacity="0.12"/><circle cx="137.5" cy="12.7" r="1.12" fill="url(#sg)" opacity="0.26"/><circle cx="782.0" cy="134.2" r="1.39" fill="url(#sg)" opacity="0.11"/><circle cx="760.6" cy="612.5" r="1.04" fill="url(#sg)" opacity="0.26"/><circle cx="670.1" cy="507.8" r="1.47" fill="url(#sg)" opacity="0.20"/><circle cx="270.8" cy="690.4" r="1.01" fill="url(#sg)" opacity="0.26"/><circle cx="15.7" cy="465.9" r="1.04" fill="url(#sg)" opacity="0.28"/><circle cx="331.6" cy="522.3" r="1.43" fill="url(#sg)" opacity="0.14"/><circle cx="518.4" cy="42.8" r="1.29" fill="url(#sg)" opacity="0.18"/><circle cx="467.7" cy="484.6" r="1.40" fill="url(#sg)" opacity="0.13"/><circle cx="387.2" cy="461.7" r="1.21" fill="url(#sg)" opacity="0.24"/><circle cx="411.2" cy="562.9" r="1.39" fill="url(#sg)" opacity="0.31"/><circle cx="604.2" cy="209.4" r="1.49" fill="url(#sg)" opacity="0.11"/><circle cx="749.7" cy="592.4" r="1.30" fill="url(#sg)" opacity="0.17"/><circle cx="1042.0" cy="595.2" r="1.15" fill="url(#sg)" opacity="0.23"/><circle cx="456.8" cy="635.9" r="1.34" fill="url(#sg)" opacity="0.18"/><circle cx="641.5" cy="641.6" r="1.14" fill="url(#sg)" opacity="0.28"/><circle cx="1.8" cy="188.3" r="1.29" fill="url(#sg)" opacity="0.19"/><circle cx="869.8" cy="635.4" r="1.42" fill="url(#sg)" opacity="0.11"/><circle cx="865.3" cy="620.9" r="1.14" fill="url(#sg)" opacity="0.23"/><circle cx="907.4" cy="577.8" r="1.46" fill="url(#sg)" opacity="0.25"/><circle cx="369.7" cy="60.9" r="1.40" fill="url(#sg)" opacity="0.22"/><circle cx="213.7" cy="537.1" r="1.12" fill="url(#sg)" opacity="0.31"/><circle cx="647.0" cy="485.2" r="1.10" fill="url(#sg)" opacity="0.20"/><circle cx="271.5" cy="537.8" r="1.23" fill="url(#sg)" opacity="0.28"/><circle cx="93.5" cy="577.5" r="1.12" fill="url(#sg)" opacity="0.27"/><circle cx="617.8" cy="642.2" r="1.26" fill="url(#sg)" opacity="0.30"/><circle cx="508.0" cy="422.0" r="1.10" fill="url(#sg)" opacity="0.14"/><circle cx="192.6" cy="502.0" r="1.28" fill="url(#sg)" opacity="0.18"/><circle cx="429.1" cy="370.3" r="1.02" fill="url(#sg)" opacity="0.13"/><circle cx="1063.0" cy="267.8" r="1.32" fill="url(#sg)" opacity="0.12"/><circle cx="839.3" cy="111.8" r="1.17" fill="url(#sg)" opacity="0.23"/><circle cx="553.7" cy="14.7" r="1.50" fill="url(#sg)" opacity="0.11"/><circle cx="923.2" cy="348.2" r="1.13" fill="url(#sg)" opacity="0.23"/><circle cx="830.6" cy="305.0" r="1.38" fill="url(#sg)" opacity="0.31"/><circle cx="872.9" cy="689.8" r="1.02" fill="url(#sg)" opacity="0.16"/><circle cx="214.3" cy="129.4" r="1.03" fill="url(#sg)" opacity="0.12"/><circle cx="594.2" cy="623.4" r="1.47" fill="url(#sg)" opacity="0.20"/><circle cx="970.0" cy="46.0" r="1.20" fill="url(#sg)" opacity="0.23"/><circle cx="127.8" cy="686.9" r="1.28" fill="url(#sg)" opacity="0.16"/><circle cx="682.9" cy="684.8" r="1.20" fill="url(#sg)" opacity="0.25"/><circle cx="477.9" cy="114.4" r="1.50" fill="url(#sg)" opacity="0.32"/><circle cx="236.4" cy="27.7" r="1.18" fill="url(#sg)" opacity="0.16"/><circle cx="962.3" cy="647.7" r="1.02" fill="url(#sg)" opacity="0.29"/><circle cx="838.3" cy="508.1" r="1.49" fill="url(#sg)" opacity="0.24"/><circle cx="59.4" cy="103.7" r="1.47" fill="url(#sg)" opacity="0.27"/><circle cx="721.6" cy="213.9" r="1.38" fill="url(#sg)" opacity="0.23"/><circle cx="112.4" cy="231.9" r="1.06" fill="url(#sg)" opacity="0.16"/><circle cx="513.1" cy="120.7" r="1.07" fill="url(#sg)" opacity="0.15"/><circle cx="722.4" cy="9.0" r="1.10" fill="url(#sg)" opacity="0.26"/><circle cx="38.4" cy="664.2" r="1.47" fill="url(#sg)" opacity="0.15"/><circle cx="924.0" cy="636.3" r="1.22" fill="url(#sg)" opacity="0.13"/><circle cx="103.4" cy="665.0" r="1.31" fill="url(#sg)" opacity="0.29"/><circle cx="482.2" cy="243.3" r="1.24" fill="url(#sg)" opacity="0.28"/><circle cx="669.6" cy="102.2" r="1.03" fill="url(#sg)" opacity="0.15"/><circle cx="760.8" cy="396.2" r="1.44" fill="url(#sg)" opacity="0.13"/><circle cx="284.0" cy="294.8" r="1.14" fill="url(#sg)" opacity="0.13"/><circle cx="895.0" cy="239.5" r="1.25" fill="url(#sg)" opacity="0.14"/><circle cx="339.1" cy="646.7" r="1.49" fill="url(#sg)" opacity="0.12"/><circle cx="60.6" cy="640.8" r="1.11" fill="url(#sg)" opacity="0.25"/><circle cx="509.0" cy="204.9" r="1.10" fill="url(#sg)" opacity="0.16"/><circle cx="388.3" cy="709.6" r="1.46" fill="url(#sg)" opacity="0.32"/><circle cx="104.0" cy="207.2" r="1.03" fill="url(#sg)" opacity="0.30"/><circle cx="774.4" cy="210.2" r="1.01" fill="url(#sg)" opacity="0.32"/><circle cx="860.3" cy="244.1" r="1.00" fill="url(#sg)" opacity="0.13"/><circle cx="887.2" cy="377.0" r="1.22" fill="url(#sg)" opacity="0.14"/><circle cx="972.2" cy="156.3" r="1.07" fill="url(#sg)" opacity="0.23"/><circle cx="192.0" cy="551.6" r="1.10" fill="url(#sg)" opacity="0.26"/><circle cx="84.5" cy="62.6" r="1.25" fill="url(#sg)" opacity="0.24"/><circle cx="292.0" cy="147.5" r="1.35" fill="url(#sg)" opacity="0.24"/><circle cx="865.1" cy="417.4" r="1.03" fill="url(#sg)" opacity="0.14"/><circle cx="781.1" cy="292.2" r="1.03" fill="url(#sg)" opacity="0.26"/><circle cx="864.1" cy="240.0" r="1.43" fill="url(#sg)" opacity="0.29"/><circle cx="525.6" cy="11.1" r="1.24" fill="url(#sg)" opacity="0.30"/><circle cx="929.6" cy="190.6" r="1.42" fill="url(#sg)" opacity="0.14"/><circle cx="391.3" cy="117.1" r="1.30" fill="url(#sg)" opacity="0.18"/><circle cx="4.9" cy="372.2" r="1.26" fill="url(#sg)" opacity="0.20"/><circle cx="128.7" cy="511.6" r="1.43" fill="url(#sg)" opacity="0.28"/><circle cx="342.2" cy="509.2" r="1.38" fill="url(#sg)" opacity="0.18"/><circle cx="65.2" cy="624.9" r="1.25" fill="url(#sg)" opacity="0.31"/><circle cx="547.2" cy="379.8" r="1.01" fill="url(#sg)" opacity="0.22"/><circle cx="1031.3" cy="160.2" r="1.05" fill="url(#sg)" opacity="0.14"/><circle cx="267.0" cy="585.1" r="1.05" fill="url(#sg)" opacity="0.10"/><circle cx="745.1" cy="139.7" r="1.30" fill="url(#sg)" opacity="0.10"/><circle cx="614.5" cy="374.4" r="1.05" fill="url(#sg)" opacity="0.26"/><circle cx="926.9" cy="513.4" r="1.06" fill="url(#sg)" opacity="0.11"/><circle cx="526.2" cy="358.5" r="1.06" fill="url(#sg)" opacity="0.16"/><circle cx="432.4" cy="98.1" r="1.43" fill="url(#sg)" opacity="0.23"/><circle cx="156.9" cy="410.2" r="1.08" fill="url(#sg)" opacity="0.27"/><circle cx="880.5" cy="671.3" r="1.21" fill="url(#sg)" opacity="0.19"/><circle cx="895.1" cy="376.3" r="1.47" fill="url(#sg)" opacity="0.19"/><circle cx="828.2" cy="242.4" r="1.17" fill="url(#sg)" opacity="0.15"/><circle cx="464.3" cy="702.6" r="1.46" fill="url(#sg)" opacity="0.28"/><circle cx="868.8" cy="606.9" r="1.26" fill="url(#sg)" opacity="0.11"/><circle cx="1021.1" cy="669.0" r="1.21" fill="url(#sg)" opacity="0.15"/><circle cx="674.4" cy="260.9" r="1.03" fill="url(#sg)" opacity="0.22"/><circle cx="461.6" cy="361.4" r="1.07" fill="url(#sg)" opacity="0.10"/><circle cx="1033.7" cy="556.0" r="1.32" fill="url(#sg)" opacity="0.31"/><circle cx="862.7" cy="633.2" r="1.02" fill="url(#sg)" opacity="0.30"/><circle cx="683.9" cy="190.3" r="1.14" fill="url(#sg)" opacity="0.25"/><circle cx="578.0" cy="661.9" r="1.13" fill="url(#sg)" opacity="0.24"/><circle cx="554.6" cy="310.5" r="1.14" fill="url(#sg)" opacity="0.31"/><circle cx="325.6" cy="463.6" r="1.30" fill="url(#sg)" opacity="0.12"/><circle cx="1019.2" cy="367.9" r="1.23" fill="url(#sg)" opacity="0.16"/><circle cx="569.1" cy="106.3" r="1.07" fill="url(#sg)" opacity="0.13"/><circle cx="313.0" cy="291.1" r="1.12" fill="url(#sg)" opacity="0.16"/><circle cx="93.6" cy="391.2" r="1.30" fill="url(#sg)" opacity="0.29"/><circle cx="607.8" cy="465.7" r="1.36" fill="url(#sg)" opacity="0.14"/><circle cx="491.3" cy="392.4" r="1.23" fill="url(#sg)" opacity="0.24"/><circle cx="331.0" cy="173.5" r="1.26" fill="url(#sg)" opacity="0.15"/><circle cx="408.5" cy="419.3" r="1.18" fill="url(#sg)" opacity="0.10"/><circle cx="918.7" cy="170.8" r="1.25" fill="url(#sg)" opacity="0.22"/><circle cx="303.6" cy="707.1" r="1.39" fill="url(#sg)" opacity="0.16"/><circle cx="169.0" cy="47.8" r="1.22" fill="url(#sg)" opacity="0.30"/><circle cx="66.1" cy="277.7" r="1.37" fill="url(#sg)" opacity="0.20"/><circle cx="116.5" cy="161.2" r="1.37" fill="url(#sg)" opacity="0.32"/><circle cx="164.7" cy="241.3" r="1.34" fill="url(#sg)" opacity="0.18"/><circle cx="657.0" cy="608.6" r="1.26" fill="url(#sg)" opacity="0.28"/><circle cx="787.5" cy="532.2" r="1.24" fill="url(#sg)" opacity="0.27"/><circle cx="836.7" cy="507.3" r="1.06" fill="url(#sg)" opacity="0.31"/><circle cx="928.3" cy="3.1" r="1.29" fill="url(#sg)" opacity="0.27"/><circle cx="530.7" cy="689.3" r="1.21" fill="url(#sg)" opacity="0.23"/><circle cx="835.4" cy="624.9" r="1.19" fill="url(#sg)" opacity="0.24"/><circle cx="482.1" cy="327.9" r="1.15" fill="url(#sg)" opacity="0.26"/><circle cx="416.5" cy="397.6" r="1.16" fill="url(#sg)" opacity="0.18"/><circle cx="839.0" cy="608.3" r="1.22" fill="url(#sg)" opacity="0.21"/><circle cx="196.4" cy="217.7" r="1.29" fill="url(#sg)" opacity="0.13"/><circle cx="620.0" cy="63.0" r="1.16" fill="url(#sg)" opacity="0.31"/><circle cx="899.1" cy="600.1" r="1.10" fill="url(#sg)" opacity="0.32"/><circle cx="454.6" cy="652.0" r="1.02" fill="url(#sg)" opacity="0.10"/><circle cx="602.2" cy="356.1" r="1.39" fill="url(#sg)" opacity="0.31"/><circle cx="574.0" cy="714.8" r="1.26" fill="url(#sg)" opacity="0.22"/><circle cx="730.5" cy="278.9" r="1.30" fill="url(#sg)" opacity="0.18"/><circle cx="374.3" cy="678.7" r="1.26" fill="url(#sg)" opacity="0.25"/><circle cx="105.5" cy="268.1" r="1.28" fill="url(#sg)" opacity="0.19"/><circle cx="611.9" cy="630.0" r="1.24" fill="url(#sg)" opacity="0.32"/><circle cx="469.2" cy="447.2" r="1.17" fill="url(#sg)" opacity="0.32"/><circle cx="565.1" cy="584.2" r="1.16" fill="url(#sg)" opacity="0.14"/><circle cx="1043.0" cy="591.4" r="1.06" fill="url(#sg)" opacity="0.21"/><circle cx="953.5" cy="494.0" r="1.50" fill="url(#sg)" opacity="0.28"/><circle cx="946.8" cy="301.4" r="1.14" fill="url(#sg)" opacity="0.13"/><circle cx="545.4" cy="361.5" r="1.09" fill="url(#sg)" opacity="0.14"/><circle cx="671.7" cy="431.8" r="1.50" fill="url(#sg)" opacity="0.18"/><circle cx="678.5" cy="30.3" r="1.39" fill="url(#sg)" opacity="0.19"/><circle cx="327.0" cy="494.5" r="1.15" fill="url(#sg)" opacity="0.10"/><circle cx="897.7" cy="419.7" r="1.10" fill="url(#sg)" opacity="0.25"/><circle cx="530.7" cy="396.1" r="1.32" fill="url(#sg)" opacity="0.16"/><circle cx="566.6" cy="713.9" r="1.21" fill="url(#sg)" opacity="0.23"/><circle cx="129.5" cy="112.2" r="1.05" fill="url(#sg)" opacity="0.27"/><circle cx="106.7" cy="122.1" r="1.41" fill="url(#sg)" opacity="0.22"/><circle cx="653.5" cy="577.5" r="1.01" fill="url(#sg)" opacity="0.11"/><circle cx="821.4" cy="231.1" r="1.18" fill="url(#sg)" opacity="0.26"/><circle cx="180.6" cy="190.9" r="1.45" fill="url(#sg)" opacity="0.12"/><circle cx="620.7" cy="249.8" r="1.19" fill="url(#sg)" opacity="0.20"/><circle cx="58.3" cy="637.6" r="1.48" fill="url(#sg)" opacity="0.23"/><circle cx="468.7" cy="444.0" r="1.02" fill="url(#sg)" opacity="0.15"/><circle cx="992.3" cy="612.0" r="1.45" fill="url(#sg)" opacity="0.17"/><circle cx="869.7" cy="217.4" r="1.48" fill="url(#sg)" opacity="0.23"/><circle cx="528.3" cy="680.0" r="1.19" fill="url(#sg)" opacity="0.15"/><circle cx="765.9" cy="158.5" r="1.44" fill="url(#sg)" opacity="0.17"/><circle cx="516.4" cy="567.6" r="1.09" fill="url(#sg)" opacity="0.15"/><circle cx="382.1" cy="133.6" r="1.15" fill="url(#sg)" opacity="0.32"/><circle cx="598.6" cy="82.3" r="1.19" fill="url(#sg)" opacity="0.22"/><circle cx="429.8" cy="46.9" r="1.41" fill="url(#sg)" opacity="0.13"/><circle cx="374.4" cy="175.4" r="1.14" fill="url(#sg)" opacity="0.14"/><circle cx="252.8" cy="25.0" r="1.17" fill="url(#sg)" opacity="0.25"/><circle cx="166.2" cy="505.4" r="1.13" fill="url(#sg)" opacity="0.12"/><circle cx="890.1" cy="91.5" r="1.42" fill="url(#sg)" opacity="0.20"/><circle cx="858.1" cy="114.0" r="1.36" fill="url(#sg)" opacity="0.18"/><circle cx="401.8" cy="686.2" r="1.48" fill="url(#sg)" opacity="0.14"/><circle cx="538.1" cy="162.7" r="1.07" fill="url(#sg)" opacity="0.20"/><circle cx="753.1" cy="186.7" r="1.29" fill="url(#sg)" opacity="0.30"/><circle cx="392.3" cy="176.3" r="1.11" fill="url(#sg)" opacity="0.24"/><circle cx="930.0" cy="87.9" r="1.27" fill="url(#sg)" opacity="0.21"/><circle cx="288.3" cy="552.6" r="1.33" fill="url(#sg)" opacity="0.19"/><circle cx="605.1" cy="222.5" r="1.04" fill="url(#sg)" opacity="0.19"/><circle cx="188.7" cy="609.3" r="1.33" fill="url(#sg)" opacity="0.17"/><circle cx="116.2" cy="402.4" r="1.25" fill="url(#sg)" opacity="0.18"/><circle cx="316.6" cy="47.2" r="1.11" fill="url(#sg)" opacity="0.17"/><circle cx="134.5" cy="513.2" r="1.20" fill="url(#sg)" opacity="0.16"/><circle cx="968.9" cy="554.9" r="1.43" fill="url(#sg)" opacity="0.30"/><circle cx="140.9" cy="198.0" r="1.34" fill="url(#sg)" opacity="0.10"/><circle cx="707.4" cy="251.6" r="1.33" fill="url(#sg)" opacity="0.19"/><circle cx="745.4" cy="177.9" r="1.18" fill="url(#sg)" opacity="0.29"/><circle cx="670.3" cy="130.1" r="1.46" fill="url(#sg)" opacity="0.12"/><circle cx="782.5" cy="510.2" r="1.02" fill="url(#sg)" opacity="0.11"/><circle cx="172.7" cy="141.8" r="1.19" fill="url(#sg)" opacity="0.17"/><circle cx="41.8" cy="222.6" r="1.09" fill="url(#sg)" opacity="0.24"/><circle cx="894.9" cy="408.2" r="1.13" fill="url(#sg)" opacity="0.26"/><circle cx="463.6" cy="490.0" r="1.00" fill="url(#sg)" opacity="0.18"/><circle cx="889.3" cy="556.0" r="1.02" fill="url(#sg)" opacity="0.16"/><circle cx="910.5" cy="434.9" r="1.12" fill="url(#sg)" opacity="0.11"/><circle cx="118.5" cy="566.7" r="1.46" fill="url(#sg)" opacity="0.15"/><circle cx="799.0" cy="61.7" r="1.20" fill="url(#sg)" opacity="0.26"/><circle cx="796.9" cy="593.4" r="1.04" fill="url(#sg)" opacity="0.16"/><circle cx="1008.8" cy="303.6" r="1.35" fill="url(#sg)" opacity="0.31"/><circle cx="787.4" cy="594.3" r="1.23" fill="url(#sg)" opacity="0.24"/><circle cx="57.9" cy="500.0" r="1.26" fill="url(#sg)" opacity="0.19"/><circle cx="989.4" cy="91.4" r="1.02" fill="url(#sg)" opacity="0.27"/><circle cx="749.1" cy="576.9" r="1.27" fill="url(#sg)" opacity="0.16"/><circle cx="1033.4" cy="456.5" r="1.12" fill="url(#sg)" opacity="0.22"/><circle cx="63.3" cy="256.2" r="1.10" fill="url(#sg)" opacity="0.19"/><circle cx="331.0" cy="97.8" r="1.34" fill="url(#sg)" opacity="0.26"/><circle cx="253.6" cy="173.1" r="1.22" fill="url(#sg)" opacity="0.21"/><circle cx="997.6" cy="251.6" r="1.44" fill="url(#sg)" opacity="0.17"/><circle cx="151.3" cy="403.3" r="1.41" fill="url(#sg)" opacity="0.17"/><circle cx="584.4" cy="544.5" r="1.33" fill="url(#sg)" opacity="0.14"/><circle cx="638.2" cy="330.2" r="1.42" fill="url(#sg)" opacity="0.27"/><circle cx="122.0" cy="207.2" r="1.10" fill="url(#sg)" opacity="0.18"/><circle cx="64.3" cy="201.1" r="1.35" fill="url(#sg)" opacity="0.14"/><circle cx="477.6" cy="80.9" r="1.23" fill="url(#sg)" opacity="0.17"/><circle cx="386.9" cy="120.4" r="1.01" fill="url(#sg)" opacity="0.11"/><circle cx="1057.6" cy="537.3" r="1.36" fill="url(#sg)" opacity="0.12"/><circle cx="1044.9" cy="403.6" r="1.24" fill="url(#sg)" opacity="0.12"/><circle cx="462.9" cy="135.9" r="1.00" fill="url(#sg)" opacity="0.22"/><circle cx="980.2" cy="461.5" r="1.47" fill="url(#sg)" opacity="0.24"/><circle cx="695.7" cy="180.0" r="1.07" fill="url(#sg)" opacity="0.15"/><circle cx="29.5" cy="554.5" r="1.15" fill="url(#sg)" opacity="0.29"/><circle cx="198.0" cy="456.9" r="1.46" fill="url(#sg)" opacity="0.29"/><circle cx="179.6" cy="561.8" r="1.37" fill="url(#sg)" opacity="0.29"/><circle cx="348.2" cy="132.1" r="1.16" fill="url(#sg)" opacity="0.29"/><circle cx="392.8" cy="394.6" r="1.42" fill="url(#sg)" opacity="0.18"/><circle cx="255.2" cy="29.5" r="1.31" fill="url(#sg)" opacity="0.23"/><circle cx="873.8" cy="505.2" r="1.47" fill="url(#sg)" opacity="0.30"/><circle cx="527.0" cy="357.7" r="1.15" fill="url(#sg)" opacity="0.13"/><circle cx="619.5" cy="57.4" r="1.08" fill="url(#sg)" opacity="0.25"/><circle cx="472.4" cy="694.4" r="1.02" fill="url(#sg)" opacity="0.12"/><circle cx="468.5" cy="136.6" r="1.00" fill="url(#sg)" opacity="0.26"/><circle cx="896.3" cy="612.4" r="1.21" fill="url(#sg)" opacity="0.28"/><circle cx="302.0" cy="473.7" r="1.21" fill="url(#sg)" opacity="0.21"/><circle cx="361.0" cy="314.1" r="1.41" fill="url(#sg)" opacity="0.25"/><circle cx="963.7" cy="117.8" r="1.22" fill="url(#sg)" opacity="0.16"/><circle cx="600.6" cy="249.2" r="1.04" fill="url(#sg)" opacity="0.14"/><circle cx="345.1" cy="329.7" r="1.45" fill="url(#sg)" opacity="0.32"/><circle cx="922.5" cy="697.6" r="1.31" fill="url(#sg)" opacity="0.32"/><circle cx="864.7" cy="43.0" r="1.30" fill="url(#sg)" opacity="0.25"/><circle cx="316.6" cy="408.9" r="1.24" fill="url(#sg)" opacity="0.31"/><circle cx="690.1" cy="214.3" r="1.44" fill="url(#sg)" opacity="0.18"/><circle cx="29.7" cy="135.2" r="1.22" fill="url(#sg)" opacity="0.25"/><circle cx="90.8" cy="472.9" r="1.29" fill="url(#sg)" opacity="0.18"/><circle cx="443.9" cy="379.5" r="1.20" fill="url(#sg)" opacity="0.23"/><circle cx="121.8" cy="129.2" r="1.27" fill="url(#sg)" opacity="0.30"/><circle cx="119.7" cy="617.3" r="1.05" fill="url(#sg)" opacity="0.16"/><circle cx="565.8" cy="180.1" r="1.28" fill="url(#sg)" opacity="0.21"/><circle cx="241.5" cy="410.1" r="1.26" fill="url(#sg)" opacity="0.12"/><circle cx="627.3" cy="57.4" r="1.04" fill="url(#sg)" opacity="0.19"/><circle cx="468.5" cy="618.2" r="1.36" fill="url(#sg)" opacity="0.22"/><circle cx="806.9" cy="82.1" r="1.36" fill="url(#sg)" opacity="0.32"/><circle cx="108.8" cy="594.4" r="1.09" fill="url(#sg)" opacity="0.19"/><circle cx="1023.4" cy="403.1" r="1.07" fill="url(#sg)" opacity="0.27"/><circle cx="827.4" cy="41.2" r="1.19" fill="url(#sg)" opacity="0.15"/><circle cx="16.2" cy="425.5" r="1.15" fill="url(#sg)" opacity="0.15"/><circle cx="754.1" cy="305.0" r="1.31" fill="url(#sg)" opacity="0.30"/><circle cx="929.7" cy="403.1" r="1.44" fill="url(#sg)" opacity="0.31"/><circle cx="179.1" cy="533.7" r="1.38" fill="url(#sg)" opacity="0.18"/><circle cx="725.4" cy="591.2" r="1.19" fill="url(#sg)" opacity="0.13"/><circle cx="785.9" cy="678.8" r="1.02" fill="url(#sg)" opacity="0.26"/><circle cx="643.6" cy="71.3" r="1.40" fill="url(#sg)" opacity="0.22"/><circle cx="120.4" cy="662.6" r="1.13" fill="url(#sg)" opacity="0.25"/><circle cx="205.9" cy="319.9" r="1.29" fill="url(#sg)" opacity="0.29"/><circle cx="121.1" cy="15.0" r="1.40" fill="url(#sg)" opacity="0.12"/><circle cx="197.5" cy="396.8" r="1.34" fill="url(#sg)" opacity="0.16"/><circle cx="406.0" cy="103.3" r="1.27" fill="url(#sg)" opacity="0.30"/><circle cx="735.0" cy="578.7" r="1.01" fill="url(#sg)" opacity="0.31"/><circle cx="365.0" cy="108.1" r="1.44" fill="url(#sg)" opacity="0.21"/><circle cx="853.3" cy="25.4" r="1.41" fill="url(#sg)" opacity="0.14"/><circle cx="724.4" cy="281.1" r="1.08" fill="url(#sg)" opacity="0.21"/><circle cx="900.9" cy="281.7" r="1.31" fill="url(#sg)" opacity="0.30"/><circle cx="80.9" cy="235.8" r="1.45" fill="url(#sg)" opacity="0.15"/><circle cx="628.1" cy="31.3" r="1.18" fill="url(#sg)" opacity="0.14"/><circle cx="498.6" cy="413.2" r="1.18" fill="url(#sg)" opacity="0.19"/><circle cx="6.4" cy="414.7" r="1.01" fill="url(#sg)" opacity="0.17"/><circle cx="489.7" cy="706.3" r="1.07" fill="url(#sg)" opacity="0.11"/><circle cx="715.3" cy="195.2" r="1.25" fill="url(#sg)" opacity="0.16"/><circle cx="279.4" cy="407.4" r="1.48" fill="url(#sg)" opacity="0.22"/><circle cx="1057.7" cy="24.4" r="1.39" fill="url(#sg)" opacity="0.23"/><circle cx="930.0" cy="554.4" r="1.32" fill="url(#sg)" opacity="0.24"/><circle cx="386.9" cy="201.6" r="1.44" fill="url(#sg)" opacity="0.28"/><circle cx="1000.6" cy="487.8" r="1.38" fill="url(#sg)" opacity="0.17"/><circle cx="788.3" cy="364.4" r="1.18" fill="url(#sg)" opacity="0.24"/><circle cx="587.1" cy="290.7" r="1.17" fill="url(#sg)" opacity="0.11"/><circle cx="344.5" cy="707.7" r="1.18" fill="url(#sg)" opacity="0.21"/><circle cx="259.5" cy="168.1" r="1.07" fill="url(#sg)" opacity="0.18"/><circle cx="7.7" cy="623.6" r="1.22" fill="url(#sg)" opacity="0.20"/><circle cx="606.3" cy="216.5" r="1.03" fill="url(#sg)" opacity="0.14"/><circle cx="321.4" cy="220.9" r="1.28" fill="url(#sg)" opacity="0.26"/><circle cx="999.3" cy="243.8" r="1.29" fill="url(#sg)" opacity="0.31"/><circle cx="85.3" cy="128.0" r="1.49" fill="url(#sg)" opacity="0.23"/><circle cx="380.5" cy="554.5" r="1.43" fill="url(#sg)" opacity="0.19"/><circle cx="72.2" cy="346.9" r="1.14" fill="url(#sg)" opacity="0.30"/><circle cx="274.5" cy="16.5" r="1.13" fill="url(#sg)" opacity="0.13"/><circle cx="750.9" cy="156.3" r="1.10" fill="url(#sg)" opacity="0.19"/><circle cx="642.7" cy="618.7" r="1.10" fill="url(#sg)" opacity="0.24"/><circle cx="782.3" cy="689.6" r="1.04" fill="url(#sg)" opacity="0.23"/><circle cx="862.9" cy="626.9" r="1.07" fill="url(#sg)" opacity="0.18"/><circle cx="200.6" cy="384.4" r="1.32" fill="url(#sg)" opacity="0.30"/><circle cx="983.8" cy="152.0" r="1.37" fill="url(#sg)" opacity="0.17"/><circle cx="691.8" cy="290.2" r="1.17" fill="url(#sg)" opacity="0.25"/><circle cx="61.2" cy="296.6" r="1.31" fill="url(#sg)" opacity="0.11"/><circle cx="356.6" cy="354.0" r="1.13" fill="url(#sg)" opacity="0.23"/><circle cx="494.0" cy="9.7" r="1.28" fill="url(#sg)" opacity="0.31"/><circle cx="1052.7" cy="40.1" r="1.36" fill="url(#sg)" opacity="0.24"/><circle cx="350.9" cy="66.9" r="1.07" fill="url(#sg)" opacity="0.13"/><circle cx="817.8" cy="64.3" r="1.21" fill="url(#sg)" opacity="0.28"/><circle cx="574.2" cy="421.4" r="1.33" fill="url(#sg)" opacity="0.22"/><circle cx="641.3" cy="236.9" r="1.13" fill="url(#sg)" opacity="0.27"/><circle cx="758.4" cy="546.5" r="1.15" fill="url(#sg)" opacity="0.27"/><circle cx="823.6" cy="699.8" r="1.14" fill="url(#sg)" opacity="0.20"/><circle cx="557.9" cy="673.7" r="1.00" fill="url(#sg)" opacity="0.13"/><circle cx="507.2" cy="469.2" r="1.18" fill="url(#sg)" opacity="0.27"/><circle cx="1054.8" cy="163.4" r="1.04" fill="url(#sg)" opacity="0.27"/><circle cx="29.8" cy="96.0" r="1.25" fill="url(#sg)" opacity="0.11"/><circle cx="591.9" cy="130.2" r="1.18" fill="url(#sg)" opacity="0.31"/><circle cx="159.2" cy="127.0" r="1.46" fill="url(#sg)" opacity="0.27"/><circle cx="172.8" cy="20.8" r="1.12" fill="url(#sg)" opacity="0.27"/><circle cx="1047.2" cy="357.2" r="1.17" fill="url(#sg)" opacity="0.24"/><circle cx="853.4" cy="329.4" r="1.45" fill="url(#sg)" opacity="0.17"/><circle cx="114.9" cy="525.1" r="1.32" fill="url(#sg)" opacity="0.11"/><circle cx="428.4" cy="618.7" r="1.28" fill="url(#sg)" opacity="0.11"/><circle cx="437.0" cy="658.1" r="1.31" fill="url(#sg)" opacity="0.31"/><circle cx="238.9" cy="180.4" r="1.22" fill="url(#sg)" opacity="0.16"/><circle cx="246.7" cy="145.5" r="1.32" fill="url(#sg)" opacity="0.27"/><circle cx="318.2" cy="711.9" r="1.28" fill="url(#sg)" opacity="0.15"/><circle cx="167.1" cy="618.0" r="1.13" fill="url(#sg)" opacity="0.30"/><circle cx="801.1" cy="589.1" r="1.17" fill="url(#sg)" opacity="0.16"/><circle cx="517.6" cy="637.9" r="1.34" fill="url(#sg)" opacity="0.13"/><circle cx="637.0" cy="324.4" r="1.44" fill="url(#sg)" opacity="0.23"/><circle cx="223.7" cy="632.6" r="1.39" fill="url(#sg)" opacity="0.18"/><circle cx="920.3" cy="130.5" r="1.50" fill="url(#sg)" opacity="0.29"/><circle cx="317.2" cy="17.5" r="1.49" fill="url(#sg)" opacity="0.12"/><circle cx="10.0" cy="652.7" r="1.37" fill="url(#sg)" opacity="0.13"/><circle cx="104.0" cy="120.8" r="1.05" fill="url(#sg)" opacity="0.25"/><circle cx="361.9" cy="657.6" r="1.44" fill="url(#sg)" opacity="0.26"/><circle cx="1044.3" cy="23.6" r="1.40" fill="url(#sg)" opacity="0.15"/><circle cx="735.0" cy="27.1" r="1.12" fill="url(#sg)" opacity="0.21"/><circle cx="458.9" cy="75.1" r="1.50" fill="url(#sg)" opacity="0.10"/><circle cx="337.4" cy="629.1" r="1.24" fill="url(#sg)" opacity="0.12"/><circle cx="144.8" cy="306.8" r="1.34" fill="url(#sg)" opacity="0.14"/><circle cx="157.7" cy="528.6" r="1.06" fill="url(#sg)" opacity="0.21"/><circle cx="376.9" cy="355.3" r="1.17" fill="url(#sg)" opacity="0.31"/><circle cx="229.3" cy="692.7" r="1.37" fill="url(#sg)" opacity="0.30"/><circle cx="291.0" cy="126.9" r="1.03" fill="url(#sg)" opacity="0.16"/><circle cx="46.0" cy="364.3" r="1.28" fill="url(#sg)" opacity="0.19"/><circle cx="386.5" cy="7.6" r="1.33" fill="url(#sg)" opacity="0.25"/><circle cx="579.9" cy="392.9" r="1.49" fill="url(#sg)" opacity="0.25"/><circle cx="931.8" cy="513.9" r="1.16" fill="url(#sg)" opacity="0.19"/><circle cx="446.8" cy="696.6" r="1.19" fill="url(#sg)" opacity="0.19"/><circle cx="437.0" cy="102.4" r="1.00" fill="url(#sg)" opacity="0.32"/><circle cx="647.9" cy="663.2" r="1.31" fill="url(#sg)" opacity="0.16"/><circle cx="401.8" cy="172.4" r="1.06" fill="url(#sg)" opacity="0.14"/><circle cx="898.7" cy="561.3" r="1.02" fill="url(#sg)" opacity="0.30"/><circle cx="740.0" cy="232.3" r="1.27" fill="url(#sg)" opacity="0.24"/><circle cx="336.4" cy="695.7" r="1.37" fill="url(#sg)" opacity="0.10"/><circle cx="909.8" cy="365.3" r="1.50" fill="url(#sg)" opacity="0.23"/><circle cx="249.9" cy="450.7" r="1.19" fill="url(#sg)" opacity="0.27"/><circle cx="759.2" cy="281.8" r="1.31" fill="url(#sg)" opacity="0.22"/><circle cx="721.9" cy="230.6" r="1.27" fill="url(#sg)" opacity="0.24"/><circle cx="238.0" cy="438.6" r="1.45" fill="url(#sg)" opacity="0.16"/><circle cx="504.5" cy="516.6" r="1.24" fill="url(#sg)" opacity="0.22"/><circle cx="235.8" cy="101.7" r="1.26" fill="url(#sg)" opacity="0.31"/><circle cx="558.5" cy="377.7" r="1.12" fill="url(#sg)" opacity="0.28"/><circle cx="183.7" cy="588.5" r="1.32" fill="url(#sg)" opacity="0.20"/><circle cx="882.1" cy="640.1" r="1.02" fill="url(#sg)" opacity="0.29"/><circle cx="406.4" cy="595.8" r="1.06" fill="url(#sg)" opacity="0.28"/><circle cx="164.0" cy="180.1" r="1.18" fill="url(#sg)" opacity="0.12"/><circle cx="856.2" cy="373.3" r="1.04" fill="url(#sg)" opacity="0.20"/><circle cx="421.7" cy="713.8" r="1.22" fill="url(#sg)" opacity="0.26"/><circle cx="509.9" cy="571.6" r="1.07" fill="url(#sg)" opacity="0.27"/><circle cx="725.1" cy="262.7" r="1.12" fill="url(#sg)" opacity="0.22"/><circle cx="395.2" cy="243.5" r="1.01" fill="url(#sg)" opacity="0.18"/><circle cx="214.1" cy="408.5" r="1.09" fill="url(#sg)" opacity="0.11"/><circle cx="765.6" cy="196.6" r="1.12" fill="url(#sg)" opacity="0.17"/><circle cx="889.2" cy="65.4" r="1.43" fill="url(#sg)" opacity="0.24"/><circle cx="215.0" cy="303.0" r="1.31" fill="url(#sg)" opacity="0.28"/><circle cx="396.1" cy="31.4" r="1.18" fill="url(#sg)" opacity="0.20"/><circle cx="759.6" cy="211.4" r="1.32" fill="url(#sg)" opacity="0.19"/><circle cx="864.3" cy="252.3" r="1.29" fill="url(#sg)" opacity="0.19"/><circle cx="985.9" cy="137.2" r="1.36" fill="url(#sg)" opacity="0.32"/><circle cx="396.9" cy="476.6" r="1.04" fill="url(#sg)" opacity="0.17"/><circle cx="805.9" cy="271.7" r="1.25" fill="url(#sg)" opacity="0.22"/><circle cx="960.8" cy="542.0" r="1.30" fill="url(#sg)" opacity="0.10"/><circle cx="493.1" cy="330.9" r="1.21" fill="url(#sg)" opacity="0.29"/><circle cx="504.9" cy="637.5" r="1.25" fill="url(#sg)" opacity="0.20"/><circle cx="545.6" cy="590.5" r="1.37" fill="url(#sg)" opacity="0.25"/><circle cx="428.2" cy="29.1" r="1.28" fill="url(#sg)" opacity="0.25"/><circle cx="820.0" cy="551.2" r="1.11" fill="url(#sg)" opacity="0.12"/><circle cx="82.2" cy="585.3" r="1.04" fill="url(#sg)" opacity="0.12"/><circle cx="803.0" cy="404.1" r="1.34" fill="url(#sg)" opacity="0.11"/><circle cx="758.0" cy="345.7" r="1.35" fill="url(#sg)" opacity="0.11"/><circle cx="445.5" cy="418.1" r="1.41" fill="url(#sg)" opacity="0.32"/><circle cx="929.5" cy="104.2" r="1.26" fill="url(#sg)" opacity="0.17"/><circle cx="6.4" cy="707.9" r="1.13" fill="url(#sg)" opacity="0.16"/><circle cx="333.7" cy="182.6" r="1.28" fill="url(#sg)" opacity="0.29"/><circle cx="544.7" cy="300.9" r="1.15" fill="url(#sg)" opacity="0.11"/><circle cx="924.0" cy="574.2" r="1.13" fill="url(#sg)" opacity="0.29"/><circle cx="215.3" cy="37.3" r="1.19" fill="url(#sg)" opacity="0.22"/><circle cx="494.9" cy="350.1" r="1.18" fill="url(#sg)" opacity="0.23"/><circle cx="854.3" cy="143.4" r="1.28" fill="url(#sg)" opacity="0.31"/><circle cx="54.5" cy="225.0" r="1.20" fill="url(#sg)" opacity="0.22"/></g>
</svg>
<div style="left:185px;top:548px;width:36px;height:31px;border:1px solid #22e022;"></div>
<div style="left:186px;top:549px;width:62px;height:20px;background:#202020;"></div>
<span style="left:189.60px;top:552.59px;font:400 11.5px/normal 'Liberation Sans',sans-serif;color:#f0f0f0;letter-spacing:0.423px;white-space:pre;">Preview01</span>
<svg style="left:0;top:0" width="1920" height="1080" viewBox="0 0 1920 1080"><defs>
<linearGradient id="pg1" x1="0" y1="0" x2="1" y2="1"><stop offset="0" stop-color="#2a7a2a"/><stop offset="0.5" stop-color="#1e6a1e"/><stop offset="1" stop-color="#0a3a0a"/></linearGradient>
<radialGradient id="po1" cx="0.2" cy="0.7" r="0.9"><stop offset="0" stop-color="#ff7a20"/><stop offset="1" stop-color="#8a5a40"/></radialGradient>
<linearGradient id="pb1" x1="0.2" y1="0" x2="0.9" y2="1"><stop offset="0" stop-color="#3030ff"/><stop offset="0.5" stop-color="#1010c0"/><stop offset="1" stop-color="#608090"/></linearGradient>
<linearGradient id="ps3" x1="0" y1="0" x2="1" y2="1"><stop offset="0" stop-color="#00a8ff"/><stop offset="1" stop-color="#0028ff"/></linearGradient>
<linearGradient id="pso" x1="0" y1="0" x2="0.6" y2="1"><stop offset="0" stop-color="#ff7a10"/><stop offset="1" stop-color="#ffb070"/></linearGradient>
<linearGradient id="pk5" x1="0" y1="0" x2="0" y2="1"><stop offset="0" stop-color="#000"/><stop offset="0.5" stop-color="#bbb"/><stop offset="1" stop-color="#000"/></linearGradient>
<linearGradient id="pw7" x1="0" y1="0" x2="1" y2="1"><stop offset="0" stop-color="#e8f4f0"/><stop offset="0.6" stop-color="#7080f0"/><stop offset="1" stop-color="#2020e8"/></linearGradient>
<linearGradient id="pb7" x1="0" y1="1" x2="1" y2="0.300"><stop offset="0" stop-color="#0000ff"/><stop offset="0.5" stop-color="#5060f0"/><stop offset="1" stop-color="#c8d8f0"/></linearGradient>
<linearGradient id="pbb" x1="0" y1="0" x2="1" y2="1"><stop offset="0" stop-color="#1010e8"/><stop offset="1" stop-color="#4858ff"/></linearGradient>
<linearGradient id="pbb2" x1="1" y1="0" x2="0" y2="1"><stop offset="0" stop-color="#a0c0ff"/><stop offset="0.5" stop-color="#3848ff"/><stop offset="1" stop-color="#1010f0"/></linearGradient>
<linearGradient id="pp101" x1="0" y1="0" x2="1" y2="0.800"><stop offset="0" stop-color="#c89ab8"/><stop offset="0.5" stop-color="#5858e8"/><stop offset="1" stop-color="#b8c8f8"/></linearGradient>
<linearGradient id="ppg" x1="0" y1="0" x2="1" y2="1"><stop offset="0" stop-color="#8000c0"/><stop offset="0.5" stop-color="#606088"/><stop offset="1" stop-color="#10e010"/></linearGradient>
<radialGradient id="pdot"><stop offset="0" stop-color="#fff"/><stop offset="0.45" stop-color="#d0e0ff"/><stop offset="0.8" stop-color="#6080ff" stop-opacity="0.9"/><stop offset="1" stop-color="#4060ff" stop-opacity="0"/></radialGradient>
<linearGradient id="pbg8" x1="0" y1="0" x2="1" y2="1"><stop offset="0" stop-color="#3010ff"/><stop offset="0.5" stop-color="#1878c0"/><stop offset="1" stop-color="#10e040"/></linearGradient>
<pattern id="chk2" width="3.400" height="3.400" patternUnits="userSpaceOnUse"><rect width="3.400" height="3.400" fill="#fff"/><rect width="1.700" height="1.700" fill="#000"/><rect x="1.700" y="1.700" width="1.700" height="1.700" fill="#000"/></pattern>
<linearGradient id="pzg" x1="0" y1="0" x2="1" y2="1"><stop offset="0" stop-color="#006000"/><stop offset="0.5" stop-color="#30a030"/><stop offset="1" stop-color="#90f890"/></linearGradient>
<linearGradient id="pzm" x1="0" y1="0" x2="0" y2="1"><stop offset="0" stop-color="#d870d8"/><stop offset="0.3" stop-color="#a010a0"/><stop offset="1" stop-color="#900090"/></linearGradient>
<linearGradient id="cubT" x1="0" y1="1" x2="1" y2="0"><stop offset="0" stop-color="#1d8cf0"/><stop offset="1" stop-color="#3aa0ff"/></linearGradient>
</defs><rect x="1425.0" y="125.0" width="100.5" height="24.5" fill="#7080e0" stroke="#5868c8" stroke-width="1"/><g transform="translate(1426.1,126.3)"><rect x="0" y="0" width="22" height="22" fill="#3030ff"/><rect x="10.500" y="1" width="10.500" height="20" fill="url(#chk2)"/><path d="M1 4.500 H11 M1 8.500 H11 M1 12.500 H11 M1 16.500 H11 M4.500 1 V21 M8.500 1 V21 M1 1 V21 M1 20.500 H21" stroke="#a8b8ff" stroke-width="0.800" fill="none"/><path d="M2.500 20.500 C3 10 9 3.500 19 2.500" fill="none" stroke="#ff7a10" stroke-width="1.500"/></g><text x="1453.50" y="141.10" font-family="Liberation Sans" font-size="11" font-weight="400" fill="#fff" textLength="57.0" lengthAdjust="spacing" >Process10</text><text x="1518.30" y="132.50" font-family="Liberation Sans" font-size="5.5" font-weight="700" fill="#000" >N</text><text x="1518.30" y="146.50" font-family="Liberation Sans" font-size="5.5" font-weight="700" fill="#000" >D</text><rect x="1730.8" y="127.8" width="100.5" height="24.5" fill="#b4b4b4" stroke="#9a9a9a" stroke-width="1"/><g transform="translate(1731.8999999999999,129.1)"><rect x="0" y="0" width="22" height="22" fill="#0000ff"/><rect x="1.3" y="1.3" width="19.4" height="19.4" fill="#1a4a1a"/><path d="M1.3 1.3 H10 V11 L1.3 20.700 Z" fill="url(#pg1)"/><path d="M10.500 1.300 H20.700 V11 H10.500 Z" fill="url(#po1)"/><path d="M10 11.500 H20.700 V20.700 H1.300 Z" fill="url(#pb1)"/><path d="M10 1.300 V11.300 H20.700" stroke="#111" stroke-width="0.9" fill="none"/></g><text x="1759.30" y="143.90" font-family="Liberation Sans" font-size="11" font-weight="400" fill="#111" textLength="57.0" lengthAdjust="spacing" >Process01</text><text x="1824.10" y="135.30" font-family="Liberation Sans" font-size="5.5" font-weight="700" fill="#000" >N</text><text x="1824.10" y="149.30" font-family="Liberation Sans" font-size="5.5" font-weight="700" fill="#000" >D</text><rect x="1730.8" y="157.9" width="100.5" height="24.5" fill="#b4b4b4" stroke="#9a9a9a" stroke-width="1"/><g transform="translate(1731.8999999999999,159.20000000000002)"><rect x="0" y="0" width="22" height="22" fill="#000"/><rect x="1.3" y="1.3" width="19.4" height="19.4" fill="#ddd"/><path d="M1.3 1.3 H9 L1.300 9 Z" fill="#f0a0a0"/><path d="M9 1.300 H11 V11 H1.300 V9 Z" fill="#0000ff"/><path d="M11 1.300 L20.700 9.500 V11 H11 Z" fill="#00ff00"/><path d="M12.500 1.300 H20.700 V8.500Z" fill="#d8d0d8"/><path d="M1.300 11 H11 V20.700 L1.300 11.800 Z" fill="#8a8a8a"/><path d="M1.300 13 L9.500 20.700 H1.300 Z" fill="#a0f0a0"/><path d="M11 11 H20.700 V12 L12.500 20.700 H11 Z" fill="#ff0000"/><path d="M20.700 13.500 V20.700 H14 Z" fill="#b0b8f0"/></g><text x="1759.30" y="174.00" font-family="Liberation Sans" font-size="11" font-weight="400" fill="#111" textLength="57.0" lengthAdjust="spacing" >Process02</text><text x="1824.10" y="165.40" font-family="Liberation Sans" font-size="5.5" font-weight="700" fill="#000" >N</text><text x="1824.10" y="179.40" font-family="Liberation Sans" font-size="5.5" font-weight="700" fill="#000" >D</text><rect x="1730.8" y="187.9" width="100.5" height="24.5" fill="#b4b4b4" stroke="#9a9a9a" stroke-width="1"/><g transform="translate(1731.8999999999999,189.20000000000002)"><rect x="-1" y="-1" width="24" height="24" fill="url(#ps3)"/><text x="11" y="19.500" text-anchor="middle" font-family="Liberation Sans" font-weight="700" font-size="22" fill="url(#pso)">S</text></g><text x="1759.30" y="204.00" font-family="Liberation Sans" font-size="11" font-weight="400" fill="#111" textLength="57.0" lengthAdjust="spacing" >Process03</text><text x="1824.10" y="195.40" font-family="Liberation Sans" font-size="5.5" font-weight="700" fill="#000" >N</text><text x="1824.10" y="209.40" font-family="Liberation Sans" font-size="5.5" font-weight="700" fill="#000" >D</text><rect x="1730.8" y="217.9" width="100.5" height="24.5" fill="#b4b4b4" stroke="#9a9a9a" stroke-width="1"/><g transform="translate(1731.8999999999999,219.20000000000002)"><rect x="0" y="0" width="22" height="22" fill="#000"/><rect x="1.3" y="1.3" width="19.4" height="19.4" fill="#e8e8e8"/><path d="M6 1.300 H16 L12.500 8 H9.500 Z M6 20.700 H16 L12.500 14 H9.500 Z" fill="url(#pk5)"/><rect x="2.500" y="8.300" width="17" height="1.700" fill="#1010ff"/><rect x="2.500" y="10.200" width="17" height="1.700" fill="#10e010"/><rect x="2.500" y="12.100" width="17" height="1.700" fill="#ff1010"/></g><text x="1759.30" y="234.00" font-family="Liberation Sans" font-size="11" font-weight="400" fill="#111" textLength="57.0" lengthAdjust="spacing" >Process05</text><text x="1824.10" y="225.40" font-family="Liberation Sans" font-size="5.5" font-weight="700" fill="#000" >N</text><text x="1824.10" y="239.40" font-family="Liberation Sans" font-size="5.5" font-weight="700" fill="#000" >D</text><rect x="1730.8" y="247.9" width="100.5" height="24.5" fill="#b4b4b4" stroke="#9a9a9a" stroke-width="1"/><g transform="translate(1731.8999999999999,249.20000000000002)"><rect x="0" y="0" width="22" height="22" fill="#000"/><rect x="1.3" y="1.3" width="19.4" height="19.4" fill="#d4d4d4"/><circle cx="11" cy="6.500" r="4.300" fill="#ff0000"/><circle cx="6.300" cy="14.800" r="4.300" fill="#00e000"/><circle cx="15.700" cy="14.800" r="4.300" fill="#0000ff"/></g><text x="1759.30" y="264.00" font-family="Liberation Sans" font-size="11" font-weight="400" fill="#111" textLength="57.0" lengthAdjust="spacing" >Process06</text><text x="1824.10" y="255.40" font-family="Liberation Sans" font-size="5.5" font-weight="700" fill="#000" >N</text><text x="1824.10" y="269.40" font-family="Liberation Sans" font-size="5.5" font-weight="700" fill="#000" >D</text><rect x="1730.8" y="278.0" width="100.5" height="24.5" fill="#b4b4b4" stroke="#9a9a9a" stroke-width="1"/><g transform="translate(1731.8999999999999,279.3)"><rect x="0" y="0" width="22" height="22" fill="url(#pw7)"/><path d="M0 22 C6 18 7 3.500 11 3.500 C15 3.500 16 18 22 22 Z" fill="url(#pb7)"/></g><text x="1759.30" y="294.10" font-family="Liberation Sans" font-size="11" font-weight="400" fill="#111" textLength="57.0" lengthAdjust="spacing" >Process07</text><text x="1824.10" y="285.50" font-family="Liberation Sans" font-size="5.5" font-weight="700" fill="#000" >N</text><text x="1824.10" y="299.50" font-family="Liberation Sans" font-size="5.5" font-weight="700" fill="#000" >D</text><rect x="1759.9" y="310.75" width="100.5" height="24.5" fill="#b4b4b4" stroke="#9a9a9a" stroke-width="1"/><g transform="translate(1761.0,312.05)"><rect x="0" y="0" width="22" height="22" fill="url(#pbb)"/><rect x="0" y="0" width="22" height="3.500" fill="#1515e0"/><rect x="1" y="1" width="2" height="1.800" fill="#ff8a20"/><rect x="16" y="1" width="2" height="1.800" fill="#ff8a20"/><rect x="19" y="1" width="2" height="1.800" fill="#ff8a20"/><path d="M3 6 V19.500 H19" fill="none" stroke="#ff8a20" stroke-width="1"/><path d="M4.500 19 C5 11 9 7.500 18.500 7.500" fill="none" stroke="#ff8a20" stroke-width="1.300"/></g><text x="1788.40" y="326.85" font-family="Liberation Sans" font-size="11" font-weight="400" fill="#111" textLength="57.0" lengthAdjust="spacing" >Process12</text><text x="1853.20" y="318.25" font-family="Liberation Sans" font-size="5.5" font-weight="700" fill="#000" >N</text><text x="1853.20" y="332.25" font-family="Liberation Sans" font-size="5.5" font-weight="700" fill="#000" >D</text><rect x="1759.9" y="340.9" width="100.5" height="24.5" fill="#b4b4b4" stroke="#9a9a9a" stroke-width="1"/><g transform="translate(1761.0,342.2)"><rect x="0" y="0" width="22" height="22" fill="url(#pbb2)"/><path d="M1 4.500 H21 M1 8.500 H21 M1 12.500 H21 M1 16.500 H21 M4.500 1 V21 M8.500 1 V21 M12.500 1 V21 M16.500 1 V21 M20.500 1 V21" stroke="#b8c8ff" stroke-width="0.800" fill="none"/><path d="M1.500 20.500 C5 19 5.500 3 7 2.500 C8.500 3 8.500 15 12 17.500 C15 19.500 19 18 20.500 13.500 V20.500 Z" fill="url(#pso)"/><rect x="0.400" y="0.400" width="21.200" height="21.200" fill="none" stroke="#2020ff" stroke-width="0.800"/></g><text x="1788.40" y="357.00" font-family="Liberation Sans" font-size="11" font-weight="400" fill="#111" textLength="57.0" lengthAdjust="spacing" >Process13</text><text x="1853.20" y="348.40" font-family="Liberation Sans" font-size="5.5" font-weight="700" fill="#000" >N</text><text x="1853.20" y="362.40" font-family="Liberation Sans" font-size="5.5" font-weight="700" fill="#000" >D</text><rect x="1759.9" y="370.8" width="107.5" height="24.5" fill="#b4b4b4" stroke="#9a9a9a" stroke-width="1"/><g transform="translate(1761.0,372.1)"><rect x="0" y="0" width="22" height="22" fill="#0000ff"/><rect x="1.3" y="1.3" width="19.4" height="19.4" fill="url(#pp101)"/><path d="M11.500 1.300 L2 11 L11.500 20.700 H15 L6.500 11 L15 1.300 Z" fill="#2a2ae0" opacity="0.9"/><path d="M20.700 1.300 H18.500 L10 11 L18.500 20.700 H20.700 V17 L15 11 L20.700 5 Z" fill="#3838e8" opacity="0.85"/></g><text x="1788.40" y="386.90" font-family="Liberation Sans" font-size="11" font-weight="400" fill="#111" textLength="63.3" lengthAdjust="spacing" >Process101</text><text x="1860.20" y="378.30" font-family="Liberation Sans" font-size="5.5" font-weight="700" fill="#000" >N</text><text x="1860.20" y="392.30" font-family="Liberation Sans" font-size="5.5" font-weight="700" fill="#000" >D</text><circle cx="1862.4" cy="390.3" r="1.500" fill="#ff0000"/><rect x="1759.9" y="400.8" width="100.5" height="24.5" fill="#b4b4b4" stroke="#9a9a9a" stroke-width="1"/><g transform="translate(1761.0,402.1)"><rect x="0" y="0" width="22" height="22" fill="url(#ppg)"/><circle cx="6.3" cy="6.3" r="3.600" fill="url(#pdot)"/><circle cx="16" cy="6.3" r="3.600" fill="url(#pdot)"/><circle cx="6.3" cy="16" r="3.600" fill="url(#pdot)"/><circle cx="16" cy="16" r="3.600" fill="url(#pdot)"/></g><text x="1788.40" y="416.90" font-family="Liberation Sans" font-size="11" font-weight="400" fill="#111" textLength="57.0" lengthAdjust="spacing" >Process11</text><text x="1853.20" y="408.30" font-family="Liberation Sans" font-size="5.5" font-weight="700" fill="#000" >N</text><text x="1853.20" y="422.30" font-family="Liberation Sans" font-size="5.5" font-weight="700" fill="#000" >D</text><rect x="1733.0" y="430.1" width="100.5" height="24.5" fill="#b4b4b4" stroke="#9a9a9a" stroke-width="1"/><g transform="translate(1734.1,431.40000000000003)"><rect x="0" y="0" width="22" height="22" fill="url(#pbg8)"/><path d="M0 22 C8 19 10 14 10.300 0 H12 C12.300 14 14 19 22 22 Z" fill="#ff8200"/><path d="M1.500 7.300 H7 M3.800 4.500 L7.800 7.300 L3.800 10.100" fill="none" stroke="#20d8f0" stroke-width="1.600"/><path d="M20.500 7.300 H15 M18.200 4.500 L14.200 7.300 L18.200 10.100" fill="none" stroke="#20d8f0" stroke-width="1.600"/></g><text x="1761.50" y="446.20" font-family="Liberation Sans" font-size="11" font-weight="400" fill="#111" textLength="57.0" lengthAdjust="spacing" >Process08</text><text x="1826.30" y="437.60" font-family="Liberation Sans" font-size="5.5" font-weight="700" fill="#000" >N</text><text x="1826.30" y="451.60" font-family="Liberation Sans" font-size="5.5" font-weight="700" fill="#000" >D</text><rect x="1733.0" y="460.1" width="100.5" height="24.5" fill="#b4b4b4" stroke="#9a9a9a" stroke-width="1"/><g transform="translate(1734.1,461.40000000000003)"><rect x="0" y="0" width="22" height="22" fill="#3030ff"/><rect x="10.500" y="1" width="10.500" height="20" fill="url(#chk2)"/><path d="M1 4.500 H11 M1 8.500 H11 M1 12.500 H11 M1 16.500 H11 M4.500 1 V21 M8.500 1 V21 M1 1 V21 M1 20.500 H21" stroke="#a8b8ff" stroke-width="0.800" fill="none"/><path d="M2.500 20.500 C3 10 9 3.500 19 2.500" fill="none" stroke="#ff7a10" stroke-width="1.500"/></g><text x="1761.50" y="476.20" font-family="Liberation Sans" font-size="11" font-weight="400" fill="#111" textLength="57.0" lengthAdjust="spacing" >Process09</text><text x="1826.30" y="467.60" font-family="Liberation Sans" font-size="5.5" font-weight="700" fill="#000" >N</text><text x="1826.30" y="481.60" font-family="Liberation Sans" font-size="5.5" font-weight="700" fill="#000" >D</text><rect x="1756.8" y="490.8" width="100.5" height="24.5" fill="#b4b4b4" stroke="#9a9a9a" stroke-width="1"/><g transform="translate(1757.8999999999999,492.1)"><rect x="0" y="0" width="22" height="22" fill="url(#ppg)"/><circle cx="6.3" cy="6.3" r="3.600" fill="url(#pdot)"/><circle cx="16" cy="6.3" r="3.600" fill="url(#pdot)"/><circle cx="6.3" cy="16" r="3.600" fill="url(#pdot)"/><circle cx="16" cy="16" r="3.600" fill="url(#pdot)"/></g><text x="1785.30" y="506.90" font-family="Liberation Sans" font-size="11" font-weight="400" fill="#111" textLength="57.0" lengthAdjust="spacing" >Process15</text><text x="1850.10" y="498.30" font-family="Liberation Sans" font-size="5.5" font-weight="700" fill="#000" >N</text><text x="1850.10" y="512.30" font-family="Liberation Sans" font-size="5.5" font-weight="700" fill="#000" >D</text><rect x="1757.0" y="519.0" width="100.5" height="24.5" fill="#b4b4b4" stroke="#9a9a9a" stroke-width="1"/><g transform="translate(1758.1,520.3)"><rect x="0" y="0" width="22" height="22" fill="url(#pzg)"/><path d="M2.500 8 H8 C6.500 5.500 7.300 2 10.300 2 C13.300 2 14 5.500 12.500 8 H17.500 V12.300 C19.500 11 22 11.800 22 14.300 C22 16.800 19.500 17.500 17.500 16.300 V21 H12.500 C13 19 12 18 10.300 18 C8.500 18 7.500 19 8 21 H2.500 V16.500 C4.500 17.500 6 16.500 6 14.500 C6 12.500 4.500 11.500 2.500 12.500 Z" fill="url(#pzm)"/></g><text x="1785.50" y="535.10" font-family="Liberation Sans" font-size="11" font-weight="400" fill="#111" textLength="57.0" lengthAdjust="spacing" >Process17</text><text x="1850.30" y="526.50" font-family="Liberation Sans" font-size="5.5" font-weight="700" fill="#000" >N</text><text x="1850.30" y="540.50" font-family="Liberation Sans" font-size="5.5" font-weight="700" fill="#000" >D</text><rect x="1730.0" y="546.9" width="100.5" height="24.5" fill="#b4b4b4" stroke="#9a9a9a" stroke-width="1"/><g transform="translate(1731.1,548.1999999999999)"><rect x="0" y="0" width="22" height="22" fill="url(#pzg)"/><path d="M2.500 8 H8 C6.500 5.500 7.300 2 10.300 2 C13.300 2 14 5.500 12.500 8 H17.500 V12.300 C19.500 11 22 11.800 22 14.300 C22 16.800 19.500 17.500 17.500 16.300 V21 H12.500 C13 19 12 18 10.300 18 C8.500 18 7.500 19 8 21 H2.500 V16.500 C4.500 17.500 6 16.500 6 14.500 C6 12.500 4.500 11.500 2.500 12.500 Z" fill="url(#pzm)"/></g><text x="1758.50" y="563.00" font-family="Liberation Sans" font-size="11" font-weight="400" fill="#111" textLength="57.0" lengthAdjust="spacing" >Process16</text><text x="1823.30" y="554.40" font-family="Liberation Sans" font-size="5.5" font-weight="700" fill="#000" >N</text><text x="1823.30" y="568.40" font-family="Liberation Sans" font-size="5.5" font-weight="700" fill="#000" >D</text><rect x="1730.0" y="577.0" width="100.5" height="24.5" fill="#b4b4b4" stroke="#9a9a9a" stroke-width="1"/><g transform="translate(1731.1,578.3)"><rect x="0" y="0" width="22" height="22" fill="url(#pzg)"/><path d="M2.500 8 H8 C6.500 5.500 7.300 2 10.300 2 C13.300 2 14 5.500 12.500 8 H17.500 V12.300 C19.500 11 22 11.800 22 14.300 C22 16.800 19.500 17.500 17.500 16.300 V21 H12.500 C13 19 12 18 10.300 18 C8.500 18 7.500 19 8 21 H2.500 V16.500 C4.500 17.500 6 16.500 6 14.500 C6 12.500 4.500 11.500 2.500 12.500 Z" fill="url(#pzm)"/></g><text x="1758.50" y="593.10" font-family="Liberation Sans" font-size="11" font-weight="400" fill="#111" textLength="57.0" lengthAdjust="spacing" >Process20</text><text x="1823.30" y="584.50" font-family="Liberation Sans" font-size="5.5" font-weight="700" fill="#000" >N</text><text x="1823.30" y="598.50" font-family="Liberation Sans" font-size="5.5" font-weight="700" fill="#000" >D</text><rect x="1730.0" y="606.9" width="100.5" height="24.5" fill="#b4b4b4" stroke="#9a9a9a" stroke-width="1"/><g transform="translate(1731.1,608.1999999999999)"><rect x="0" y="0" width="22" height="22" fill="url(#pzg)"/><path d="M2.500 8 H8 C6.500 5.500 7.300 2 10.300 2 C13.300 2 14 5.500 12.500 8 H17.500 V12.300 C19.500 11 22 11.800 22 14.300 C22 16.800 19.500 17.500 17.500 16.300 V21 H12.500 C13 19 12 18 10.300 18 C8.500 18 7.500 19 8 21 H2.500 V16.500 C4.500 17.500 6 16.500 6 14.500 C6 12.500 4.500 11.500 2.500 12.500 Z" fill="url(#pzm)"/></g><text x="1758.50" y="623.00" font-family="Liberation Sans" font-size="11" font-weight="400" fill="#111" textLength="57.0" lengthAdjust="spacing" >Process21</text><text x="1823.30" y="614.40" font-family="Liberation Sans" font-size="5.5" font-weight="700" fill="#000" >N</text><text x="1823.30" y="628.40" font-family="Liberation Sans" font-size="5.5" font-weight="700" fill="#000" >D</text><rect x="1730.0" y="636.8" width="100.5" height="24.5" fill="#b4b4b4" stroke="#9a9a9a" stroke-width="1"/><g transform="translate(1731.1,638.0999999999999)"><rect x="0" y="0" width="22" height="22" fill="url(#pzg)"/><path d="M2.500 8 H8 C6.500 5.500 7.300 2 10.300 2 C13.300 2 14 5.500 12.500 8 H17.500 V12.300 C19.500 11 22 11.800 22 14.300 C22 16.800 19.500 17.500 17.500 16.300 V21 H12.500 C13 19 12 18 10.300 18 C8.500 18 7.500 19 8 21 H2.500 V16.500 C4.500 17.500 6 16.500 6 14.500 C6 12.500 4.500 11.500 2.500 12.500 Z" fill="url(#pzm)"/></g><text x="1758.50" y="652.90" font-family="Liberation Sans" font-size="11" font-weight="400" fill="#111" textLength="57.0" lengthAdjust="spacing" >Process22</text><text x="1823.30" y="644.30" font-family="Liberation Sans" font-size="5.5" font-weight="700" fill="#000" >N</text><text x="1823.30" y="658.30" font-family="Liberation Sans" font-size="5.5" font-weight="700" fill="#000" >D</text><rect x="1730.0" y="666.8" width="100.5" height="24.5" fill="#b4b4b4" stroke="#9a9a9a" stroke-width="1"/><g transform="translate(1731.1,668.0999999999999)"><rect x="0" y="0" width="22" height="22" fill="#000"/><rect x="1.3" y="1.3" width="19.4" height="19.4" fill="#ddd"/><path d="M1.3 1.3 H9 L1.300 9 Z" fill="#f0a0a0"/><path d="M9 1.300 H11 V11 H1.300 V9 Z" fill="#0000ff"/><path d="M11 1.300 L20.700 9.500 V11 H11 Z" fill="#00ff00"/><path d="M12.500 1.300 H20.700 V8.500Z" fill="#d8d0d8"/><path d="M1.300 11 H11 V20.700 L1.300 11.800 Z" fill="#8a8a8a"/><path d="M1.300 13 L9.500 20.700 H1.300 Z" fill="#a0f0a0"/><path d="M11 11 H20.700 V12 L12.500 20.700 H11 Z" fill="#ff0000"/><path d="M20.700 13.500 V20.700 H14 Z" fill="#b0b8f0"/></g><text x="1758.50" y="682.90" font-family="Liberation Sans" font-size="11" font-weight="400" fill="#111" textLength="57.0" lengthAdjust="spacing" >Process24</text><text x="1823.30" y="674.30" font-family="Liberation Sans" font-size="5.5" font-weight="700" fill="#000" >N</text><text x="1823.30" y="688.30" font-family="Liberation Sans" font-size="5.5" font-weight="700" fill="#000" >D</text><path d="M1561.5 126.8 H1696 L1704.5 135.3 V151.1 H1561.5 Z" fill="#b4b4b4" stroke="#9a9a9a" stroke-width="1"/><g transform="translate(1562,127.1) scale(1.0)"><path d="M10.500 0 L21 5.500 L10.500 11.500 L0 5.500 Z" fill="url(#cubT)"/><path d="M0 5.500 L10.500 11.500 V23.500 L0 17.500 Z" fill="#6cbcff"/><path d="M21 5.500 L10.500 11.500 V23.500 L21 17.500 Z" fill="#0c6fd0"/></g><rect x="1576.5" y="127.1" width="9.300" height="23.800" fill="#16304a"/><text transform="translate(1584.3,149.9) rotate(-90)" font-family="Liberation Sans" font-weight="700" font-size="9.800" fill="#fff" textLength="22" lengthAdjust="spacingAndGlyphs">XISF</text><text x="1590.00" y="143.10" font-family="Liberation Sans" font-size="11" font-weight="400" fill="#111" textLength="93.5" lengthAdjust="spacing" >Red_Driz_Master</text><text x="1696.50" y="148.30" font-family="Liberation Sans" font-size="5.5" font-weight="700" fill="#000" >N</text><path d="M1561.5 156.8 H1709 L1717.5 165.3 V181.10000000000002 H1561.5 Z" fill="#b4b4b4" stroke="#9a9a9a" stroke-width="1"/><g transform="translate(1562,157.10000000000002) scale(1.0)"><path d="M10.500 0 L21 5.500 L10.500 11.500 L0 5.500 Z" fill="url(#cubT)"/><path d="M0 5.500 L10.500 11.500 V23.500 L0 17.500 Z" fill="#6cbcff"/><path d="M21 5.500 L10.500 11.500 V23.500 L21 17.500 Z" fill="#0c6fd0"/></g><rect x="1576.5" y="157.10000000000002" width="9.300" height="23.800" fill="#16304a"/><text transform="translate(1584.3,179.9) rotate(-90)" font-family="Liberation Sans" font-weight="700" font-size="9.800" fill="#fff" textLength="22" lengthAdjust="spacingAndGlyphs">XISF</text><text x="1590.00" y="173.10" font-family="Liberation Sans" font-size="11" font-weight="400" fill="#111" textLength="106.5" lengthAdjust="spacing" >Green_Driz_Master</text><text x="1709.50" y="178.30" font-family="Liberation Sans" font-size="5.5" font-weight="700" fill="#000" >N</text><path d="M1561.5 186.8 H1699 L1707.5 195.3 V211.10000000000002 H1561.5 Z" fill="#b4b4b4" stroke="#9a9a9a" stroke-width="1"/><g transform="translate(1562,187.10000000000002) scale(1.0)"><path d="M10.500 0 L21 5.500 L10.500 11.500 L0 5.500 Z" fill="url(#cubT)"/><path d="M0 5.500 L10.500 11.500 V23.500 L0 17.500 Z" fill="#6cbcff"/><path d="M21 5.500 L10.500 11.500 V23.500 L21 17.500 Z" fill="#0c6fd0"/></g><rect x="1576.5" y="187.10000000000002" width="9.300" height="23.800" fill="#16304a"/><text transform="translate(1584.3,209.9) rotate(-90)" font-family="Liberation Sans" font-weight="700" font-size="9.800" fill="#fff" textLength="22" lengthAdjust="spacingAndGlyphs">XISF</text><text x="1590.00" y="203.10" font-family="Liberation Sans" font-size="11" font-weight="400" fill="#111" textLength="96.5" lengthAdjust="spacing" >Blue_Driz_Master</text><text x="1699.50" y="208.30" font-family="Liberation Sans" font-size="5.5" font-weight="700" fill="#000" >N</text><path d="M1563.5 217.0 H1653 L1661.5 225.5 V241.3 H1563.5 Z" fill="#b4b4b4" stroke="#9a9a9a" stroke-width="1"/><g transform="translate(1565.5,217.4) scale(1.0)"><path d="M10.500 0 L21 5.500 L10.500 11.500 L0 5.500 Z" fill="url(#cubT)"/><path d="M0 5.500 L10.500 11.500 V23.500 L0 17.500 Z" fill="#6cbcff"/><path d="M21 5.500 L10.500 11.500 V23.500 L21 17.500 Z" fill="#0c6fd0"/></g><text x="1592.00" y="233.30" font-family="Liberation Sans" font-size="11" font-weight="400" fill="#111" textLength="48.0" lengthAdjust="spacing" >Image10</text><text x="1653.50" y="238.50" font-family="Liberation Sans" font-size="5.5" font-weight="700" fill="#000" >N</text><path d="M1656.7 278.0 H1716.7 L1725.2 286.5 V302.3 H1656.7 Z" fill="#b4b4b4" stroke="#9a9a9a" stroke-width="1"/><g transform="translate(1658.7,278.4) scale(1.0)"><path d="M10.500 0 L21 5.500 L10.500 11.500 L0 5.500 Z" fill="url(#cubT)"/><path d="M0 5.500 L10.500 11.500 V23.500 L0 17.500 Z" fill="#6cbcff"/><path d="M21 5.500 L10.500 11.500 V23.500 L21 17.500 Z" fill="#0c6fd0"/></g><text x="1685.20" y="294.30" font-family="Liberation Sans" font-size="11" font-weight="400" fill="#111" textLength="20.0" lengthAdjust="spacing" >PSF</text><text x="1717.20" y="299.50" font-family="Liberation Sans" font-size="5.5" font-weight="700" fill="#000" >N</text><path d="M1623.0 311.7 H1747.5 L1756.0 320.2 V336.0 H1623.0 Z" fill="#b4b4b4" stroke="#9a9a9a" stroke-width="1"/><g transform="translate(1625.0,312.09999999999997) scale(1.0)"><path d="M10.500 0 L21 5.500 L10.500 11.500 L0 5.500 Z" fill="url(#cubT)"/><path d="M0 5.500 L10.500 11.500 V23.500 L0 17.500 Z" fill="#6cbcff"/><path d="M21 5.500 L10.500 11.500 V23.500 L21 17.500 Z" fill="#0c6fd0"/></g><text x="1651.50" y="328.00" font-family="Liberation Sans" font-size="11" font-weight="400" fill="#111" textLength="84.5" lengthAdjust="spacing" >Image10_clone</text><text x="1748.00" y="333.20" font-family="Liberation Sans" font-size="5.5" font-weight="700" fill="#000" >N</text><path d="M1641.7 401.7 H1746.7 L1755.2 410.2 V426.0 H1641.7 Z" fill="#b4b4b4" stroke="#9a9a9a" stroke-width="1"/><g transform="translate(1643.7,402.09999999999997) scale(1.0)"><path d="M10.500 0 L21 5.500 L10.500 11.500 L0 5.500 Z" fill="url(#cubT)"/><path d="M0 5.500 L10.500 11.500 V23.500 L0 17.500 Z" fill="#6cbcff"/><path d="M21 5.500 L10.500 11.500 V23.500 L21 17.500 Z" fill="#0c6fd0"/></g><text x="1670.20" y="418.00" font-family="Liberation Sans" font-size="11" font-weight="400" fill="#111" textLength="64.0" lengthAdjust="spacing" >star_mask1</text><text x="1747.20" y="423.20" font-family="Liberation Sans" font-size="5.5" font-weight="700" fill="#000" >N</text><path d="M1647.8 518.1 H1746.5 L1755.0 526.6 V542.4 H1647.8 Z" fill="#b4b4b4" stroke="#9a9a9a" stroke-width="1"/><g transform="translate(1649.8,518.5) scale(1.0)"><path d="M10.500 0 L21 5.500 L10.500 11.500 L0 5.500 Z" fill="url(#cubT)"/><path d="M0 5.500 L10.500 11.500 V23.500 L0 17.500 Z" fill="#6cbcff"/><path d="M21 5.500 L10.500 11.500 V23.500 L21 17.500 Z" fill="#0c6fd0"/></g><text x="1676.30" y="534.40" font-family="Liberation Sans" font-size="11" font-weight="400" fill="#111" textLength="57.5" lengthAdjust="spacing" >star_mask</text><text x="1747.00" y="539.60" font-family="Liberation Sans" font-size="5.5" font-weight="700" fill="#000" >N</text><path d="M1613.7 547.7 H1716.4 L1724.9 556.2 V572.0 H1613.7 Z" fill="#b4b4b4" stroke="#9a9a9a" stroke-width="1"/><g transform="translate(1615.7,548.1) scale(1.0)"><path d="M10.500 0 L21 5.500 L10.500 11.500 L0 5.500 Z" fill="url(#cubT)"/><path d="M0 5.500 L10.500 11.500 V23.500 L0 17.500 Z" fill="#6cbcff"/><path d="M21 5.500 L10.500 11.500 V23.500 L21 17.500 Z" fill="#0c6fd0"/></g><text x="1642.20" y="564.00" font-family="Liberation Sans" font-size="11" font-weight="400" fill="#111" textLength="62.0" lengthAdjust="spacing" >Image10_R</text><text x="1716.90" y="569.20" font-family="Liberation Sans" font-size="5.5" font-weight="700" fill="#000" >N</text><path d="M1613.7 575.0 H1717.2 L1725.7 583.5 V599.3 H1613.7 Z" fill="#b4b4b4" stroke="#9a9a9a" stroke-width="1"/><g transform="translate(1615.7,575.4) scale(1.0)"><path d="M10.500 0 L21 5.500 L10.500 11.500 L0 5.500 Z" fill="url(#cubT)"/><path d="M0 5.500 L10.500 11.500 V23.500 L0 17.500 Z" fill="#6cbcff"/><path d="M21 5.500 L10.500 11.500 V23.500 L21 17.500 Z" fill="#0c6fd0"/></g><text x="1642.20" y="591.30" font-family="Liberation Sans" font-size="11" font-weight="400" fill="#111" textLength="63.0" lengthAdjust="spacing" >Image10_G</text><text x="1717.70" y="596.50" font-family="Liberation Sans" font-size="5.5" font-weight="700" fill="#000" >N</text><path d="M1613.7 638.0 H1716.4 L1724.9 646.5 V662.3 H1613.7 Z" fill="#b4b4b4" stroke="#9a9a9a" stroke-width="1"/><g transform="translate(1615.7,638.4) scale(1.0)"><path d="M10.500 0 L21 5.500 L10.500 11.500 L0 5.500 Z" fill="url(#cubT)"/><path d="M0 5.500 L10.500 11.500 V23.500 L0 17.500 Z" fill="#6cbcff"/><path d="M21 5.500 L10.500 11.500 V23.500 L21 17.500 Z" fill="#0c6fd0"/></g><text x="1642.20" y="654.30" font-family="Liberation Sans" font-size="11" font-weight="400" fill="#111" textLength="62.0" lengthAdjust="spacing" >Image10_B</text><text x="1716.90" y="659.50" font-family="Liberation Sans" font-size="5.5" font-weight="700" fill="#000" >N</text></svg>
<div style="left:1059px;top:457px;width:523px;height:313px;opacity:0.8;"><div style="left:0px;top:0px;width:523px;height:313px;background:#747474;"></div><div style="left:2px;top:25px;width:519px;height:263px;background:#e5e5e7;"></div><div style="left:2px;top:288px;width:519px;height:23px;background:#ccc7bd;"></div><div style="left:0px;top:311px;width:523px;height:2px;background:#8a8a8a;"></div><span style="left:198.20px;top:5.09px;font:700 12.5px/normal 'Liberation Sans',sans-serif;color:#ececec;letter-spacing:1.360px;white-space:pre;">MaskedStretch</span><svg style="left:5px;top:5px;" width="17" height="17" viewBox="0 0 17 17"><rect width="17" height="17" fill="#3a3af0"/><rect x="8.500" y="0.500" width="8" height="16" fill="url(#chk2)"/><path d="M0.500 3.500 H9 M0.500 6.800 H9 M0.500 10 H9 M0.500 13.300 H9 M3.500 0.500 V16.500 M6.500 0.500 V16.500" stroke="#a8b8ff" stroke-width="0.700"/><path d="M1.500 16 C2 8 7 3 15.500 1.500" fill="none" stroke="#ff7a10" stroke-width="1.400"/></svg><svg style="left:484px;top:9px;" width="11" height="9" viewBox="0 0 11 9"><rect x="0.300" y="0.600" width="10" height="1.900" fill="#f4f4f4"/><path d="M5.300 3.300 L10.300 7.800 H0.300 Z" fill="#f4f4f4"/></svg><svg style="left:505px;top:8px;" width="11" height="11" viewBox="0 0 11 11"><path d="M1 1 L10 10 M10 1 L1 10" stroke="#f4f4f4" stroke-width="2.100"/></svg><span style="left:33.70px;top:35.24px;font:400 11px/normal 'Liberation Sans',sans-serif;color:#000;letter-spacing:0.913px;white-space:pre;">Target background:</span><span style="left:87.80px;top:60.25px;font:400 11px/normal 'Liberation Sans',sans-serif;color:#000;letter-spacing:0.745px;white-space:pre;">Iterations:</span><span style="left:49.00px;top:84.25px;font:400 11px/normal 'Liberation Sans',sans-serif;color:#000;letter-spacing:0.743px;white-space:pre;">Clipping fraction:</span><span style="left:48.10px;top:109.25px;font:400 11px/normal 'Liberation Sans',sans-serif;color:#000;letter-spacing:0.855px;white-space:pre;">Color mask type:</span><span style="left:15.40px;top:133.25px;font:400 11px/normal 'Liberation Sans',sans-serif;color:#000;letter-spacing:0.839px;white-space:pre;">Background reference:</span><span style="left:79.10px;top:157.25px;font:400 11px/normal 'Liberation Sans',sans-serif;color:#000;letter-spacing:0.798px;white-space:pre;">Lower limit:</span><span style="left:79.10px;top:182.25px;font:400 11px/normal 'Liberation Sans',sans-serif;color:#000;letter-spacing:0.798px;white-space:pre;">Upper limit:</span><div style="left:149px;top:31px;width:91px;height:20px;background:#fff;border:2px solid #78a6f8;"></div><span style="left:156.40px;top:35.15px;font:400 11px/normal 'Liberation Sans',sans-serif;color:#000;letter-spacing:0.748px;white-space:pre;">0.12500000</span><div style="left:223px;top:34px;width:1px;height:14px;background:#000;"></div><div style="left:149px;top:56px;width:68px;height:20px;background:#fff;border:1px solid #777;"></div><div style="left:202px;top:57px;width:14px;height:18px;background:linear-gradient(#f0f0f0,#c4c4c4);"></div><span style="left:156.40px;top:60.25px;font:400 11px/normal 'Liberation Sans',sans-serif;color:#000;letter-spacing:0.549px;white-space:pre;">100</span><svg style="left:205px;top:59px;" width="9" height="14" viewBox="0 0 9 14"><path d="M4.500 0.300 L8 4 H1 Z M4.500 13 L8 9.300 H1 Z" fill="#111"/></svg><div style="left:149px;top:80px;width:91px;height:20px;background:#fff;border:1px solid #777;"></div><span style="left:156.40px;top:84.15px;font:400 11px/normal 'Liberation Sans',sans-serif;color:#000;letter-spacing:0.748px;white-space:pre;">0.05000000</span><svg style="left:246px;top:84px;" width="16" height="12" viewBox="0 0 16 12"><path d="M0.800 6 L5.300 1 H15 V11 H5.300 Z" fill="#555"/><path d="M7.500 3.500 L12.500 8.500 M12.500 3.500 L7.500 8.500" stroke="#fff" stroke-width="1.700"/></svg><div style="left:149px;top:105px;width:110px;height:20px;background:linear-gradient(#f6f6f6,#c8c8c8);border:1px solid #777;border-radius:1px;"></div><span style="left:155.40px;top:109.15px;font:400 11px/normal 'Liberation Sans',sans-serif;color:#000;letter-spacing:0.488px;white-space:pre;">HSI Intensity</span><div style="left:241px;top:107px;width:1px;height:16px;background:#a0a0a0;"></div><svg style="left:244px;top:113px;" width="11" height="6" viewBox="0 0 11 6"><path d="M0.700 0.200 H10 L5.350 5.300 Z" fill="#111"/></svg><div style="left:149px;top:129px;width:342px;height:20px;background:#fff;border:1px solid #777;"></div><span style="left:156.50px;top:133.25px;font:400 11px/normal 'Liberation Sans',sans-serif;color:#000;letter-spacing:0.734px;white-space:pre;">Syn_Lum_Master-&gt;Preview01</span><svg style="left:499px;top:134px;" width="11" height="11" viewBox="0 0 11 11"><rect x="0.800" y="0.800" width="9.400" height="9.400" fill="#fff" stroke="#333" stroke-width="1.100"/><rect x="0.300" y="0.300" width="10.400" height="2.800" fill="#333"/></svg><div style="left:149px;top:153px;width:91px;height:20px;background:#fff;border:1px solid #777;"></div><span style="left:156.40px;top:157.15px;font:400 11px/normal 'Liberation Sans',sans-serif;color:#000;letter-spacing:0.748px;white-space:pre;">0.00000000</span><div style="left:149px;top:178px;width:91px;height:20px;background:#fff;border:1px solid #777;"></div><span style="left:156.40px;top:182.15px;font:400 11px/normal 'Liberation Sans',sans-serif;color:#000;letter-spacing:0.748px;white-space:pre;">0.02800000</span><div style="left:244px;top:39px;width:271px;height:5px;background:#fff;border:1px solid #777;"></div><div style="left:244px;top:39px;width:38.40000000000009px;height:5px;background:#b0b0b0;border:1px solid #777;"></div><div style="left:276.9000000000001px;top:36.0px;width:11px;height:11px;background:linear-gradient(#f0f0f0,#d2d2d2);border:1px solid #777;border-radius:6px;"></div><div style="left:244px;top:161px;width:271px;height:5px;background:#fff;border:1px solid #777;"></div><div style="left:243.70000000000005px;top:158.0px;width:11px;height:11px;background:linear-gradient(#f0f0f0,#d2d2d2);border:1px solid #777;border-radius:6px;"></div><div style="left:244px;top:186px;width:271px;height:5px;background:#fff;border:1px solid #777;"></div><div style="left:244px;top:186px;width:13.200000000000045px;height:5px;background:#b0b0b0;border:1px solid #777;"></div><div style="left:251.70000000000005px;top:183.0px;width:11px;height:11px;background:linear-gradient(#f0f0f0,#d2d2d2);border:1px solid #777;border-radius:6px;"></div><div style="left:8px;top:210px;width:507px;height:72px;border:1px solid #808080;"></div><div style="left:22px;top:203px;width:147px;height:15px;background:#e5e5e7;"></div><div style="left:27px;top:204px;width:13px;height:13px;background:#fbfbfb;border:1px solid #6a6a6a;"></div><span style="left:49.50px;top:205.25px;font:700 11px/normal 'Liberation Sans',sans-serif;color:#0454b8;letter-spacing:1.166px;white-space:pre;">Region of Interest</span><div style="left:149px;top:229px;width:91px;height:20px;background:#d8d8d8;border:1px solid #777;"></div><div style="left:225px;top:230px;width:14px;height:18px;background:linear-gradient(#eaeaea,#c8c8c8);"></div><span style="left:156.50px;top:233.15px;font:400 11px/normal 'Liberation Sans',sans-serif;color:#9a9a9a;white-space:pre;">0</span><svg style="left:228px;top:232px;" width="9" height="14" viewBox="0 0 9 14"><path d="M4.500 0.500 L8 4.200 H1 Z M4.500 13.200 L8 9.500 H1 Z" fill="#8a8a8a"/></svg><div style="left:295px;top:229px;width:91px;height:20px;background:#d8d8d8;border:1px solid #777;"></div><div style="left:371px;top:230px;width:14px;height:18px;background:linear-gradient(#eaeaea,#c8c8c8);"></div><span style="left:302.50px;top:233.15px;font:400 11px/normal 'Liberation Sans',sans-serif;color:#9a9a9a;white-space:pre;">0</span><svg style="left:374px;top:232px;" width="9" height="14" viewBox="0 0 9 14"><path d="M4.500 0.500 L8 4.200 H1 Z M4.500 13.200 L8 9.500 H1 Z" fill="#8a8a8a"/></svg><div style="left:149px;top:254px;width:91px;height:20px;background:#d8d8d8;border:1px solid #777;"></div><div style="left:225px;top:255px;width:14px;height:18px;background:linear-gradient(#eaeaea,#c8c8c8);"></div><span style="left:156.50px;top:258.15px;font:400 11px/normal 'Liberation Sans',sans-serif;color:#9a9a9a;white-space:pre;">0</span><svg style="left:228px;top:257px;" width="9" height="14" viewBox="0 0 9 14"><path d="M4.500 0.500 L8 4.200 H1 Z M4.500 13.200 L8 9.500 H1 Z" fill="#8a8a8a"/></svg><div style="left:295px;top:254px;width:91px;height:20px;background:#d8d8d8;border:1px solid #777;"></div><div style="left:371px;top:255px;width:14px;height:18px;background:linear-gradient(#eaeaea,#c8c8c8);"></div><span style="left:302.50px;top:258.15px;font:400 11px/normal 'Liberation Sans',sans-serif;color:#9a9a9a;white-space:pre;">0</span><svg style="left:374px;top:257px;" width="9" height="14" viewBox="0 0 9 14"><path d="M4.500 0.500 L8 4.200 H1 Z M4.500 13.200 L8 9.500 H1 Z" fill="#8a8a8a"/></svg><span style="left:120.30px;top:233.25px;font:400 11px/normal 'Liberation Sans',sans-serif;color:#9a9a9a;letter-spacing:0.519px;white-space:pre;">Left:</span><span style="left:109.50px;top:258.25px;font:400 11px/normal 'Liberation Sans',sans-serif;color:#9a9a9a;letter-spacing:0.604px;white-space:pre;">Width:</span><span style="left:266.00px;top:233.25px;font:400 11px/normal 'Liberation Sans',sans-serif;color:#9a9a9a;letter-spacing:0.902px;white-space:pre;">Top:</span><span style="left:251.30px;top:258.25px;font:400 11px/normal 'Liberation Sans',sans-serif;color:#9a9a9a;letter-spacing:0.607px;white-space:pre;">Height:</span><div style="left:402px;top:253px;width:106px;height:22px;background:#d8d8d8;border:1px solid #777;"></div><span style="left:416.35px;top:258.34px;font:400 11px/normal 'Liberation Sans',sans-serif;color:#9a9a9a;letter-spacing:0.788px;white-space:pre;">From Preview</span><svg style="left:10px;top:294px;" width="12" height="12" viewBox="0 0 12 12"><path d="M0.500 0.500 L11.500 11.500 H0.500 Z" fill="#0058c8"/></svg><svg style="left:36px;top:294px;" width="12" height="12" viewBox="0 0 12 12"><rect x="0.300" y="0.300" width="11" height="11" fill="#0058c8"/></svg><svg style="left:451px;top:294px;" width="12" height="12" viewBox="0 0 12 12"><rect x="1" y="1" width="10" height="10" fill="none" stroke="#0058c8" stroke-width="1.700"/></svg><svg style="left:475px;top:294px;" width="13" height="12" viewBox="0 0 13 12"><path d="M1 1 H7 L11.500 5.500 V11 H1 Z" fill="none" stroke="#0058c8" stroke-width="1.700"/><path d="M7 1 V5.500 H11.500" fill="none" stroke="#0058c8" stroke-width="1.300"/></svg><svg style="left:500px;top:293px;" width="14" height="14" viewBox="0 0 14 14"><g transform="rotate(0 7 7)"><path d="M0.800 0.800 L4 4" stroke="#0058c8" stroke-width="1.700"/><path d="M6 6 H1.800 L6 1.800 Z" fill="#0058c8"/></g><g transform="rotate(90 7 7)"><path d="M0.800 0.800 L4 4" stroke="#0058c8" stroke-width="1.700"/><path d="M6 6 H1.800 L6 1.800 Z" fill="#0058c8"/></g><g transform="rotate(180 7 7)"><path d="M0.800 0.800 L4 4" stroke="#0058c8" stroke-width="1.700"/><path d="M6 6 H1.800 L6 1.800 Z" fill="#0058c8"/></g><g transform="rotate(270 7 7)"><path d="M0.800 0.800 L4 4" stroke="#0058c8" stroke-width="1.700"/><path d="M6 6 H1.800 L6 1.800 Z" fill="#0058c8"/></g></svg></div>
<svg style="left:0;top:0" width="1920" height="1080" viewBox="0 0 1920 1080"><defs><linearGradient id="sqb" x1="0" y1="0" x2="1" y2="1"><stop offset="0" stop-color="#6a9cff"/><stop offset="0.5" stop-color="#2f63d8"/><stop offset="1" stop-color="#1844a8"/></linearGradient><linearGradient id="sqg" x1="0" y1="0" x2="1" y2="1"><stop offset="0" stop-color="#8a8a8a"/><stop offset="0.5" stop-color="#4e4e4e"/><stop offset="1" stop-color="#303030"/></linearGradient></defs><rect x="5.8" y="1051.8999999999999" width="1" height="1" fill="#fff"/><rect x="6.5" y="1052.6" width="1.300" height="1.300" fill="#3c3c3c"/><rect x="9.8" y="1051.8999999999999" width="1" height="1" fill="#fff"/><rect x="10.5" y="1052.6" width="1.300" height="1.300" fill="#3c3c3c"/><rect x="7.8" y="1053.8999999999999" width="1" height="1" fill="#fff"/><rect x="8.5" y="1054.6" width="1.300" height="1.300" fill="#3c3c3c"/><rect x="5.8" y="1055.8999999999999" width="1" height="1" fill="#fff"/><rect x="6.5" y="1056.6" width="1.300" height="1.300" fill="#3c3c3c"/><rect x="9.8" y="1055.8999999999999" width="1" height="1" fill="#fff"/><rect x="10.5" y="1056.6" width="1.300" height="1.300" fill="#3c3c3c"/><rect x="7.8" y="1057.8999999999999" width="1" height="1" fill="#fff"/><rect x="8.5" y="1058.6" width="1.300" height="1.300" fill="#3c3c3c"/><rect x="5.8" y="1059.8999999999999" width="1" height="1" fill="#fff"/><rect x="6.5" y="1060.6" width="1.300" height="1.300" fill="#3c3c3c"/><rect x="9.8" y="1059.8999999999999" width="1" height="1" fill="#fff"/><rect x="10.5" y="1060.6" width="1.300" height="1.300" fill="#3c3c3c"/><rect x="7.8" y="1061.8999999999999" width="1" height="1" fill="#fff"/><rect x="8.5" y="1062.6" width="1.300" height="1.300" fill="#3c3c3c"/><rect x="5.8" y="1063.8999999999999" width="1" height="1" fill="#fff"/><rect x="6.5" y="1064.6" width="1.300" height="1.300" fill="#3c3c3c"/><rect x="9.8" y="1063.8999999999999" width="1" height="1" fill="#fff"/><rect x="10.5" y="1064.6" width="1.300" height="1.300" fill="#3c3c3c"/><rect x="7.8" y="1065.8999999999999" width="1" height="1" fill="#fff"/><rect x="8.5" y="1066.6" width="1.300" height="1.300" fill="#3c3c3c"/><rect x="5.8" y="1067.8999999999999" width="1" height="1" fill="#fff"/><rect x="6.5" y="1068.6" width="1.300" height="1.300" fill="#3c3c3c"/><rect x="9.8" y="1067.8999999999999" width="1" height="1" fill="#fff"/><rect x="10.5" y="1068.6" width="1.300" height="1.300" fill="#3c3c3c"/><rect x="7.8" y="1069.8999999999999" width="1" height="1" fill="#fff"/><rect x="8.5" y="1070.6" width="1.300" height="1.300" fill="#3c3c3c"/><rect x="5.8" y="1071.8999999999999" width="1" height="1" fill="#fff"/><rect x="6.5" y="1072.6" width="1.300" height="1.300" fill="#3c3c3c"/><rect x="9.8" y="1071.8999999999999" width="1" height="1" fill="#fff"/><rect x="10.5" y="1072.6" width="1.300" height="1.300" fill="#3c3c3c"/><rect x="348.8" y="1051.8999999999999" width="1" height="1" fill="#fff"/><rect x="349.5" y="1052.6" width="1.300" height="1.300" fill="#3c3c3c"/><rect x="352.8" y="1051.8999999999999" width="1" height="1" fill="#fff"/><rect x="353.5" y="1052.6" width="1.300" height="1.300" fill="#3c3c3c"/><rect x="350.8" y="1053.8999999999999" width="1" height="1" fill="#fff"/><rect x="351.5" y="1054.6" width="1.300" height="1.300" fill="#3c3c3c"/><rect x="348.8" y="1055.8999999999999" width="1" height="1" fill="#fff"/><rect x="349.5" y="1056.6" width="1.300" height="1.300" fill="#3c3c3c"/><rect x="352.8" y="1055.8999999999999" width="1" height="1" fill="#fff"/><rect x="353.5" y="1056.6" width="1.300" height="1.300" fill="#3c3c3c"/><rect x="350.8" y="1057.8999999999999" width="1" height="1" fill="#fff"/><rect x="351.5" y="1058.6" width="1.300" height="1.300" fill="#3c3c3c"/><rect x="348.8" y="1059.8999999999999" width="1" height="1" fill="#fff"/><rect x="349.5" y="1060.6" width="1.300" height="1.300" fill="#3c3c3c"/><rect x="352.8" y="1059.8999999999999" width="1" height="1" fill="#fff"/><rect x="353.5" y="1060.6" width="1.300" height="1.300" fill="#3c3c3c"/><rect x="350.8" y="1061.8999999999999" width="1" height="1" fill="#fff"/><rect x="351.5" y="1062.6" width="1.300" height="1.300" fill="#3c3c3c"/><rect x="348.8" y="1063.8999999999999" width="1" height="1" fill="#fff"/><rect x="349.5" y="1064.6" width="1.300" height="1.300" fill="#3c3c3c"/><rect x="352.8" y="1063.8999999999999" width="1" height="1" fill="#fff"/><rect x="353.5" y="1064.6" width="1.300" height="1.300" fill="#3c3c3c"/><rect x="350.8" y="1065.8999999999999" width="1" height="1" fill="#fff"/><rect x="351.5" y="1066.6" width="1.300" height="1.300" fill="#3c3c3c"/><rect x="348.8" y="1067.8999999999999" width="1" height="1" fill="#fff"/><rect x="349.5" y="1068.6" width="1.300" height="1.300" fill="#3c3c3c"/><rect x="352.8" y="1067.8999999999999" width="1" height="1" fill="#fff"/><rect x="353.5" y="1068.6" width="1.300" height="1.300" fill="#3c3c3c"/><rect x="350.8" y="1069.8999999999999" width="1" height="1" fill="#fff"/><rect x="351.5" y="1070.6" width="1.300" height="1.300" fill="#3c3c3c"/><rect x="348.8" y="1071.8999999999999" width="1" height="1" fill="#fff"/><rect x="349.5" y="1072.6" width="1.300" height="1.300" fill="#3c3c3c"/><rect x="352.8" y="1071.8999999999999" width="1" height="1" fill="#fff"/><rect x="353.5" y="1072.6" width="1.300" height="1.300" fill="#3c3c3c"/><rect x="458.8" y="1051.8999999999999" width="1" height="1" fill="#fff"/><rect x="459.5" y="1052.6" width="1.300" height="1.300" fill="#3c3c3c"/><rect x="462.8" y="1051.8999999999999" width="1" height="1" fill="#fff"/><rect x="463.5" y="1052.6" width="1.300" height="1.300" fill="#3c3c3c"/><rect x="460.8" y="1053.8999999999999" width="1" height="1" fill="#fff"/><rect x="461.5" y="1054.6" width="1.300" height="1.300" fill="#3c3c3c"/><rect x="458.8" y="1055.8999999999999" width="1" height="1" fill="#fff"/><rect x="459.5" y="1056.6" width="1.300" height="1.300" fill="#3c3c3c"/><rect x="462.8" y="1055.8999999999999" width="1" height="1" fill="#fff"/><rect x="463.5" y="1056.6" width="1.300" height="1.300" fill="#3c3c3c"/><rect x="460.8" y="1057.8999999999999" width="1" height="1" fill="#fff"/><rect x="461.5" y="1058.6" width="1.300" height="1.300" fill="#3c3c3c"/><rect x="458.8" y="1059.8999999999999" width="1" height="1" fill="#fff"/><rect x="459.5" y="1060.6" width="1.300" height="1.300" fill="#3c3c3c"/><rect x="462.8" y="1059.8999999999999" width="1" height="1" fill="#fff"/><rect x="463.5" y="1060.6" width="1.300" height="1.300" fill="#3c3c3c"/><rect x="460.8" y="1061.8999999999999" width="1" height="1" fill="#fff"/><rect x="461.5" y="1062.6" width="1.300" height="1.300" fill="#3c3c3c"/><rect x="458.8" y="1063.8999999999999" width="1" height="1" fill="#fff"/><rect x="459.5" y="1064.6" width="1.300" height="1.300" fill="#3c3c3c"/><rect x="462.8" y="1063.8999999999999" width="1" height="1" fill="#fff"/><rect x="463.5" y="1064.6" width="1.300" height="1.300" fill="#3c3c3c"/><rect x="460.8" y="1065.8999999999999" width="1" height="1" fill="#fff"/><rect x="461.5" y="1066.6" width="1.300" height="1.300" fill="#3c3c3c"/><rect x="458.8" y="1067.8999999999999" width="1" height="1" fill="#fff"/><rect x="459.5" y="1068.6" width="1.300" height="1.300" fill="#3c3c3c"/><rect x="462.8" y="1067.8999999999999" width="1" height="1" fill="#fff"/><rect x="463.5" y="1068.6" width="1.300" height="1.300" fill="#3c3c3c"/><rect x="460.8" y="1069.8999999999999" width="1" height="1" fill="#fff"/><rect x="461.5" y="1070.6" width="1.300" height="1.300" fill="#3c3c3c"/><rect x="458.8" y="1071.8999999999999" width="1" height="1" fill="#fff"/><rect x="459.5" y="1072.6" width="1.300" height="1.300" fill="#3c3c3c"/><rect x="462.8" y="1071.8999999999999" width="1" height="1" fill="#fff"/><rect x="463.5" y="1072.6" width="1.300" height="1.300" fill="#3c3c3c"/><rect x="663.8" y="1051.8999999999999" width="1" height="1" fill="#fff"/><rect x="664.5" y="1052.6" width="1.300" height="1.300" fill="#3c3c3c"/><rect x="667.8" y="1051.8999999999999" width="1" height="1" fill="#fff"/><rect x="668.5" y="1052.6" width="1.300" height="1.300" fill="#3c3c3c"/><rect x="665.8" y="1053.8999999999999" width="1" height="1" fill="#fff"/><rect x="666.5" y="1054.6" width="1.300" height="1.300" fill="#3c3c3c"/><rect x="663.8" y="1055.8999999999999" width="1" height="1" fill="#fff"/><rect x="664.5" y="1056.6" width="1.300" height="1.300" fill="#3c3c3c"/><rect x="667.8" y="1055.8999999999999" width="1" height="1" fill="#fff"/><rect x="668.5" y="1056.6" width="1.300" height="1.300" fill="#3c3c3c"/><rect x="665.8" y="1057.8999999999999" width="1" height="1" fill="#fff"/><rect x="666.5" y="1058.6" width="1.300" height="1.300" fill="#3c3c3c"/><rect x="663.8" y="1059.8999999999999" width="1" height="1" fill="#fff"/><rect x="664.5" y="1060.6" width="1.300" height="1.300" fill="#3c3c3c"/><rect x="667.8" y="1059.8999999999999" width="1" height="1" fill="#fff"/><rect x="668.5" y="1060.6" width="1.300" height="1.300" fill="#3c3c3c"/><rect x="665.8" y="1061.8999999999999" width="1" height="1" fill="#fff"/><rect x="666.5" y="1062.6" width="1.300" height="1.300" fill="#3c3c3c"/><rect x="663.8" y="1063.8999999999999" width="1" height="1" fill="#fff"/><rect x="664.5" y="1064.6" width="1.300" height="1.300" fill="#3c3c3c"/><rect x="667.8" y="1063.8999999999999" width="1" height="1" fill="#fff"/><rect x="668.5" y="1064.6" width="1.300" height="1.300" fill="#3c3c3c"/><rect x="665.8" y="1065.8999999999999" width="1" height="1" fill="#fff"/><rect x="666.5" y="1066.6" width="1.300" height="1.300" fill="#3c3c3c"/><rect x="663.8" y="1067.8999999999999" width="1" height="1" fill="#fff"/><rect x="664.5" y="1068.6" width="1.300" height="1.300" fill="#3c3c3c"/><rect x="667.8" y="1067.8999999999999" width="1" height="1" fill="#fff"/><rect x="668.5" y="1068.6" width="1.300" height="1.300" fill="#3c3c3c"/><rect x="665.8" y="1069.8999999999999" width="1" height="1" fill="#fff"/><rect x="666.5" y="1070.6" width="1.300" height="1.300" fill="#3c3c3c"/><rect x="663.8" y="1071.8999999999999" width="1" height="1" fill="#fff"/><rect x="664.5" y="1072.6" width="1.300" height="1.300" fill="#3c3c3c"/><rect x="667.8" y="1071.8999999999999" width="1" height="1" fill="#fff"/><rect x="668.5" y="1072.6" width="1.300" height="1.300" fill="#3c3c3c"/><rect x="1123.8" y="1051.8999999999999" width="1" height="1" fill="#fff"/><rect x="1124.5" y="1052.6" width="1.300" height="1.300" fill="#3c3c3c"/><rect x="1127.8" y="1051.8999999999999" width="1" height="1" fill="#fff"/><rect x="1128.5" y="1052.6" width="1.300" height="1.300" fill="#3c3c3c"/><rect x="1125.8" y="1053.8999999999999" width="1" height="1" fill="#fff"/><rect x="1126.5" y="1054.6" width="1.300" height="1.300" fill="#3c3c3c"/><rect x="1123.8" y="1055.8999999999999" width="1" height="1" fill="#fff"/><rect x="1124.5" y="1056.6" width="1.300" height="1.300" fill="#3c3c3c"/><rect x="1127.8" y="1055.8999999999999" width="1" height="1" fill="#fff"/><rect x="1128.5" y="1056.6" width="1.300" height="1.300" fill="#3c3c3c"/><rect x="1125.8" y="1057.8999999999999" width="1" height="1" fill="#fff"/><rect x="1126.5" y="1058.6" width="1.300" height="1.300" fill="#3c3c3c"/><rect x="1123.8" y="1059.8999999999999" width="1" height="1" fill="#fff"/><rect x="1124.5" y="1060.6" width="1.300" height="1.300" fill="#3c3c3c"/><rect x="1127.8" y="1059.8999999999999" width="1" height="1" fill="#fff"/><rect x="1128.5" y="1060.6" width="1.300" height="1.300" fill="#3c3c3c"/><rect x="1125.8" y="1061.8999999999999" width="1" height="1" fill="#fff"/><rect x="1126.5" y="1062.6" width="1.300" height="1.300" fill="#3c3c3c"/><rect x="1123.8" y="1063.8999999999999" width="1" height="1" fill="#fff"/><rect x="1124.5" y="1064.6" width="1.300" height="1.300" fill="#3c3c3c"/><rect x="1127.8" y="1063.8999999999999" width="1" height="1" fill="#fff"/><rect x="1128.5" y="1064.6" width="1.300" height="1.300" fill="#3c3c3c"/><rect x="1125.8" y="1065.8999999999999" width="1" height="1" fill="#fff"/><rect x="1126.5" y="1066.6" width="1.300" height="1.300" fill="#3c3c3c"/><rect x="1123.8" y="1067.8999999999999" width="1" height="1" fill="#fff"/><rect x="1124.5" y="1068.6" width="1.300" height="1.300" fill="#3c3c3c"/><rect x="1127.8" y="1067.8999999999999" width="1" height="1" fill="#fff"/><rect x="1128.5" y="1068.6" width="1.300" height="1.300" fill="#3c3c3c"/><rect x="1125.8" y="1069.8999999999999" width="1" height="1" fill="#fff"/><rect x="1126.5" y="1070.6" width="1.300" height="1.300" fill="#3c3c3c"/><rect x="1123.8" y="1071.8999999999999" width="1" height="1" fill="#fff"/><rect x="1124.5" y="1072.6" width="1.300" height="1.300" fill="#3c3c3c"/><rect x="1127.8" y="1071.8999999999999" width="1" height="1" fill="#fff"/><rect x="1128.5" y="1072.6" width="1.300" height="1.300" fill="#3c3c3c"/><rect x="363" y="1054" width="19" height="19" fill="url(#sqb)"/><rect x="386.2" y="1054" width="19" height="19" fill="url(#sqg)"/><rect x="409.2" y="1054" width="19" height="19" fill="url(#sqg)"/><rect x="432.2" y="1054" width="19" height="19" fill="url(#sqg)"/><path d="M1095 1057.500 L1104 1063 L1095 1068.500 Z" fill="#222"/></svg>
<div style="left:20px;top:1053px;width:293px;height:21px;background:linear-gradient(#fbfbfb,#d2d2d2);border:1px solid #8c8c8c;border-radius:2px;"></div>
<svg style="left:28px;top:1057px;" width="12" height="12" viewBox="0 0 12 12"><rect x="0.800" y="0.800" width="10.400" height="10.400" fill="#fff" stroke="#555" stroke-width="1.400"/><rect x="0.100" y="0.100" width="11.800" height="3" fill="#555"/></svg>
<span style="left:48.20px;top:1056.72px;font:400 11.5px/normal 'Liberation Mono',monospace;color:#111;letter-spacing:0.027px;white-space:pre;">Syn_Lum_Master</span>
<div style="left:296px;top:1055px;width:1px;height:17px;background:#a8a8a8;"></div>
<svg style="left:298px;top:1061px;" width="11" height="6" viewBox="0 0 11 6"><path d="M0.500 0.200 H10 L5.250 5.600 Z" fill="#111"/></svg>
<div style="left:317px;top:1053px;width:20px;height:21px;background:#fff;border:1px solid #8c8c8c;"></div>
<svg style="left:321px;top:1057px;" width="12" height="13" viewBox="0 0 12 13"><path d="M3.500 0.800 H11 V11.500 H3.500 Z" fill="#fff" stroke="#555" stroke-width="1.100"/><path d="M0.300 12 V5 L3.500 1.500 V12 Z" fill="#555"/></svg>
<span style="left:1148.50px;top:1056.72px;font:400 11.5px/normal 'Liberation Mono',monospace;color:#111;letter-spacing:0.106px;white-space:pre;">w:6400 · h:4297 · n:1 · f32 · Gray · 104.907 MiB · Modified · Masked</span>
</body></html>
